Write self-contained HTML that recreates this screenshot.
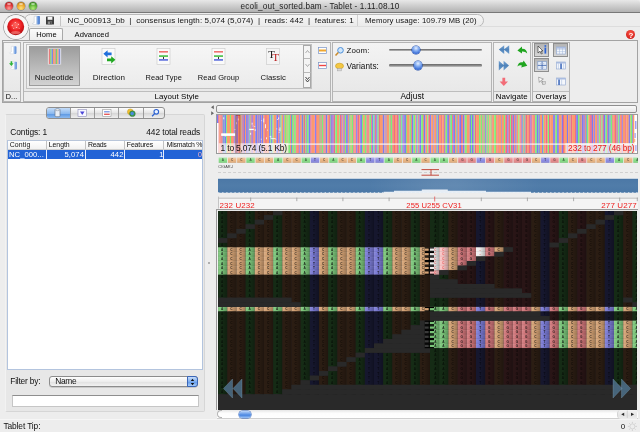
<!DOCTYPE html>
<html lang="en"><head><meta charset="utf-8"><title>ecoli_out_sorted.bam - Tablet - 1.11.08.10</title>
<style>

html,body{margin:0;padding:0;}
body{width:640px;height:432px;overflow:hidden;background:#ededed;position:relative;font-family:"Liberation Sans",sans-serif;color:#000;}
.a{position:absolute;}
.t{position:absolute;white-space:nowrap;line-height:1;}
#titlebar{left:0;top:0;width:640px;height:11.6px;background:linear-gradient(#e8e8e8,#cfcfcf 45%,#b2b2b2);border-bottom:1px solid #787878;border-radius:3px 3px 0 0;}
.tl{position:absolute;top:2px;width:8px;height:8px;border-radius:50%;}
#taskrow{left:0;top:13px;width:640px;height:15px;background:#ededed;}
#ribbon{left:1.5px;top:40.4px;width:636px;height:62.6px;border:1px solid #a3a3a3;background:#ededed;box-sizing:border-box;}
.band{position:absolute;top:42px;height:59.5px;border:1px solid #b4b4b4;background:linear-gradient(#f3f3f3,#e6e6e6);box-sizing:border-box;}
.bandt{position:absolute;left:0;right:0;bottom:0;height:9px;border-top:1px solid #bdbdbd;background:#ececec;}

</style></head><body>
<div class="a" id="titlebar"></div>
<div class="tl" style="left:4.9px;top:2.2px;background:radial-gradient(circle at 50% 78%,#ff9c98 0,#dd2f30 55%,#8a1b1b 100%);box-shadow:0 0 0 .5px rgba(60,60,60,.55)"></div>
<div class="a" style="left:6.9px;top:2.8px;width:4px;height:2px;border-radius:50%;background:rgba(255,255,255,.55)"></div>
<div class="tl" style="left:16.9px;top:2.2px;background:radial-gradient(circle at 50% 78%,#ffe27a 0,#eaa024 55%,#8e5a0e 100%);box-shadow:0 0 0 .5px rgba(60,60,60,.55)"></div>
<div class="a" style="left:18.9px;top:2.8px;width:4px;height:2px;border-radius:50%;background:rgba(255,255,255,.55)"></div>
<div class="tl" style="left:28.9px;top:2.2px;background:radial-gradient(circle at 50% 78%,#b6ec7c 0,#52ae2e 55%,#2a6616 100%);box-shadow:0 0 0 .5px rgba(60,60,60,.55)"></div>
<div class="a" style="left:30.9px;top:2.8px;width:4px;height:2px;border-radius:50%;background:rgba(255,255,255,.55)"></div>
<div class="a" id="taskrow"></div>
<div class="a" style="left:24px;top:14px;width:459.5px;height:13px;border:1px solid #b9b9b9;border-radius:7px;background:linear-gradient(#f6f6f6,#ebebeb);box-sizing:border-box"></div>
<div class="a" style="left:60px;top:16px;width:1px;height:10px;background:#c4c4c4"></div>
<div class="a" style="left:357px;top:15px;width:1px;height:11px;background:#d0d0d0"></div>
<div class="a" style="left:3.6px;top:14.8px;width:24.2px;height:24.2px;border-radius:50%;background:radial-gradient(circle at 50% 50%,#fdfdfd 0,#f6f6f6 70%,#e2e2e2 100%);box-shadow:0 0 0 .7px #8c8c8c"></div>
<svg class="a" style="left:7px;top:18px" width="18" height="18" viewBox="0 0 18 18"><defs><radialGradient id="orb" cx=".5" cy=".4" r=".62"><stop offset="0" stop-color="#ff6a62"/><stop offset=".55" stop-color="#ec1f22"/><stop offset="1" stop-color="#a80b0e"/></radialGradient></defs><circle cx="8.7" cy="8.8" r="8.5" fill="url(#orb)"/><ellipse cx="8.7" cy="14.6" rx="4.6" ry="1.6" fill="#ff9a94" fill-opacity=".55"/><g fill="#fff" fill-opacity=".9"><circle cx="5.2" cy="7.2" r=".55"/><circle cx="8.2" cy="4.6" r=".5"/><circle cx="11.4" cy="6.2" r=".55"/><circle cx="9.6" cy="9.4" r=".5"/><circle cx="6.6" cy="10.6" r=".45"/><circle cx="12.2" cy="10.2" r=".45"/></g><path d="M5.2 7.2 L8.2 4.6 L11.4 6.2 L9.6 9.4 L6.6 10.6 L5.2 7.2 M9.6 9.4 L12.2 10.2" stroke="#fff" stroke-opacity=".45" stroke-width=".35" fill="none"/></svg>
<svg class="a" style="left:31px;top:15px" width="26" height="12" viewBox="0 0 26 12"><defs><linearGradient id="bk" x1="0" x2="1" y1="0" y2="0"><stop offset="0" stop-color="#9cc0f0"/><stop offset="1" stop-color="#2f66c4"/></linearGradient></defs><path d="M1.2 8.6 L2 9.4 L5.6 9.4 L5.6 1.2 L3.2 1.2 L3.2 7.8 Z" fill="#fff" stroke="#b8c0cc" stroke-width=".5"/><path d="M5.6 1 L8.2 1 Q8.8 1 8.8 1.8 L8.8 8.6 Q8.8 9.6 7.6 9.6 L5.6 9.6 Z" fill="url(#bk)"/><rect x="15" y="1.6" width="8" height="8" rx=".6" fill="#3c3c3c"/><rect x="16.6" y="1.8" width="4.8" height="3" fill="#f4f4f4"/><rect x="16.8" y="6.4" width="4.2" height="3.2" fill="#8e8e8e"/><rect x="19.4" y="6.8" width="1" height="2.4" fill="#222"/></svg>
<div class="a" style="left:28px;top:26px;width:612px;height:1px;background:#dddddd"></div>
<div class="a" style="left:29px;top:28px;width:34px;height:14px;border:1px solid #a9a9a9;border-bottom:none;border-radius:2px 2px 0 0;background:linear-gradient(#fbfbfb,#ececec);box-sizing:border-box"></div>
<div class="a" style="left:626px;top:30px;width:9px;height:9px;border-radius:50%;background:radial-gradient(circle at 50% 35%,#ff5a4a,#c40d0d)"></div>
<div class="a" id="ribbon"></div>
<div class="a" style="left:29.5px;top:41px;width:33px;height:1px;background:#ececec"></div>
<div class="band" style="left:3px;width:18px"><div class="bandt"></div></div>
<div class="band" style="left:23px;width:308px"><div class="bandt"></div></div>
<div class="band" style="left:332px;width:160px"><div class="bandt"></div></div>
<div class="band" style="left:493px;width:38px"><div class="bandt"></div></div>
<div class="band" style="left:532px;width:38px"><div class="bandt"></div></div>
<div class="a" style="left:26px;top:44px;width:285.5px;height:44.5px;border:1px solid #c2c2c2;box-sizing:border-box;background:linear-gradient(#f6f6f6,#ebebeb)"></div>
<div class="a" style="left:29px;top:46px;width:51px;height:40px;border:1px solid #9c9c9c;background:linear-gradient(#9d9d9d,#bdbdbd 60%,#d2d2d2);box-sizing:border-box"></div>
<svg class="a" style="left:40px;top:46px" width="260" height="22" viewBox="0 0 260 22"><rect x="8" y="2.5" width="13" height="16" fill="#f6f6f6" stroke="#c8c8c8" stroke-width=".6"/><rect x="8.8" y="3" width="1.4" height="15" fill="#e67c7c"/><rect x="10.2" y="3" width="1.4" height="15" fill="#74d074"/><rect x="11.6" y="3" width="1.4" height="15" fill="#7c88e4"/><rect x="13" y="3" width="1.4" height="15" fill="#f0a466"/><rect x="14.4" y="3" width="1.4" height="15" fill="#e67c7c"/><rect x="15.8" y="3" width="1.4" height="15" fill="#74d074"/><rect x="17.2" y="3" width="1.4" height="15" fill="#f0a466"/><rect x="18.6" y="3" width="1.6" height="15" fill="#7c88e4"/><rect x="62" y="2.5" width="13" height="16" fill="#fafafa" stroke="#c8c8c8" stroke-width=".6"/><path d="M63.4 7.8 L67.6 4.2 L67.6 6.4 L71.6 6.4 L71.6 9.2 L67.6 9.2 L67.6 11.4 Z" fill="#1f6fdc"/><path d="M75.4 13.8 L71.2 10.2 L71.2 12.4 L67 12.4 L67 15.2 L71.2 15.2 L71.2 17.4 Z" fill="#22a822"/><rect x="117" y="2.5" width="13" height="16" fill="#fafafa" stroke="#c8c8c8" stroke-width=".6"/><rect x="119" y="5" width="9" height="1.6" fill="#ee7070"/><rect x="119" y="9.2" width="9" height="1.8" fill="#58c458"/><rect x="119" y="13" width="9" height="1.8" fill="#6a7be0"/><rect x="123" y="11" width="1" height="2" fill="#333"/><rect x="172" y="2.5" width="13" height="16" fill="#fafafa" stroke="#c8c8c8" stroke-width=".6"/><rect x="174" y="5" width="9" height="1.6" fill="#ee7070"/><rect x="174" y="9.2" width="9" height="1.8" fill="#58c458"/><rect x="174" y="13" width="9" height="1.8" fill="#6a7be0"/><rect x="178" y="11" width="1" height="2" fill="#333"/><rect x="226.5" y="2.5" width="13" height="16" fill="#f4f4f4" stroke="#c8c8c8" stroke-width=".6"/></svg>
<div class="a" style="left:303.4px;top:45px;width:7.6px;height:42.6px;border:1px solid #a8a8a8;background:#f4f4f4;box-sizing:border-box"></div>
<div class="a" style="left:304px;top:58px;width:7px;height:1px;background:#b8b8b8"></div><div class="a" style="left:304px;top:72px;width:7px;height:1px;background:#b8b8b8"></div>
<svg class="a" style="left:304px;top:45px" width="7" height="42" viewBox="0 0 7 42"><path d="M1.5 8 L3.5 5.5 L5.5 8" fill="none" stroke="#999" stroke-width=".8"/><path d="M1.5 19 L3.5 21.5 L5.5 19" fill="none" stroke="#999" stroke-width=".8"/><path d="M1.5 32 L3.5 34.5 L5.5 32 M1.5 34.5 L3.5 37 L5.5 34.5" fill="none" stroke="#333" stroke-width=".9"/></svg>
<svg class="a" style="left:317px;top:45px" width="12" height="26" viewBox="0 0 12 26"><rect x="1.5" y="2.5" width="8" height="6" fill="#fff" stroke="#7a93c4" stroke-width=".7"/><rect x="2" y="4.5" width="7" height="2" fill="#f0a830"/><rect x="1.5" y="17.5" width="8" height="6" fill="#fff" stroke="#7a93c4" stroke-width=".7"/><rect x="2" y="19.8" width="7" height="1.4" fill="#e44"/></svg>
<svg class="a" style="left:8px;top:45px" width="12" height="27" viewBox="0 0 12 27"><defs><linearGradient id="bk2" x1="0" x2="1" y1="0" y2="0"><stop offset="0" stop-color="#b4d0f4"/><stop offset="1" stop-color="#4a7fd2"/></linearGradient></defs><path d="M1.6 7.8 L2.4 8.8 L5.6 8.8 L5.6 1.4 L3.4 1.4 L3.4 7 Z" fill="#fff" stroke="#c4ccd8" stroke-width=".4"/><path d="M5.6 1.2 L7.8 1.2 Q8.4 1.2 8.4 2 L8.4 8 Q8.4 9 7.4 9 L5.6 9 Z" fill="url(#bk2)"/><path d="M2.6 23.4 L3.4 24.4 L6.2 24.4 L6.2 17 L4.2 17 L4.2 22.6 Z" fill="#fff" stroke="#c4ccd8" stroke-width=".4"/><path d="M6.2 16.8 L8.2 16.8 Q8.8 16.8 8.8 17.6 L8.8 23.6 Q8.8 24.6 7.8 24.6 L6.2 24.6 Z" fill="url(#bk2)"/><path d="M2.6 16.2 L2.6 18.2 L1 18.2 L3.4 21 L5.6 18.2 L4.2 18.2 L4.2 16.2 Z" fill="#2fb43a"/></svg>
<div class="a" style="left:388.6px;top:48.6px;width:93.4px;height:2.7px;border-radius:1.3px;background:linear-gradient(#666,#8e8e8e 55%,#c8c8c8)"></div>
<div class="a" style="left:411.8px;top:45.6px;width:8.6px;height:8.6px;border-radius:50%;background:radial-gradient(circle at 50% 28%,#e4efff 0,#7fa9f0 40%,#3c6fd6 75%,#2a58bc 100%);box-shadow:0 0 0 .6px #1f4aa6"></div>
<div class="a" style="left:388.6px;top:64.1px;width:93.4px;height:2.7px;border-radius:1.3px;background:linear-gradient(#666,#8e8e8e 55%,#c8c8c8)"></div>
<div class="a" style="left:413.8px;top:61.1px;width:8.6px;height:8.6px;border-radius:50%;background:radial-gradient(circle at 50% 28%,#e4efff 0,#7fa9f0 40%,#3c6fd6 75%,#2a58bc 100%);box-shadow:0 0 0 .6px #1f4aa6"></div>
<svg class="a" style="left:334px;top:45px" width="12" height="30" viewBox="0 0 12 30"><circle cx="6.5" cy="5.3" r="2.8" fill="#cfe6fb" stroke="#4d8fd8" stroke-width="1"/><path d="M4.3 7.5 L1.5 10.5" stroke="#c98a2b" stroke-width="1.5"/><ellipse cx="5.5" cy="21" rx="4" ry="2.8" fill="#f4c844" stroke="#c79a1a" stroke-width=".6"/><rect x="3.5" y="23.5" width="4" height="2.4" fill="#d8d8d8" stroke="#999" stroke-width=".4"/></svg>
<svg class="a" style="left:494px;top:44px" width="36" height="46" viewBox="0 0 36 46"><defs><linearGradient id="nb" x1="0" x2="0" y1="0" y2="1"><stop offset="0" stop-color="#7aa6d4"/><stop offset=".5" stop-color="#4f83ba"/><stop offset="1" stop-color="#6c9ccc"/></linearGradient></defs><path d="M10.2 1.2 L4.8 5.6 L10.2 10.1 Z M15.2 1.2 L9.8 5.6 L15.2 10.1 Z" fill="url(#nb)"/><path d="M4.8 16.7 L10.2 21.5 L4.8 26.4 Z M9.6 16.7 L15 21.5 L9.6 26.4 Z" fill="url(#nb)"/><path d="M8.4 33.8 L11.2 33.8 L11.2 37.6 L14 37.6 L9.8 42 L5.6 37.6 L8.4 37.6 Z" fill="#f26d78"/><path d="M23.4 6.4 L28 2.6 L28 4.7 Q32.6 4.4 33.2 9.4 Q31 7.2 28 7.5 L28 9.6 Z" fill="#1fa51f"/><path d="M23.4 22.6 Q24.4 17.4 29 18.3 L29.6 16.5 L33.3 21.8 L27.2 23.6 L27.9 21.4 Q25.4 20.6 23.4 22.6 Z" fill="#1fa51f"/></svg>
<div class="a" style="left:534px;top:43px;width:15px;height:14px;border:1px solid #8e8e8e;background:linear-gradient(#b4b4b4,#d6d6d6);box-sizing:border-box"></div>
<div class="a" style="left:553px;top:43px;width:15px;height:14px;border:1px solid #8e8e8e;background:linear-gradient(#b4b4b4,#d6d6d6);box-sizing:border-box"></div>
<div class="a" style="left:534px;top:58px;width:15px;height:14px;border:1px solid #8e8e8e;background:linear-gradient(#b4b4b4,#d6d6d6);box-sizing:border-box"></div>
<svg class="a" style="left:534px;top:43px" width="36" height="46" viewBox="0 0 36 46"><path d="M4 3 L4 10 L6 8.3 L7.3 11 L8.3 10.5 L7 8 L9 8 Z" fill="#fff" stroke="#222" stroke-width=".6"/><rect x="10.5" y="4.6" width="1.7" height="6" fill="#2a62d8"/><rect x="10.5" y="2.2" width="1.7" height="1.6" fill="#2a62d8"/><rect x="22.5" y="4" width="9" height="7" fill="#f4f7fc" stroke="#8ea6d0" stroke-width=".6"/><path d="M22.5 6.3 H31.5 M22.5 8.6 H31.5 M25.5 4 V11 M28.5 4 V11" stroke="#9db2d8" stroke-width=".45"/><rect x="22.5" y="4" width="9" height="1.6" fill="#a9bce0"/><rect x="3.8" y="18.6" width="8.6" height="7.6" fill="#e4ecf8" stroke="#7f9ccc" stroke-width=".6"/><path d="M8.1 18.6 V26.2 M3.8 22.4 H12.4" stroke="#3a62ac" stroke-width=".8"/><path d="M6 20.5 H10.2 M6 24.3 H10.2" stroke="#9db2d8" stroke-width=".5"/><rect x="22.5" y="19" width="9" height="7" fill="#f4f7fc" stroke="#8ea6d0" stroke-width=".6"/><rect x="22.5" y="19" width="9" height="1.5" fill="#a9bce0"/><rect x="26.2" y="20.5" width="1.7" height="5.5" fill="#4f76c0"/><path d="M24.4 20.5 V26 M29.6 20.5 V26" stroke="#9db2d8" stroke-width=".45"/><path d="M4.6 34.2 L9.4 36 L7.4 37 L9.8 40.6 L8.9 41.2 L6.6 37.7 L5.3 39.4 Z" fill="#fff" stroke="#666" stroke-width=".5"/><rect x="8.6" y="38.4" width="3" height="2.8" fill="#d8d8d8" stroke="#8a8a8a" stroke-width=".4"/><rect x="22.5" y="35" width="9" height="7" fill="#f4f7fc" stroke="#8ea6d0" stroke-width=".6"/><rect x="22.5" y="35" width="9" height="1.5" fill="#a9bce0"/><rect x="24.2" y="36.5" width="1.7" height="5.5" fill="#4f76c0"/><path d="M27.6 36.5 V42" stroke="#9db2d8" stroke-width=".45"/></svg>
<div class="a" style="left:5px;top:114px;width:200px;height:298px;border:1px solid #d6d6d6;border-left-color:#f2f2f2;background:#e7e7e7;box-sizing:border-box;border-radius:2px"></div>
<div class="a" style="left:46px;top:107px;width:119px;height:11.5px;border:1px solid #8f8f8f;border-radius:3px;background:linear-gradient(#fdfdfd,#e4e4e4 50%,#d6d6d6 52%,#efefef);box-sizing:border-box;overflow:hidden"><div class="a" style="left:0;top:0;width:22.5px;height:12px;background:linear-gradient(#c4dcf8,#86b6ee 50%,#5f9ae4 52%,#a6ccf5)"></div><div class="a" style="left:22.5px;top:0;width:1px;height:12px;background:#9a9a9a"></div><div class="a" style="left:47px;top:0;width:1px;height:12px;background:#9a9a9a"></div><div class="a" style="left:71.3px;top:0;width:1px;height:12px;background:#9a9a9a"></div><div class="a" style="left:96.3px;top:0;width:1px;height:12px;background:#9a9a9a"></div></div>
<svg class="a" style="left:46px;top:107px" width="119" height="12" viewBox="0 0 119 12"><rect x="9" y="2.2" width="5" height="7.5" rx="1" fill="#e8eef6" stroke="#6a7a90" stroke-width=".7"/><ellipse cx="11.5" cy="2.8" rx="2.5" ry=".9" fill="#fff" stroke="#6a7a90" stroke-width=".5"/><rect x="32" y="2.5" width="8.5" height="7" fill="#f8f8ff" stroke="#8d8db8" stroke-width=".6"/><path d="M34 4.5 L38.5 4.5 L36.25 8 Z" fill="#4b46d8"/><rect x="56.7" y="2.5" width="8.3" height="7" fill="#fff" stroke="#999" stroke-width=".6"/><rect x="58.1" y="4.2" width="5.6" height="1.2" fill="#6b8de0"/><rect x="58.1" y="6.6" width="5.6" height="1.4" fill="#e45a5a"/><circle cx="84.3" cy="4.8" r="2.9" fill="#f0c030" stroke="#b48a10" stroke-width=".4"/><circle cx="86.4" cy="6.7" r="2.9" fill="#3c9a50" stroke="#256a30" stroke-width=".4"/><circle cx="86.2" cy="6.5" r="1.7" fill="#4a8ae0"/><circle cx="110.3" cy="4.8" r="2.3" fill="#eaf3ff" stroke="#2d62d0" stroke-width="1.1"/><path d="M108.6 6.6 L106.1 9.3" stroke="#2d62d0" stroke-width="1.3"/></svg>
<div class="a" style="left:7px;top:140px;width:196px;height:229.5px;background:#fff;border:1px solid #b3c4de;border-top-color:#b9c6da;box-sizing:border-box"></div>
<div class="a" style="left:8px;top:141px;width:194px;height:8.5px;background:linear-gradient(#fff,#f2f2f2);border-bottom:1px solid #d0d0d0;box-sizing:border-box"></div>
<div class="a" style="left:8px;top:150px;width:194px;height:9px;background:#2263d6"></div>
<div class="a" style="left:45.8px;top:141px;width:1px;height:8px;background:#c2c2c2"></div>
<div class="a" style="left:45.8px;top:150px;width:1px;height:9px;background:#e8eefc"></div>
<div class="a" style="left:84.9px;top:141px;width:1px;height:8px;background:#c2c2c2"></div>
<div class="a" style="left:84.9px;top:150px;width:1px;height:9px;background:#e8eefc"></div>
<div class="a" style="left:123.9px;top:141px;width:1px;height:8px;background:#c2c2c2"></div>
<div class="a" style="left:123.9px;top:150px;width:1px;height:9px;background:#e8eefc"></div>
<div class="a" style="left:163.0px;top:141px;width:1px;height:8px;background:#c2c2c2"></div>
<div class="a" style="left:163.0px;top:150px;width:1px;height:9px;background:#e8eefc"></div>
<div class="a" style="left:48.5px;top:375.5px;width:149px;height:11.5px;border:1px solid #8c8c8c;border-radius:3px;background:linear-gradient(#fefefe,#ededed 50%,#e0e0e0 52%,#f2f2f2);box-sizing:border-box;box-shadow:0 .6px .6px rgba(0,0,0,.25)"></div>
<div class="a" style="left:186.5px;top:375.5px;width:11px;height:11.5px;border:1px solid #3a66b8;border-radius:0 3px 3px 0;background:linear-gradient(#c6dcfa,#7eaef0 50%,#5a94e8 52%,#a9cdf8);box-sizing:border-box"></div>
<svg class="a" style="left:186.5px;top:375.5px" width="11" height="12" viewBox="0 0 11 12"><path d="M3.8 5 L5.5 2.8 L7.2 5 Z M3.8 7 L5.5 9.2 L7.2 7 Z" fill="#111"/></svg>
<div class="a" style="left:12px;top:394.5px;width:187px;height:12px;border:1px solid #c6c6c6;border-top-color:#8e8e8e;background:#fff;box-sizing:border-box"></div>
<div class="a" style="left:0;top:419px;width:640px;height:1px;background:#f6f6f6"></div>
<svg class="a" style="left:627px;top:420.5px" width="11" height="11" viewBox="0 0 11 11"><circle cx="5.4" cy="5.4" r="2.5" fill="none" stroke="#cfcfcf" stroke-width=".8"/><path d="M5.4 .9 V2.4 M5.4 8.4 V9.9 M.9 5.4 H2.4 M8.4 5.4 H9.9 M2.2 2.2 L3.3 3.3 M7.5 7.5 L8.6 8.6 M8.6 2.2 L7.5 3.3 M2.2 8.6 L3.3 7.5" stroke="#cdcdcd" stroke-width=".9"/></svg>
<svg class="a" style="left:209px;top:102px" width="7" height="16" viewBox="0 0 7 16"><path d="M4.8 3.2 L2 5.2 L4.8 7.2 Z" fill="#666"/><path d="M2.2 9.2 L5 11.2 L2.2 13.2 Z" fill="#666"/></svg>
<div class="a" style="left:208px;top:262px;width:2px;height:2px;background:#9a9a9a;border-radius:50%"></div>
<div class="a" style="left:216px;top:104.8px;width:421px;height:8.4px;border:1px solid #8f8f8f;border-radius:2px;background:linear-gradient(#f9f9f9,#e9e9e9);box-sizing:border-box"></div>
<div class="a" style="left:216px;top:113.7px;width:421.5px;height:40.8px;border:1px solid #9a9a9a;background:#fff;box-sizing:border-box;overflow:hidden">
<svg class="a" style="left:0.4px;top:0" width="420" height="39" viewBox="0 0 420 39">
<rect x="0.0" y="0" width="1.3" height="38" fill="#7a7af4"/>
<rect x="1.2" y="0" width="1.3" height="38" fill="#ee6c86"/>
<rect x="2.4" y="0" width="1.2" height="38" fill="#fb9a6c"/>
<rect x="3.5" y="0" width="1.3" height="38" fill="#ee6c86"/>
<rect x="4.7" y="0" width="1.1" height="38" fill="#fb9a6c"/>
<rect x="5.6" y="0" width="1.3" height="38" fill="#7a7af4"/>
<rect x="6.8" y="0" width="0.8" height="38" fill="#7af07a"/>
<rect x="7.4" y="0" width="1.8" height="38" fill="#7a7af4"/>
<rect x="9.1" y="0" width="1.1" height="38" fill="#7af07a"/>
<rect x="10.0" y="0" width="3.0" height="38" fill="#fb9a6c"/>
<rect x="12.9" y="0" width="1.2" height="38" fill="#7af07a"/>
<rect x="14.0" y="0" width="2.4" height="38" fill="#fb9a6c"/>
<rect x="16.3" y="0" width="1.2" height="38" fill="#ee6c86"/>
<rect x="17.4" y="0" width="1.3" height="38" fill="#7a7af4"/>
<rect x="18.6" y="0" width="0.8" height="38" fill="#7af07a"/>
<rect x="19.2" y="0" width="1.8" height="38" fill="#7a7af4"/>
<rect x="20.9" y="0" width="3.0" height="38" fill="#fb9a6c"/>
<rect x="23.8" y="0" width="0.8" height="38" fill="#7af07a"/>
<rect x="24.4" y="0" width="0.8" height="38" fill="#ee6c86"/>
<rect x="25.0" y="0" width="0.8" height="38" fill="#7a7af4"/>
<rect x="25.6" y="0" width="0.8" height="38" fill="#fb9a6c"/>
<rect x="26.2" y="0" width="0.8" height="38" fill="#ee6c86"/>
<rect x="26.8" y="0" width="1.2" height="38" fill="#7a7af4"/>
<rect x="27.9" y="0" width="1.3" height="38" fill="#fb9a6c"/>
<rect x="29.1" y="0" width="1.8" height="38" fill="#7a7af4"/>
<rect x="30.8" y="0" width="0.8" height="38" fill="#fb9a6c"/>
<rect x="31.4" y="0" width="1.3" height="38" fill="#7a7af4"/>
<rect x="32.6" y="0" width="1.1" height="38" fill="#7af07a"/>
<rect x="33.5" y="0" width="1.2" height="38" fill="#ee6c86"/>
<rect x="34.6" y="0" width="1.2" height="38" fill="#7a7af4"/>
<rect x="35.7" y="0" width="1.1" height="38" fill="#ee6c86"/>
<rect x="36.6" y="0" width="1.8" height="38" fill="#fb9a6c"/>
<rect x="38.3" y="0" width="1.8" height="38" fill="#7a7af4"/>
<rect x="40.0" y="0" width="0.8" height="38" fill="#fb9a6c"/>
<rect x="40.6" y="0" width="1.3" height="38" fill="#7a7af4"/>
<rect x="41.8" y="0" width="0.8" height="38" fill="#fb9a6c"/>
<rect x="42.4" y="0" width="1.8" height="38" fill="#7a7af4"/>
<rect x="44.1" y="0" width="0.8" height="38" fill="#fb9a6c"/>
<rect x="44.7" y="0" width="1.8" height="38" fill="#7a7af4"/>
<rect x="46.4" y="0" width="1.8" height="38" fill="#fb9a6c"/>
<rect x="48.1" y="0" width="1.8" height="38" fill="#ee6c86"/>
<rect x="49.8" y="0" width="2.4" height="38" fill="#fb9a6c"/>
<rect x="52.1" y="0" width="1.3" height="38" fill="#7a7af4"/>
<rect x="53.3" y="0" width="1.1" height="38" fill="#7af07a"/>
<rect x="54.2" y="0" width="1.3" height="38" fill="#7a7af4"/>
<rect x="55.4" y="0" width="1.2" height="38" fill="#7af07a"/>
<rect x="56.5" y="0" width="3.0" height="38" fill="#fb9a6c"/>
<rect x="59.4" y="0" width="1.8" height="38" fill="#7a7af4"/>
<rect x="61.1" y="0" width="0.8" height="38" fill="#ee6c86"/>
<rect x="61.7" y="0" width="0.8" height="38" fill="#fb9a6c"/>
<rect x="62.3" y="0" width="1.3" height="38" fill="#7a7af4"/>
<rect x="63.5" y="0" width="1.2" height="38" fill="#7af07a"/>
<rect x="64.6" y="0" width="1.8" height="38" fill="#fb9a6c"/>
<rect x="66.3" y="0" width="1.1" height="38" fill="#7a7af4"/>
<rect x="67.2" y="0" width="0.8" height="38" fill="#fb9a6c"/>
<rect x="67.8" y="0" width="1.3" height="38" fill="#7af07a"/>
<rect x="69.0" y="0" width="0.8" height="38" fill="#fb9a6c"/>
<rect x="69.6" y="0" width="1.2" height="38" fill="#7af07a"/>
<rect x="70.7" y="0" width="0.8" height="38" fill="#fb9a6c"/>
<rect x="71.3" y="0" width="1.8" height="38" fill="#7af07a"/>
<rect x="73.0" y="0" width="1.1" height="38" fill="#fb9a6c"/>
<rect x="73.9" y="0" width="1.1" height="38" fill="#7a7af4"/>
<rect x="74.8" y="0" width="1.8" height="38" fill="#7af07a"/>
<rect x="76.5" y="0" width="0.8" height="38" fill="#ee6c86"/>
<rect x="77.1" y="0" width="1.8" height="38" fill="#7af07a"/>
<rect x="78.8" y="0" width="0.8" height="38" fill="#fb9a6c"/>
<rect x="79.4" y="0" width="0.8" height="38" fill="#ee6c86"/>
<rect x="80.0" y="0" width="1.3" height="38" fill="#fb9a6c"/>
<rect x="81.2" y="0" width="1.3" height="38" fill="#ee6c86"/>
<rect x="82.4" y="0" width="0.8" height="38" fill="#7a7af4"/>
<rect x="83.0" y="0" width="1.8" height="38" fill="#fb9a6c"/>
<rect x="84.7" y="0" width="1.3" height="38" fill="#7a7af4"/>
<rect x="85.9" y="0" width="0.8" height="38" fill="#7af07a"/>
<rect x="86.5" y="0" width="1.8" height="38" fill="#ee6c86"/>
<rect x="88.2" y="0" width="0.8" height="38" fill="#7af07a"/>
<rect x="88.8" y="0" width="0.8" height="38" fill="#fb9a6c"/>
<rect x="89.4" y="0" width="0.8" height="38" fill="#7a7af4"/>
<rect x="90.0" y="0" width="1.8" height="38" fill="#7af07a"/>
<rect x="91.7" y="0" width="1.8" height="38" fill="#7a7af4"/>
<rect x="93.4" y="0" width="1.3" height="38" fill="#ee6c86"/>
<rect x="94.6" y="0" width="3.0" height="38" fill="#fb9a6c"/>
<rect x="97.5" y="0" width="0.8" height="38" fill="#ee6c86"/>
<rect x="98.1" y="0" width="1.2" height="38" fill="#7a7af4"/>
<rect x="99.2" y="0" width="0.8" height="38" fill="#ee6c86"/>
<rect x="99.8" y="0" width="2.4" height="38" fill="#fb9a6c"/>
<rect x="102.1" y="0" width="0.8" height="38" fill="#ee6c86"/>
<rect x="102.7" y="0" width="1.1" height="38" fill="#7af07a"/>
<rect x="103.6" y="0" width="1.2" height="38" fill="#ee6c86"/>
<rect x="104.7" y="0" width="1.8" height="38" fill="#7af07a"/>
<rect x="106.4" y="0" width="1.3" height="38" fill="#ee6c86"/>
<rect x="107.6" y="0" width="1.2" height="38" fill="#fb9a6c"/>
<rect x="108.7" y="0" width="1.8" height="38" fill="#7a7af4"/>
<rect x="110.4" y="0" width="1.8" height="38" fill="#fb9a6c"/>
<rect x="112.1" y="0" width="1.1" height="38" fill="#ee6c86"/>
<rect x="113.0" y="0" width="0.8" height="38" fill="#7af07a"/>
<rect x="113.6" y="0" width="1.3" height="38" fill="#7a7af4"/>
<rect x="114.8" y="0" width="0.8" height="38" fill="#ee6c86"/>
<rect x="115.4" y="0" width="1.3" height="38" fill="#7a7af4"/>
<rect x="116.6" y="0" width="1.8" height="38" fill="#ee6c86"/>
<rect x="118.3" y="0" width="1.8" height="38" fill="#7af07a"/>
<rect x="120.0" y="0" width="2.4" height="38" fill="#fb9a6c"/>
<rect x="122.3" y="0" width="0.8" height="38" fill="#7af07a"/>
<rect x="122.9" y="0" width="1.8" height="38" fill="#ee6c86"/>
<rect x="124.6" y="0" width="0.8" height="38" fill="#7a7af4"/>
<rect x="125.2" y="0" width="1.3" height="38" fill="#fb9a6c"/>
<rect x="126.4" y="0" width="1.1" height="38" fill="#7a7af4"/>
<rect x="127.3" y="0" width="0.8" height="38" fill="#ee6c86"/>
<rect x="127.9" y="0" width="1.3" height="38" fill="#7af07a"/>
<rect x="129.1" y="0" width="1.8" height="38" fill="#7a7af4"/>
<rect x="130.8" y="0" width="1.2" height="38" fill="#fb9a6c"/>
<rect x="131.9" y="0" width="0.8" height="38" fill="#7a7af4"/>
<rect x="132.5" y="0" width="1.3" height="38" fill="#7af07a"/>
<rect x="133.7" y="0" width="1.1" height="38" fill="#fb9a6c"/>
<rect x="134.6" y="0" width="1.8" height="38" fill="#7af07a"/>
<rect x="136.3" y="0" width="1.3" height="38" fill="#ee6c86"/>
<rect x="137.5" y="0" width="1.2" height="38" fill="#fb9a6c"/>
<rect x="138.6" y="0" width="0.8" height="38" fill="#ee6c86"/>
<rect x="139.2" y="0" width="1.3" height="38" fill="#7a7af4"/>
<rect x="140.4" y="0" width="1.8" height="38" fill="#ee6c86"/>
<rect x="142.1" y="0" width="1.2" height="38" fill="#fb9a6c"/>
<rect x="143.2" y="0" width="1.8" height="38" fill="#7a7af4"/>
<rect x="144.9" y="0" width="1.3" height="38" fill="#7af07a"/>
<rect x="146.1" y="0" width="1.8" height="38" fill="#fb9a6c"/>
<rect x="147.8" y="0" width="1.8" height="38" fill="#7af07a"/>
<rect x="149.5" y="0" width="1.3" height="38" fill="#ee6c86"/>
<rect x="150.7" y="0" width="0.8" height="38" fill="#fb9a6c"/>
<rect x="151.3" y="0" width="0.8" height="38" fill="#ee6c86"/>
<rect x="151.9" y="0" width="0.8" height="38" fill="#fb9a6c"/>
<rect x="152.5" y="0" width="1.8" height="38" fill="#7af07a"/>
<rect x="154.2" y="0" width="1.1" height="38" fill="#ee6c86"/>
<rect x="155.1" y="0" width="1.3" height="38" fill="#7a7af4"/>
<rect x="156.3" y="0" width="1.3" height="38" fill="#7af07a"/>
<rect x="157.5" y="0" width="0.8" height="38" fill="#7a7af4"/>
<rect x="158.1" y="0" width="1.3" height="38" fill="#ee6c86"/>
<rect x="159.3" y="0" width="1.3" height="38" fill="#7a7af4"/>
<rect x="160.5" y="0" width="1.3" height="38" fill="#7af07a"/>
<rect x="161.7" y="0" width="1.3" height="38" fill="#ee6c86"/>
<rect x="162.9" y="0" width="3.0" height="38" fill="#fb9a6c"/>
<rect x="165.8" y="0" width="1.8" height="38" fill="#7a7af4"/>
<rect x="167.5" y="0" width="1.2" height="38" fill="#fb9a6c"/>
<rect x="168.6" y="0" width="1.1" height="38" fill="#7a7af4"/>
<rect x="169.5" y="0" width="3.0" height="38" fill="#fb9a6c"/>
<rect x="172.4" y="0" width="0.8" height="38" fill="#7af07a"/>
<rect x="173.0" y="0" width="0.8" height="38" fill="#ee6c86"/>
<rect x="173.6" y="0" width="1.8" height="38" fill="#7af07a"/>
<rect x="175.3" y="0" width="0.8" height="38" fill="#ee6c86"/>
<rect x="175.9" y="0" width="1.1" height="38" fill="#fb9a6c"/>
<rect x="176.8" y="0" width="1.3" height="38" fill="#ee6c86"/>
<rect x="178.0" y="0" width="1.8" height="38" fill="#fb9a6c"/>
<rect x="179.7" y="0" width="1.3" height="38" fill="#ee6c86"/>
<rect x="180.9" y="0" width="0.8" height="38" fill="#fb9a6c"/>
<rect x="181.5" y="0" width="0.8" height="38" fill="#7a7af4"/>
<rect x="182.1" y="0" width="1.1" height="38" fill="#7af07a"/>
<rect x="183.0" y="0" width="0.8" height="38" fill="#fb9a6c"/>
<rect x="183.6" y="0" width="0.8" height="38" fill="#7a7af4"/>
<rect x="184.2" y="0" width="1.3" height="38" fill="#7af07a"/>
<rect x="185.4" y="0" width="1.3" height="38" fill="#7a7af4"/>
<rect x="186.6" y="0" width="0.8" height="38" fill="#ee6c86"/>
<rect x="187.2" y="0" width="1.8" height="38" fill="#7a7af4"/>
<rect x="188.9" y="0" width="1.1" height="38" fill="#7af07a"/>
<rect x="189.8" y="0" width="3.0" height="38" fill="#fb9a6c"/>
<rect x="192.7" y="0" width="1.3" height="38" fill="#7af07a"/>
<rect x="193.9" y="0" width="1.1" height="38" fill="#fb9a6c"/>
<rect x="194.8" y="0" width="1.8" height="38" fill="#7a7af4"/>
<rect x="196.5" y="0" width="1.8" height="38" fill="#7af07a"/>
<rect x="198.2" y="0" width="1.2" height="38" fill="#fb9a6c"/>
<rect x="199.3" y="0" width="1.2" height="38" fill="#7a7af4"/>
<rect x="200.4" y="0" width="1.1" height="38" fill="#7af07a"/>
<rect x="201.3" y="0" width="1.3" height="38" fill="#ee6c86"/>
<rect x="202.5" y="0" width="1.8" height="38" fill="#7a7af4"/>
<rect x="204.2" y="0" width="1.8" height="38" fill="#7af07a"/>
<rect x="205.9" y="0" width="1.1" height="38" fill="#fb9a6c"/>
<rect x="206.8" y="0" width="1.8" height="38" fill="#7a7af4"/>
<rect x="208.5" y="0" width="1.8" height="38" fill="#fb9a6c"/>
<rect x="210.2" y="0" width="1.3" height="38" fill="#7af07a"/>
<rect x="211.4" y="0" width="1.8" height="38" fill="#ee6c86"/>
<rect x="213.1" y="0" width="1.2" height="38" fill="#7a7af4"/>
<rect x="214.2" y="0" width="2.4" height="38" fill="#fb9a6c"/>
<rect x="216.5" y="0" width="0.8" height="38" fill="#7a7af4"/>
<rect x="217.1" y="0" width="2.4" height="38" fill="#fb9a6c"/>
<rect x="219.4" y="0" width="1.1" height="38" fill="#7a7af4"/>
<rect x="220.3" y="0" width="0.8" height="38" fill="#7af07a"/>
<rect x="220.9" y="0" width="1.1" height="38" fill="#7a7af4"/>
<rect x="221.8" y="0" width="2.4" height="38" fill="#fb9a6c"/>
<rect x="224.1" y="0" width="1.3" height="38" fill="#ee6c86"/>
<rect x="225.3" y="0" width="1.8" height="38" fill="#fb9a6c"/>
<rect x="227.0" y="0" width="0.8" height="38" fill="#7a7af4"/>
<rect x="227.6" y="0" width="1.1" height="38" fill="#ee6c86"/>
<rect x="228.5" y="0" width="1.8" height="38" fill="#7af07a"/>
<rect x="230.2" y="0" width="1.8" height="38" fill="#7a7af4"/>
<rect x="231.9" y="0" width="1.1" height="38" fill="#fb9a6c"/>
<rect x="232.8" y="0" width="0.8" height="38" fill="#7a7af4"/>
<rect x="233.4" y="0" width="1.8" height="38" fill="#7af07a"/>
<rect x="235.1" y="0" width="1.2" height="38" fill="#ee6c86"/>
<rect x="236.2" y="0" width="1.8" height="38" fill="#7a7af4"/>
<rect x="237.9" y="0" width="1.3" height="38" fill="#fb9a6c"/>
<rect x="239.1" y="0" width="0.8" height="38" fill="#7af07a"/>
<rect x="239.7" y="0" width="1.1" height="38" fill="#7a7af4"/>
<rect x="240.6" y="0" width="1.8" height="38" fill="#fb9a6c"/>
<rect x="242.3" y="0" width="1.8" height="38" fill="#7a7af4"/>
<rect x="244.0" y="0" width="1.1" height="38" fill="#ee6c86"/>
<rect x="244.9" y="0" width="1.1" height="38" fill="#fb9a6c"/>
<rect x="245.8" y="0" width="1.8" height="38" fill="#7a7af4"/>
<rect x="247.5" y="0" width="0.8" height="38" fill="#fb9a6c"/>
<rect x="248.1" y="0" width="1.8" height="38" fill="#7af07a"/>
<rect x="249.8" y="0" width="3.0" height="38" fill="#fb9a6c"/>
<rect x="252.7" y="0" width="1.3" height="38" fill="#7a7af4"/>
<rect x="253.9" y="0" width="1.2" height="38" fill="#7af07a"/>
<rect x="255.0" y="0" width="1.8" height="38" fill="#7a7af4"/>
<rect x="256.7" y="0" width="0.8" height="38" fill="#fb9a6c"/>
<rect x="257.3" y="0" width="0.8" height="38" fill="#7af07a"/>
<rect x="257.9" y="0" width="1.3" height="38" fill="#ee6c86"/>
<rect x="259.1" y="0" width="3.0" height="38" fill="#fb9a6c"/>
<rect x="262.0" y="0" width="1.2" height="38" fill="#7af07a"/>
<rect x="263.1" y="0" width="0.8" height="38" fill="#fb9a6c"/>
<rect x="263.7" y="0" width="1.8" height="38" fill="#7af07a"/>
<rect x="265.4" y="0" width="1.3" height="38" fill="#ee6c86"/>
<rect x="266.6" y="0" width="1.3" height="38" fill="#7af07a"/>
<rect x="267.8" y="0" width="0.8" height="38" fill="#ee6c86"/>
<rect x="268.4" y="0" width="1.1" height="38" fill="#7a7af4"/>
<rect x="269.3" y="0" width="1.3" height="38" fill="#7af07a"/>
<rect x="270.5" y="0" width="0.8" height="38" fill="#ee6c86"/>
<rect x="271.1" y="0" width="1.3" height="38" fill="#7af07a"/>
<rect x="272.3" y="0" width="1.3" height="38" fill="#fb9a6c"/>
<rect x="273.5" y="0" width="1.2" height="38" fill="#7af07a"/>
<rect x="274.6" y="0" width="1.1" height="38" fill="#ee6c86"/>
<rect x="275.5" y="0" width="1.8" height="38" fill="#fb9a6c"/>
<rect x="277.2" y="0" width="1.8" height="38" fill="#7af07a"/>
<rect x="278.9" y="0" width="1.8" height="38" fill="#fb9a6c"/>
<rect x="280.6" y="0" width="1.2" height="38" fill="#ee6c86"/>
<rect x="281.7" y="0" width="2.4" height="38" fill="#fb9a6c"/>
<rect x="284.0" y="0" width="0.8" height="38" fill="#7a7af4"/>
<rect x="284.6" y="0" width="2.4" height="38" fill="#fb9a6c"/>
<rect x="286.9" y="0" width="1.2" height="38" fill="#7af07a"/>
<rect x="288.0" y="0" width="0.8" height="38" fill="#fb9a6c"/>
<rect x="288.6" y="0" width="1.8" height="38" fill="#ee6c86"/>
<rect x="290.3" y="0" width="1.2" height="38" fill="#7a7af4"/>
<rect x="291.4" y="0" width="1.8" height="38" fill="#ee6c86"/>
<rect x="293.1" y="0" width="1.1" height="38" fill="#7af07a"/>
<rect x="294.0" y="0" width="1.8" height="38" fill="#ee6c86"/>
<rect x="295.7" y="0" width="1.3" height="38" fill="#7a7af4"/>
<rect x="296.9" y="0" width="1.1" height="38" fill="#fb9a6c"/>
<rect x="297.8" y="0" width="0.8" height="38" fill="#ee6c86"/>
<rect x="298.4" y="0" width="1.3" height="38" fill="#7a7af4"/>
<rect x="299.6" y="0" width="1.8" height="38" fill="#fb9a6c"/>
<rect x="301.3" y="0" width="1.2" height="38" fill="#7af07a"/>
<rect x="302.4" y="0" width="1.2" height="38" fill="#fb9a6c"/>
<rect x="303.5" y="0" width="1.2" height="38" fill="#ee6c86"/>
<rect x="304.6" y="0" width="1.2" height="38" fill="#7a7af4"/>
<rect x="305.7" y="0" width="0.8" height="38" fill="#7af07a"/>
<rect x="306.3" y="0" width="0.8" height="38" fill="#fb9a6c"/>
<rect x="306.9" y="0" width="0.8" height="38" fill="#7a7af4"/>
<rect x="307.5" y="0" width="1.1" height="38" fill="#7af07a"/>
<rect x="308.4" y="0" width="1.8" height="38" fill="#ee6c86"/>
<rect x="310.1" y="0" width="1.8" height="38" fill="#fb9a6c"/>
<rect x="311.8" y="0" width="1.8" height="38" fill="#ee6c86"/>
<rect x="313.5" y="0" width="1.1" height="38" fill="#7a7af4"/>
<rect x="314.4" y="0" width="1.2" height="38" fill="#ee6c86"/>
<rect x="315.5" y="0" width="1.8" height="38" fill="#fb9a6c"/>
<rect x="317.2" y="0" width="1.1" height="38" fill="#ee6c86"/>
<rect x="318.1" y="0" width="1.8" height="38" fill="#7af07a"/>
<rect x="319.8" y="0" width="1.3" height="38" fill="#7a7af4"/>
<rect x="321.0" y="0" width="0.8" height="38" fill="#7af07a"/>
<rect x="321.6" y="0" width="1.3" height="38" fill="#7a7af4"/>
<rect x="322.8" y="0" width="2.4" height="38" fill="#fb9a6c"/>
<rect x="325.1" y="0" width="1.2" height="38" fill="#7a7af4"/>
<rect x="326.2" y="0" width="0.8" height="38" fill="#7af07a"/>
<rect x="326.8" y="0" width="1.8" height="38" fill="#fb9a6c"/>
<rect x="328.5" y="0" width="1.8" height="38" fill="#ee6c86"/>
<rect x="330.2" y="0" width="0.8" height="38" fill="#fb9a6c"/>
<rect x="330.8" y="0" width="1.3" height="38" fill="#7af07a"/>
<rect x="332.0" y="0" width="1.3" height="38" fill="#ee6c86"/>
<rect x="333.2" y="0" width="3.0" height="38" fill="#fb9a6c"/>
<rect x="336.1" y="0" width="1.8" height="38" fill="#7a7af4"/>
<rect x="337.8" y="0" width="0.8" height="38" fill="#ee6c86"/>
<rect x="338.4" y="0" width="1.8" height="38" fill="#7af07a"/>
<rect x="340.1" y="0" width="1.8" height="38" fill="#7a7af4"/>
<rect x="341.8" y="0" width="3.0" height="38" fill="#fb9a6c"/>
<rect x="344.7" y="0" width="1.3" height="38" fill="#7a7af4"/>
<rect x="345.9" y="0" width="1.2" height="38" fill="#ee6c86"/>
<rect x="347.0" y="0" width="3.0" height="38" fill="#fb9a6c"/>
<rect x="349.9" y="0" width="1.3" height="38" fill="#7a7af4"/>
<rect x="351.1" y="0" width="1.8" height="38" fill="#fb9a6c"/>
<rect x="352.8" y="0" width="0.8" height="38" fill="#7a7af4"/>
<rect x="353.4" y="0" width="0.8" height="38" fill="#fb9a6c"/>
<rect x="354.0" y="0" width="1.2" height="38" fill="#ee6c86"/>
<rect x="355.1" y="0" width="3.0" height="38" fill="#fb9a6c"/>
<rect x="358.0" y="0" width="1.3" height="38" fill="#ee6c86"/>
<rect x="359.2" y="0" width="1.8" height="38" fill="#7a7af4"/>
<rect x="360.9" y="0" width="1.8" height="38" fill="#7af07a"/>
<rect x="362.6" y="0" width="1.3" height="38" fill="#ee6c86"/>
<rect x="363.8" y="0" width="0.8" height="38" fill="#7af07a"/>
<rect x="364.4" y="0" width="0.8" height="38" fill="#ee6c86"/>
<rect x="365.0" y="0" width="1.8" height="38" fill="#7a7af4"/>
<rect x="366.7" y="0" width="0.8" height="38" fill="#ee6c86"/>
<rect x="367.3" y="0" width="0.8" height="38" fill="#7a7af4"/>
<rect x="367.9" y="0" width="1.1" height="38" fill="#fb9a6c"/>
<rect x="368.8" y="0" width="1.1" height="38" fill="#7a7af4"/>
<rect x="369.7" y="0" width="1.8" height="38" fill="#7af07a"/>
<rect x="371.4" y="0" width="1.8" height="38" fill="#fb9a6c"/>
<rect x="373.1" y="0" width="1.8" height="38" fill="#ee6c86"/>
<rect x="374.8" y="0" width="1.3" height="38" fill="#7a7af4"/>
<rect x="376.0" y="0" width="0.8" height="38" fill="#ee6c86"/>
<rect x="376.6" y="0" width="0.8" height="38" fill="#fb9a6c"/>
<rect x="377.2" y="0" width="1.1" height="38" fill="#7a7af4"/>
<rect x="378.1" y="0" width="2.4" height="38" fill="#fb9a6c"/>
<rect x="380.4" y="0" width="1.3" height="38" fill="#7a7af4"/>
<rect x="381.6" y="0" width="0.8" height="38" fill="#fb9a6c"/>
<rect x="382.2" y="0" width="1.2" height="38" fill="#7af07a"/>
<rect x="383.3" y="0" width="1.2" height="38" fill="#ee6c86"/>
<rect x="384.4" y="0" width="1.3" height="38" fill="#7af07a"/>
<rect x="385.6" y="0" width="1.3" height="38" fill="#ee6c86"/>
<rect x="386.8" y="0" width="1.8" height="38" fill="#7a7af4"/>
<rect x="388.5" y="0" width="1.8" height="38" fill="#7af07a"/>
<rect x="390.2" y="0" width="0.8" height="38" fill="#ee6c86"/>
<rect x="390.8" y="0" width="1.2" height="38" fill="#7a7af4"/>
<rect x="391.9" y="0" width="0.8" height="38" fill="#7af07a"/>
<rect x="392.5" y="0" width="1.2" height="38" fill="#7a7af4"/>
<rect x="393.6" y="0" width="1.8" height="38" fill="#7af07a"/>
<rect x="395.3" y="0" width="1.1" height="38" fill="#ee6c86"/>
<rect x="396.2" y="0" width="1.8" height="38" fill="#fb9a6c"/>
<rect x="397.9" y="0" width="1.3" height="38" fill="#ee6c86"/>
<rect x="399.1" y="0" width="0.8" height="38" fill="#fb9a6c"/>
<rect x="399.7" y="0" width="1.1" height="38" fill="#7a7af4"/>
<rect x="400.6" y="0" width="0.8" height="38" fill="#fb9a6c"/>
<rect x="401.2" y="0" width="1.3" height="38" fill="#7af07a"/>
<rect x="402.4" y="0" width="0.8" height="38" fill="#7a7af4"/>
<rect x="403.0" y="0" width="1.3" height="38" fill="#fb9a6c"/>
<rect x="404.2" y="0" width="1.2" height="38" fill="#ee6c86"/>
<rect x="405.3" y="0" width="0.8" height="38" fill="#7a7af4"/>
<rect x="405.9" y="0" width="2.4" height="38" fill="#fb9a6c"/>
<rect x="408.2" y="0" width="1.3" height="38" fill="#ee6c86"/>
<rect x="409.4" y="0" width="2.4" height="38" fill="#fb9a6c"/>
<rect x="411.7" y="0" width="1.3" height="38" fill="#7a7af4"/>
<rect x="412.9" y="0" width="0.8" height="38" fill="#fb9a6c"/>
<rect x="413.5" y="0" width="1.8" height="38" fill="#7af07a"/>
<rect x="415.2" y="0" width="0.8" height="38" fill="#7a7af4"/>
<rect x="415.8" y="0" width="2.4" height="38" fill="#fb9a6c"/>
<rect x="41" y="28.5" width="379" height="1.2" fill="#fff" fill-opacity=".9"/>
<rect x="1.6" y="28.2" width="69.6" height="10" fill="#fff" fill-opacity=".62"/>
<rect x="348.4" y="28.2" width="69" height="10" fill="#fff" fill-opacity=".62"/>
<rect x="0" y="8" width="1.6" height="30" fill="#fff"/>
<rect x="417.3" y="0" width="3" height="39" fill="#fff"/><rect x="418.2" y="6" width="1.2" height="8" fill="#8a8af0"/><rect x="417.6" y="18" width="1" height="5" fill="#8a8af0"/><rect x="418.4" y="30" width="1" height="6" fill="#8a8af0"/><rect x="417.4" y="24" width=".8" height="3" fill="#f0a060"/>
<rect x="4.2" y="18.3" width="14" height="2.6" fill="#fff"/>
<rect x="32.2" y="13.8" width="4.6" height="1.3" fill="#fff"/><rect x="53.6" y="23.1" width="5" height="1" fill="#fff" fill-opacity=".8"/>
<rect x="17.7" y="14.0" width=".9" height="1.0" fill="#fff" fill-opacity=".9"/>
<rect x="62.5" y="12.4" width=".9" height="4.0" fill="#fff" fill-opacity=".9"/>
<rect x="6.3" y="2.3" width=".9" height="2.0" fill="#fff" fill-opacity=".9"/>
<rect x="19.1" y="7.2" width=".9" height="2.0" fill="#fff" fill-opacity=".9"/>
<rect x="37.7" y="14.1" width=".9" height="2.0" fill="#fff" fill-opacity=".9"/>
<rect x="44.2" y="5.3" width=".9" height="0.8" fill="#fff" fill-opacity=".9"/>
<rect x="59.3" y="13.5" width=".9" height="0.8" fill="#fff" fill-opacity=".9"/>
<rect x="46.3" y="3.4" width=".9" height="4.0" fill="#fff" fill-opacity=".9"/>
<rect x="4.8" y="19.2" width=".9" height="1.0" fill="#fff" fill-opacity=".9"/>
<rect x="33.2" y="17.8" width=".9" height="2.0" fill="#fff" fill-opacity=".9"/>
<rect x="49.1" y="22.3" width=".9" height="2.0" fill="#fff" fill-opacity=".9"/>
<rect x="50.1" y="14.7" width=".9" height="0.8" fill="#fff" fill-opacity=".9"/>
<rect x="60.0" y="4.1" width=".9" height="0.8" fill="#fff" fill-opacity=".9"/>
<rect x="34.7" y="7.7" width=".9" height="2.0" fill="#fff" fill-opacity=".9"/>
<rect x="53.4" y="20.8" width=".9" height="2.0" fill="#fff" fill-opacity=".9"/>
<rect x="35.5" y="10.5" width=".9" height="1.0" fill="#fff" fill-opacity=".9"/>
<rect x="37.3" y="11.0" width=".9" height="0.8" fill="#fff" fill-opacity=".9"/>
<rect x="61.7" y="17.0" width=".9" height="0.8" fill="#fff" fill-opacity=".9"/>
<rect x="58.5" y="23.8" width=".9" height="0.8" fill="#fff" fill-opacity=".9"/>
<rect x="48.1" y="9.2" width=".9" height="4.0" fill="#fff" fill-opacity=".9"/>
<rect x="61.7" y="14.5" width=".9" height="0.8" fill="#fff" fill-opacity=".9"/>
<rect x="43.8" y="23.7" width=".9" height="1.0" fill="#fff" fill-opacity=".9"/>
<rect x="20.8" y="3.4" width=".9" height="2.0" fill="#fff" fill-opacity=".9"/>
<rect x="7.8" y="19.6" width=".9" height="2.0" fill="#fff" fill-opacity=".9"/>
<rect x="61.2" y="2.4" width=".9" height="2.0" fill="#fff" fill-opacity=".9"/>
<rect x="52.7" y="21.2" width=".9" height="0.8" fill="#fff" fill-opacity=".9"/>
<rect x="18.9" y="0.3" width="4.1" height="38" fill="#d84848" fill-opacity=".32" stroke="#a83434" stroke-width=".6"/>
</svg></div>
<svg class="a" style="left:218px;top:156.6px;will-change:transform" width="420" height="6.4" viewBox="0 0 420 6.4">
<defs><linearGradient id="cg" x1="0" x2="0" y1="0" y2="1"><stop offset="0" stop-color="#fff" stop-opacity=".35"/><stop offset=".5" stop-color="#fff" stop-opacity="0"/><stop offset="1" stop-color="#000" stop-opacity=".12"/></linearGradient></defs>
<rect x="0.40" y=".6" width="8.4" height="5.2" fill="#86dc86"/><rect x="0.40" y=".6" width="8.4" height="5.2" fill="url(#cg)"/>
<rect x="9.62" y=".6" width="8.4" height="5.2" fill="#e9b482"/><rect x="9.62" y=".6" width="8.4" height="5.2" fill="url(#cg)"/>
<rect x="18.85" y=".6" width="8.4" height="5.2" fill="#e9b482"/><rect x="18.85" y=".6" width="8.4" height="5.2" fill="url(#cg)"/>
<rect x="28.07" y=".6" width="8.4" height="5.2" fill="#86dc86"/><rect x="28.07" y=".6" width="8.4" height="5.2" fill="url(#cg)"/>
<rect x="37.30" y=".6" width="8.4" height="5.2" fill="#e9b482"/><rect x="37.30" y=".6" width="8.4" height="5.2" fill="url(#cg)"/>
<rect x="46.52" y=".6" width="8.4" height="5.2" fill="#e9b482"/><rect x="46.52" y=".6" width="8.4" height="5.2" fill="url(#cg)"/>
<rect x="55.75" y=".6" width="8.4" height="5.2" fill="#86dc86"/><rect x="55.75" y=".6" width="8.4" height="5.2" fill="url(#cg)"/>
<rect x="64.98" y=".6" width="8.4" height="5.2" fill="#e9b482"/><rect x="64.98" y=".6" width="8.4" height="5.2" fill="url(#cg)"/>
<rect x="74.20" y=".6" width="8.4" height="5.2" fill="#e9b482"/><rect x="74.20" y=".6" width="8.4" height="5.2" fill="url(#cg)"/>
<rect x="83.43" y=".6" width="8.4" height="5.2" fill="#86dc86"/><rect x="83.43" y=".6" width="8.4" height="5.2" fill="url(#cg)"/>
<rect x="92.65" y=".6" width="8.4" height="5.2" fill="#8a8ae2"/><rect x="92.65" y=".6" width="8.4" height="5.2" fill="url(#cg)"/>
<rect x="101.88" y=".6" width="8.4" height="5.2" fill="#e9b482"/><rect x="101.88" y=".6" width="8.4" height="5.2" fill="url(#cg)"/>
<rect x="111.10" y=".6" width="8.4" height="5.2" fill="#86dc86"/><rect x="111.10" y=".6" width="8.4" height="5.2" fill="url(#cg)"/>
<rect x="120.32" y=".6" width="8.4" height="5.2" fill="#e9b482"/><rect x="120.32" y=".6" width="8.4" height="5.2" fill="url(#cg)"/>
<rect x="129.55" y=".6" width="8.4" height="5.2" fill="#e9b482"/><rect x="129.55" y=".6" width="8.4" height="5.2" fill="url(#cg)"/>
<rect x="138.77" y=".6" width="8.4" height="5.2" fill="#86dc86"/><rect x="138.77" y=".6" width="8.4" height="5.2" fill="url(#cg)"/>
<rect x="148.00" y=".6" width="8.4" height="5.2" fill="#8a8ae2"/><rect x="148.00" y=".6" width="8.4" height="5.2" fill="url(#cg)"/>
<rect x="157.23" y=".6" width="8.4" height="5.2" fill="#8a8ae2"/><rect x="157.23" y=".6" width="8.4" height="5.2" fill="url(#cg)"/>
<rect x="166.45" y=".6" width="8.4" height="5.2" fill="#86dc86"/><rect x="166.45" y=".6" width="8.4" height="5.2" fill="url(#cg)"/>
<rect x="175.68" y=".6" width="8.4" height="5.2" fill="#e9b482"/><rect x="175.68" y=".6" width="8.4" height="5.2" fill="url(#cg)"/>
<rect x="184.90" y=".6" width="8.4" height="5.2" fill="#e9b482"/><rect x="184.90" y=".6" width="8.4" height="5.2" fill="url(#cg)"/>
<rect x="194.12" y=".6" width="8.4" height="5.2" fill="#86dc86"/><rect x="194.12" y=".6" width="8.4" height="5.2" fill="url(#cg)"/>
<rect x="203.35" y=".6" width="8.4" height="5.2" fill="#e9b482"/><rect x="203.35" y=".6" width="8.4" height="5.2" fill="url(#cg)"/>
<rect x="212.57" y=".6" width="8.4" height="5.2" fill="#86dc86"/><rect x="212.57" y=".6" width="8.4" height="5.2" fill="url(#cg)"/>
<rect x="221.80" y=".6" width="8.4" height="5.2" fill="#86dc86"/><rect x="221.80" y=".6" width="8.4" height="5.2" fill="url(#cg)"/>
<rect x="231.02" y=".6" width="8.4" height="5.2" fill="#e9b482"/><rect x="231.02" y=".6" width="8.4" height="5.2" fill="url(#cg)"/>
<rect x="240.25" y=".6" width="8.4" height="5.2" fill="#e68a8c"/><rect x="240.25" y=".6" width="8.4" height="5.2" fill="url(#cg)"/>
<rect x="249.48" y=".6" width="8.4" height="5.2" fill="#e68a8c"/><rect x="249.48" y=".6" width="8.4" height="5.2" fill="url(#cg)"/>
<rect x="258.70" y=".6" width="8.4" height="5.2" fill="#8a8ae2"/><rect x="258.70" y=".6" width="8.4" height="5.2" fill="url(#cg)"/>
<rect x="267.92" y=".6" width="8.4" height="5.2" fill="#e68a8c"/><rect x="267.92" y=".6" width="8.4" height="5.2" fill="url(#cg)"/>
<rect x="277.15" y=".6" width="8.4" height="5.2" fill="#e9b482"/><rect x="277.15" y=".6" width="8.4" height="5.2" fill="url(#cg)"/>
<rect x="286.38" y=".6" width="8.4" height="5.2" fill="#e68a8c"/><rect x="286.38" y=".6" width="8.4" height="5.2" fill="url(#cg)"/>
<rect x="295.60" y=".6" width="8.4" height="5.2" fill="#e68a8c"/><rect x="295.60" y=".6" width="8.4" height="5.2" fill="url(#cg)"/>
<rect x="304.83" y=".6" width="8.4" height="5.2" fill="#e68a8c"/><rect x="304.83" y=".6" width="8.4" height="5.2" fill="url(#cg)"/>
<rect x="314.05" y=".6" width="8.4" height="5.2" fill="#e9b482"/><rect x="314.05" y=".6" width="8.4" height="5.2" fill="url(#cg)"/>
<rect x="323.27" y=".6" width="8.4" height="5.2" fill="#8a8ae2"/><rect x="323.27" y=".6" width="8.4" height="5.2" fill="url(#cg)"/>
<rect x="332.50" y=".6" width="8.4" height="5.2" fill="#e68a8c"/><rect x="332.50" y=".6" width="8.4" height="5.2" fill="url(#cg)"/>
<rect x="341.73" y=".6" width="8.4" height="5.2" fill="#86dc86"/><rect x="341.73" y=".6" width="8.4" height="5.2" fill="url(#cg)"/>
<rect x="350.95" y=".6" width="8.4" height="5.2" fill="#e9b482"/><rect x="350.95" y=".6" width="8.4" height="5.2" fill="url(#cg)"/>
<rect x="360.17" y=".6" width="8.4" height="5.2" fill="#e68a8c"/><rect x="360.17" y=".6" width="8.4" height="5.2" fill="url(#cg)"/>
<rect x="369.40" y=".6" width="8.4" height="5.2" fill="#e9b482"/><rect x="369.40" y=".6" width="8.4" height="5.2" fill="url(#cg)"/>
<rect x="378.62" y=".6" width="8.4" height="5.2" fill="#e9b482"/><rect x="378.62" y=".6" width="8.4" height="5.2" fill="url(#cg)"/>
<rect x="387.85" y=".6" width="8.4" height="5.2" fill="#8a8ae2"/><rect x="387.85" y=".6" width="8.4" height="5.2" fill="url(#cg)"/>
<rect x="397.08" y=".6" width="8.4" height="5.2" fill="#86dc86"/><rect x="397.08" y=".6" width="8.4" height="5.2" fill="url(#cg)"/>
<rect x="406.30" y=".6" width="8.4" height="5.2" fill="#e9b482"/><rect x="406.30" y=".6" width="8.4" height="5.2" fill="url(#cg)"/>
<rect x="415.52" y=".6" width="8.4" height="5.2" fill="#86dc86"/><rect x="415.52" y=".6" width="8.4" height="5.2" fill="url(#cg)"/>
<g font-family="Liberation Sans, sans-serif" font-size="3.1" text-anchor="middle" fill="#222" fill-opacity=".7" font-weight="bold">
<text x="4.6" y="4.5">A</text>
<text x="13.8" y="4.5">C</text>
<text x="23.1" y="4.5">C</text>
<text x="32.3" y="4.5">A</text>
<text x="41.5" y="4.5">C</text>
<text x="50.7" y="4.5">C</text>
<text x="60.0" y="4.5">A</text>
<text x="69.2" y="4.5">C</text>
<text x="78.4" y="4.5">C</text>
<text x="87.6" y="4.5">A</text>
<text x="96.9" y="4.5">T</text>
<text x="106.1" y="4.5">C</text>
<text x="115.3" y="4.5">A</text>
<text x="124.5" y="4.5">C</text>
<text x="133.8" y="4.5">C</text>
<text x="143.0" y="4.5">A</text>
<text x="152.2" y="4.5">T</text>
<text x="161.4" y="4.5">T</text>
<text x="170.7" y="4.5">A</text>
<text x="179.9" y="4.5">C</text>
<text x="189.1" y="4.5">C</text>
<text x="198.3" y="4.5">A</text>
<text x="207.6" y="4.5">C</text>
<text x="216.8" y="4.5">A</text>
<text x="226.0" y="4.5">A</text>
<text x="235.2" y="4.5">C</text>
<text x="244.5" y="4.5">G</text>
<text x="253.7" y="4.5">G</text>
<text x="262.9" y="4.5">T</text>
<text x="272.1" y="4.5">G</text>
<text x="281.4" y="4.5">C</text>
<text x="290.6" y="4.5">G</text>
<text x="299.8" y="4.5">G</text>
<text x="309.0" y="4.5">G</text>
<text x="318.3" y="4.5">C</text>
<text x="327.5" y="4.5">T</text>
<text x="336.7" y="4.5">G</text>
<text x="345.9" y="4.5">A</text>
<text x="355.2" y="4.5">C</text>
<text x="364.4" y="4.5">G</text>
<text x="373.6" y="4.5">C</text>
<text x="382.8" y="4.5">C</text>
<text x="392.1" y="4.5">T</text>
<text x="401.3" y="4.5">A</text>
<text x="410.5" y="4.5">C</text>
<text x="419.7" y="4.5">A</text>
</g></svg>
<div class="a" style="left:218px;top:172px;width:420px;height:0;border-top:1px dashed #d0d0d0"></div>
<svg class="a" style="left:418px;top:167px" width="24" height="11" viewBox="0 0 24 11"><path d="M3.5 2.6 H21 M3.5 8.2 H21 M13 2.6 V8.2" stroke="#c0392b" stroke-width=".9" fill="none"/></svg>
<svg class="a" style="left:218px;top:177.9px" width="420" height="16" viewBox="0 0 420 16"><defs><linearGradient id="cvl" x1="0" x2="1" y1="0" y2="0"><stop offset="0" stop-color="#fff" stop-opacity="0"/><stop offset=".38" stop-color="#fff" stop-opacity=".1"/><stop offset=".5" stop-color="#fff" stop-opacity=".11"/><stop offset="1" stop-color="#fff" stop-opacity="0"/></linearGradient><linearGradient id="cv" x1="0" x2="0" y1="0" y2="1"><stop offset="0" stop-color="#4372a4"/><stop offset=".12" stop-color="#4d79a7"/><stop offset=".5" stop-color="#507ca9"/><stop offset="1" stop-color="#4a77a6"/></linearGradient></defs><rect x="0" y="0" width="420" height=".9" fill="#f8f8f8"/><rect x="0" y=".8" width="420" height="14" fill="#e3ebf4"/><path d="M0 .8 H420 V14.8 H313 V13.8 H268 V12.8 H229.8 V11.4 H203.8 V12.8 H176 V13.8 H165.6 V14.8 H0 Z" fill="url(#cv)"/><rect x="150" y=".8" width="175" height="13.7" fill="url(#cvl)"/><path d="M0 14.6 H420" stroke="#eef2f8" stroke-width=".7" stroke-dasharray="1.4 2.7"/></svg>
<div class="a" style="left:218px;top:197.6px;width:420px;height:11.3px;background:#f4f4f4"></div>
<svg class="a" style="left:216px;top:195px" width="424" height="14" viewBox="0 0 424 14"><path d="M2.4 3.2 H422" stroke="#b4b4b4" stroke-width=".8"/><path d="M2.5 1.6 V13.6" stroke="#b8b8b8" stroke-width=".8"/>
<path d="M34.7 2.6 V6.2" stroke="#9a9a9a" stroke-width=".8"/>
<path d="M80.8 2.6 V6.2" stroke="#9a9a9a" stroke-width=".8"/>
<path d="M126.9 2.6 V6.2" stroke="#9a9a9a" stroke-width=".8"/>
<path d="M173.1 2.6 V6.2" stroke="#9a9a9a" stroke-width=".8"/>
<path d="M265.3 2.6 V6.2" stroke="#9a9a9a" stroke-width=".8"/>
<path d="M311.4 2.6 V6.2" stroke="#9a9a9a" stroke-width=".8"/>
<path d="M357.6 2.6 V6.2" stroke="#9a9a9a" stroke-width=".8"/>
<path d="M403.7 2.6 V6.2" stroke="#9a9a9a" stroke-width=".8"/>
<path d="M218.7 1.5 V6.5" stroke="#e65050" stroke-width=".8"/>
<path d="M421.3 2.6 V6.2" stroke="#9a9a9a" stroke-width=".8"/>
</svg>
<div class="a" style="left:216.2px;top:208.9px;width:421.4px;height:200.8px;border-left:1px solid #9a9a9a;border-top:1px solid #9a9a9a;box-sizing:border-box"></div>
<div class="a" style="left:217px;top:210px;width:420.4px;height:199.6px;background:#292929;border-left:1px solid #f2f2f2;border-top:1px solid #e8e8e8;box-sizing:border-box;overflow:hidden;will-change:transform">
<svg class="a" style="left:0;top:0" width="420" height="199" viewBox="0 0 420 199">
<defs>
<linearGradient id="sh" x1="0" x2="1" y1="0" y2="0"><stop offset="0" stop-color="#000" stop-opacity="0"/><stop offset=".35" stop-color="#000" stop-opacity="0"/><stop offset="1" stop-color="#000" stop-opacity=".26"/></linearGradient>
<linearGradient id="hl" x1="0" x2="1" y1="0" y2="0"><stop offset="0" stop-color="#fff" stop-opacity=".12"/><stop offset=".35" stop-color="#fff" stop-opacity="0"/><stop offset="1" stop-color="#fff" stop-opacity="0"/></linearGradient>
</defs>
<rect x="0.10" y="-0.40" width="9.22" height="27.54" fill="#152b15"/>
<rect x="0.10" y="31.69" width="9.22" height="4.62" fill="#152b15"/>
<rect x="0.10" y="36.28" width="9.22" height="27.54" fill="#7ac579"/>
<rect x="0.10" y="63.79" width="9.22" height="22.96" fill="#152b15"/>
<rect x="0.10" y="95.88" width="9.22" height="4.62" fill="#7ac579"/>
<rect x="0.10" y="100.47" width="9.22" height="82.56" fill="#152b15"/>
<rect x="9.27" y="-0.40" width="9.22" height="22.96" fill="#2b1d13"/>
<rect x="9.27" y="27.11" width="9.22" height="9.20" fill="#2b1d13"/>
<rect x="9.27" y="36.28" width="9.22" height="27.54" fill="#d4a274"/>
<rect x="9.27" y="63.79" width="9.22" height="22.96" fill="#2b1d13"/>
<rect x="9.27" y="95.88" width="9.22" height="4.62" fill="#d4a274"/>
<rect x="9.27" y="100.47" width="9.22" height="82.56" fill="#2b1d13"/>
<rect x="18.44" y="-0.40" width="9.22" height="18.37" fill="#2b1d13"/>
<rect x="18.44" y="22.53" width="9.22" height="13.78" fill="#2b1d13"/>
<rect x="18.44" y="36.28" width="9.22" height="27.54" fill="#d4a274"/>
<rect x="18.44" y="63.79" width="9.22" height="22.96" fill="#2b1d13"/>
<rect x="18.44" y="95.88" width="9.22" height="4.62" fill="#d4a274"/>
<rect x="18.44" y="100.47" width="9.22" height="82.56" fill="#2b1d13"/>
<rect x="27.61" y="-0.40" width="9.22" height="13.78" fill="#152b15"/>
<rect x="27.61" y="17.94" width="9.22" height="18.37" fill="#152b15"/>
<rect x="27.61" y="36.28" width="9.22" height="27.54" fill="#7ac579"/>
<rect x="27.61" y="63.79" width="9.22" height="22.96" fill="#152b15"/>
<rect x="27.61" y="95.88" width="9.22" height="4.62" fill="#7ac579"/>
<rect x="27.61" y="100.47" width="9.22" height="82.56" fill="#152b15"/>
<rect x="36.78" y="-0.40" width="9.22" height="9.20" fill="#2b1d13"/>
<rect x="36.78" y="13.35" width="9.22" height="22.96" fill="#2b1d13"/>
<rect x="36.78" y="36.28" width="9.22" height="27.54" fill="#d4a274"/>
<rect x="36.78" y="63.79" width="9.22" height="22.96" fill="#2b1d13"/>
<rect x="36.78" y="95.88" width="9.22" height="4.62" fill="#d4a274"/>
<rect x="36.78" y="100.47" width="9.22" height="82.56" fill="#2b1d13"/>
<rect x="45.95" y="-0.40" width="9.22" height="4.62" fill="#2b1d13"/>
<rect x="45.95" y="8.77" width="9.22" height="27.54" fill="#2b1d13"/>
<rect x="45.95" y="36.28" width="9.22" height="27.54" fill="#d4a274"/>
<rect x="45.95" y="63.79" width="9.22" height="22.96" fill="#2b1d13"/>
<rect x="45.95" y="95.88" width="9.22" height="4.62" fill="#d4a274"/>
<rect x="45.95" y="100.47" width="9.22" height="82.56" fill="#2b1d13"/>
<rect x="55.12" y="4.19" width="9.22" height="32.12" fill="#152b15"/>
<rect x="55.12" y="36.28" width="9.22" height="27.54" fill="#7ac579"/>
<rect x="55.12" y="63.79" width="9.22" height="22.96" fill="#152b15"/>
<rect x="55.12" y="95.88" width="9.22" height="4.62" fill="#7ac579"/>
<rect x="55.12" y="100.47" width="9.22" height="82.56" fill="#152b15"/>
<rect x="64.29" y="-0.40" width="9.22" height="36.71" fill="#2b1d13"/>
<rect x="64.29" y="36.28" width="9.22" height="27.54" fill="#d4a274"/>
<rect x="64.29" y="63.79" width="9.22" height="22.96" fill="#2b1d13"/>
<rect x="64.29" y="95.88" width="9.22" height="4.62" fill="#d4a274"/>
<rect x="64.29" y="100.47" width="9.22" height="77.97" fill="#2b1d13"/>
<rect x="73.46" y="-0.40" width="9.22" height="36.71" fill="#2b1d13"/>
<rect x="73.46" y="36.28" width="9.22" height="27.54" fill="#d4a274"/>
<rect x="73.46" y="63.79" width="9.22" height="27.54" fill="#2b1d13"/>
<rect x="73.46" y="95.88" width="9.22" height="4.62" fill="#d4a274"/>
<rect x="73.46" y="100.47" width="9.22" height="73.39" fill="#2b1d13"/>
<rect x="82.63" y="-0.40" width="9.22" height="36.71" fill="#152b15"/>
<rect x="82.63" y="36.28" width="9.22" height="27.54" fill="#7ac579"/>
<rect x="82.63" y="63.79" width="9.22" height="32.12" fill="#152b15"/>
<rect x="82.63" y="95.88" width="9.22" height="4.62" fill="#7ac579"/>
<rect x="82.63" y="100.47" width="9.22" height="68.81" fill="#152b15"/>
<rect x="91.80" y="-0.40" width="9.22" height="36.71" fill="#16172e"/>
<rect x="91.80" y="36.28" width="9.22" height="27.54" fill="#7979d3"/>
<rect x="91.80" y="63.79" width="9.22" height="32.12" fill="#16172e"/>
<rect x="91.80" y="95.88" width="9.22" height="4.62" fill="#7979d3"/>
<rect x="91.80" y="100.47" width="9.22" height="64.22" fill="#16172e"/>
<rect x="91.80" y="169.25" width="9.22" height="4.62" fill="#16172e"/>
<rect x="100.97" y="-0.40" width="9.22" height="36.71" fill="#2b1d13"/>
<rect x="100.97" y="36.28" width="9.22" height="27.54" fill="#d4a274"/>
<rect x="100.97" y="63.79" width="9.22" height="32.12" fill="#2b1d13"/>
<rect x="100.97" y="95.88" width="9.22" height="4.62" fill="#d4a274"/>
<rect x="100.97" y="100.47" width="9.22" height="59.63" fill="#2b1d13"/>
<rect x="100.97" y="164.66" width="9.22" height="9.20" fill="#2b1d13"/>
<rect x="110.14" y="-0.40" width="9.22" height="36.71" fill="#152b15"/>
<rect x="110.14" y="36.28" width="9.22" height="27.54" fill="#7ac579"/>
<rect x="110.14" y="63.79" width="9.22" height="32.12" fill="#152b15"/>
<rect x="110.14" y="95.88" width="9.22" height="4.62" fill="#7ac579"/>
<rect x="110.14" y="100.47" width="9.22" height="55.05" fill="#152b15"/>
<rect x="110.14" y="160.07" width="9.22" height="13.78" fill="#152b15"/>
<rect x="119.31" y="-0.40" width="9.22" height="36.71" fill="#2b1d13"/>
<rect x="119.31" y="36.28" width="9.22" height="27.54" fill="#d4a274"/>
<rect x="119.31" y="63.79" width="9.22" height="32.12" fill="#2b1d13"/>
<rect x="119.31" y="95.88" width="9.22" height="4.62" fill="#d4a274"/>
<rect x="119.31" y="100.47" width="9.22" height="50.47" fill="#2b1d13"/>
<rect x="119.31" y="155.49" width="9.22" height="18.37" fill="#2b1d13"/>
<rect x="128.48" y="-0.40" width="9.22" height="36.71" fill="#2b1d13"/>
<rect x="128.48" y="36.28" width="9.22" height="27.54" fill="#d4a274"/>
<rect x="128.48" y="63.79" width="9.22" height="32.12" fill="#2b1d13"/>
<rect x="128.48" y="95.88" width="9.22" height="4.62" fill="#d4a274"/>
<rect x="128.48" y="100.47" width="9.22" height="45.88" fill="#2b1d13"/>
<rect x="128.48" y="150.90" width="9.22" height="22.96" fill="#2b1d13"/>
<rect x="137.65" y="-0.40" width="9.22" height="36.71" fill="#152b15"/>
<rect x="137.65" y="36.28" width="9.22" height="27.54" fill="#7ac579"/>
<rect x="137.65" y="63.79" width="9.22" height="32.12" fill="#152b15"/>
<rect x="137.65" y="95.88" width="9.22" height="4.62" fill="#7ac579"/>
<rect x="137.65" y="100.47" width="9.22" height="41.30" fill="#152b15"/>
<rect x="137.65" y="146.32" width="9.22" height="27.54" fill="#152b15"/>
<rect x="146.82" y="-0.40" width="9.22" height="36.71" fill="#16172e"/>
<rect x="146.82" y="36.28" width="9.22" height="27.54" fill="#7979d3"/>
<rect x="146.82" y="63.79" width="9.22" height="32.12" fill="#16172e"/>
<rect x="146.82" y="95.88" width="9.22" height="4.62" fill="#7979d3"/>
<rect x="146.82" y="100.47" width="9.22" height="36.71" fill="#16172e"/>
<rect x="146.82" y="141.74" width="9.22" height="32.12" fill="#16172e"/>
<rect x="155.99" y="-0.40" width="9.22" height="36.71" fill="#16172e"/>
<rect x="155.99" y="36.28" width="9.22" height="27.54" fill="#7979d3"/>
<rect x="155.99" y="63.79" width="9.22" height="32.12" fill="#16172e"/>
<rect x="155.99" y="95.88" width="9.22" height="4.62" fill="#7979d3"/>
<rect x="155.99" y="100.47" width="9.22" height="32.12" fill="#16172e"/>
<rect x="155.99" y="141.74" width="9.22" height="32.12" fill="#16172e"/>
<rect x="165.16" y="-0.40" width="9.22" height="36.71" fill="#152b15"/>
<rect x="165.16" y="36.28" width="9.22" height="27.54" fill="#7ac579"/>
<rect x="165.16" y="63.79" width="9.22" height="32.12" fill="#152b15"/>
<rect x="165.16" y="95.88" width="9.22" height="4.62" fill="#7ac579"/>
<rect x="165.16" y="100.47" width="9.22" height="27.54" fill="#152b15"/>
<rect x="165.16" y="141.74" width="9.22" height="32.12" fill="#152b15"/>
<rect x="174.33" y="-0.40" width="9.22" height="36.71" fill="#2b1d13"/>
<rect x="174.33" y="36.28" width="9.22" height="27.54" fill="#d4a274"/>
<rect x="174.33" y="63.79" width="9.22" height="32.12" fill="#2b1d13"/>
<rect x="174.33" y="95.88" width="9.22" height="4.62" fill="#d4a274"/>
<rect x="174.33" y="100.47" width="9.22" height="22.96" fill="#2b1d13"/>
<rect x="174.33" y="141.74" width="9.22" height="32.12" fill="#2b1d13"/>
<rect x="183.50" y="-0.40" width="9.22" height="36.71" fill="#2b1d13"/>
<rect x="183.50" y="36.28" width="9.22" height="27.54" fill="#d4a274"/>
<rect x="183.50" y="63.79" width="9.22" height="32.12" fill="#2b1d13"/>
<rect x="183.50" y="95.88" width="9.22" height="4.62" fill="#d4a274"/>
<rect x="183.50" y="100.47" width="9.22" height="18.37" fill="#2b1d13"/>
<rect x="183.50" y="141.74" width="9.22" height="32.12" fill="#2b1d13"/>
<rect x="192.67" y="-0.40" width="9.22" height="36.71" fill="#152b15"/>
<rect x="192.67" y="36.28" width="9.22" height="27.54" fill="#7ac579"/>
<rect x="192.67" y="63.79" width="9.22" height="32.12" fill="#152b15"/>
<rect x="192.67" y="95.88" width="9.22" height="4.62" fill="#7ac579"/>
<rect x="192.67" y="100.47" width="9.22" height="13.78" fill="#152b15"/>
<rect x="192.67" y="141.74" width="9.22" height="32.12" fill="#152b15"/>
<rect x="201.84" y="-0.40" width="10.21" height="36.71" fill="#2b1d13"/>
<rect x="201.84" y="36.28" width="10.21" height="27.54" fill="#d4a274"/>
<rect x="201.84" y="63.79" width="10.21" height="32.12" fill="#2b1d13"/>
<rect x="201.84" y="95.88" width="10.21" height="4.62" fill="#d4a274"/>
<rect x="201.84" y="100.47" width="10.21" height="9.20" fill="#2b1d13"/>
<rect x="201.84" y="141.74" width="10.21" height="32.12" fill="#2b1d13"/>
<rect x="212.00" y="-0.40" width="9.25" height="36.71" fill="#152b15"/>
<rect x="212.00" y="36.28" width="9.25" height="22.96" fill="#ececec"/>
<rect x="212.00" y="59.20" width="9.25" height="4.62" fill="#f6babc"/>
<rect x="212.00" y="86.71" width="9.25" height="9.20" fill="#152b15"/>
<rect x="212.00" y="95.88" width="9.25" height="4.62" fill="#7ac579"/>
<rect x="212.00" y="109.64" width="9.25" height="27.54" fill="#7ac579"/>
<rect x="212.00" y="137.15" width="9.25" height="36.71" fill="#152b15"/>
<rect x="221.20" y="-0.40" width="9.25" height="36.71" fill="#152b15"/>
<rect x="221.20" y="36.28" width="9.25" height="22.96" fill="#f8c4c4"/>
<rect x="221.20" y="63.79" width="9.25" height="4.62" fill="#152b15"/>
<rect x="221.20" y="86.71" width="9.25" height="9.20" fill="#152b15"/>
<rect x="221.20" y="95.88" width="9.25" height="4.62" fill="#7ac579"/>
<rect x="221.20" y="109.64" width="9.25" height="27.54" fill="#7ac579"/>
<rect x="221.20" y="137.15" width="9.25" height="36.71" fill="#152b15"/>
<rect x="230.40" y="-0.40" width="9.25" height="36.71" fill="#2b1d13"/>
<rect x="230.40" y="36.28" width="9.25" height="22.96" fill="#d4a274"/>
<rect x="230.40" y="59.20" width="9.25" height="9.20" fill="#2b1d13"/>
<rect x="230.40" y="86.71" width="9.25" height="9.20" fill="#2b1d13"/>
<rect x="230.40" y="95.88" width="9.25" height="4.62" fill="#d4a274"/>
<rect x="230.40" y="109.64" width="9.25" height="27.54" fill="#d4a274"/>
<rect x="230.40" y="137.15" width="9.25" height="36.71" fill="#2b1d13"/>
<rect x="239.60" y="-0.40" width="9.25" height="36.71" fill="#291516"/>
<rect x="239.60" y="36.28" width="9.25" height="18.37" fill="#d07579"/>
<rect x="239.60" y="59.20" width="9.25" height="13.78" fill="#291516"/>
<rect x="239.60" y="86.71" width="9.25" height="9.20" fill="#291516"/>
<rect x="239.60" y="95.88" width="9.25" height="4.62" fill="#d07579"/>
<rect x="239.60" y="109.64" width="9.25" height="27.54" fill="#d07579"/>
<rect x="239.60" y="137.15" width="9.25" height="36.71" fill="#291516"/>
<rect x="248.80" y="-0.40" width="9.25" height="36.71" fill="#291516"/>
<rect x="248.80" y="36.28" width="9.25" height="13.78" fill="#d07579"/>
<rect x="248.80" y="54.62" width="9.25" height="18.37" fill="#291516"/>
<rect x="248.80" y="86.71" width="9.25" height="9.20" fill="#291516"/>
<rect x="248.80" y="95.88" width="9.25" height="4.62" fill="#d07579"/>
<rect x="248.80" y="109.64" width="9.25" height="27.54" fill="#d07579"/>
<rect x="248.80" y="137.15" width="9.25" height="36.71" fill="#291516"/>
<rect x="258.00" y="-0.40" width="9.25" height="36.71" fill="#16172e"/>
<rect x="258.00" y="36.28" width="9.25" height="9.20" fill="#f0f0f0"/>
<rect x="258.00" y="50.03" width="9.25" height="22.96" fill="#16172e"/>
<rect x="258.00" y="86.71" width="9.25" height="9.20" fill="#16172e"/>
<rect x="258.00" y="95.88" width="9.25" height="4.62" fill="#7979d3"/>
<rect x="258.00" y="109.64" width="9.25" height="27.54" fill="#7979d3"/>
<rect x="258.00" y="137.15" width="9.25" height="36.71" fill="#16172e"/>
<rect x="267.20" y="-0.40" width="9.25" height="36.71" fill="#291516"/>
<rect x="267.20" y="36.28" width="9.25" height="9.20" fill="#d07579"/>
<rect x="267.20" y="45.45" width="9.25" height="27.54" fill="#291516"/>
<rect x="267.20" y="86.71" width="9.25" height="9.20" fill="#291516"/>
<rect x="267.20" y="95.88" width="9.25" height="4.62" fill="#d07579"/>
<rect x="267.20" y="109.64" width="9.25" height="27.54" fill="#d07579"/>
<rect x="267.20" y="137.15" width="9.25" height="36.71" fill="#291516"/>
<rect x="276.40" y="-0.40" width="9.25" height="36.71" fill="#2b1d13"/>
<rect x="276.40" y="36.28" width="9.25" height="4.62" fill="#d4a274"/>
<rect x="276.40" y="45.45" width="9.25" height="32.12" fill="#2b1d13"/>
<rect x="276.40" y="86.71" width="9.25" height="9.20" fill="#2b1d13"/>
<rect x="276.40" y="95.88" width="9.25" height="4.62" fill="#d4a274"/>
<rect x="276.40" y="109.64" width="9.25" height="27.54" fill="#d4a274"/>
<rect x="276.40" y="137.15" width="9.25" height="36.71" fill="#2b1d13"/>
<rect x="285.60" y="-0.40" width="9.25" height="36.71" fill="#291516"/>
<rect x="285.60" y="40.87" width="9.25" height="36.71" fill="#291516"/>
<rect x="285.60" y="86.71" width="9.25" height="9.20" fill="#291516"/>
<rect x="285.60" y="95.88" width="9.25" height="4.62" fill="#d07579"/>
<rect x="285.60" y="109.64" width="9.25" height="27.54" fill="#d07579"/>
<rect x="285.60" y="137.15" width="9.25" height="36.71" fill="#291516"/>
<rect x="294.80" y="-0.40" width="9.25" height="77.97" fill="#291516"/>
<rect x="294.80" y="86.71" width="9.25" height="9.20" fill="#291516"/>
<rect x="294.80" y="95.88" width="9.25" height="4.62" fill="#d07579"/>
<rect x="294.80" y="109.64" width="9.25" height="27.54" fill="#d07579"/>
<rect x="294.80" y="137.15" width="9.25" height="36.71" fill="#291516"/>
<rect x="304.00" y="-0.40" width="9.25" height="82.56" fill="#291516"/>
<rect x="304.00" y="86.71" width="9.25" height="9.20" fill="#291516"/>
<rect x="304.00" y="95.88" width="9.25" height="4.62" fill="#d07579"/>
<rect x="304.00" y="109.64" width="9.25" height="27.54" fill="#d07579"/>
<rect x="304.00" y="137.15" width="9.25" height="36.71" fill="#291516"/>
<rect x="313.20" y="-0.40" width="9.25" height="96.31" fill="#2b1d13"/>
<rect x="313.20" y="95.88" width="9.25" height="4.62" fill="#d4a274"/>
<rect x="313.20" y="109.64" width="9.25" height="27.54" fill="#d4a274"/>
<rect x="313.20" y="137.15" width="9.25" height="36.71" fill="#2b1d13"/>
<rect x="322.40" y="-0.40" width="9.25" height="96.31" fill="#16172e"/>
<rect x="322.40" y="95.88" width="9.25" height="4.62" fill="#7979d3"/>
<rect x="322.40" y="100.47" width="9.25" height="4.62" fill="#16172e"/>
<rect x="322.40" y="109.64" width="9.25" height="27.54" fill="#7979d3"/>
<rect x="322.40" y="137.15" width="9.25" height="36.71" fill="#16172e"/>
<rect x="331.60" y="-0.40" width="9.25" height="32.12" fill="#291516"/>
<rect x="331.60" y="36.28" width="9.25" height="59.63" fill="#291516"/>
<rect x="331.60" y="95.88" width="9.25" height="4.62" fill="#d07579"/>
<rect x="331.60" y="100.47" width="9.25" height="9.20" fill="#291516"/>
<rect x="331.60" y="109.64" width="9.25" height="27.54" fill="#d07579"/>
<rect x="331.60" y="137.15" width="9.25" height="36.71" fill="#291516"/>
<rect x="340.80" y="-0.40" width="9.25" height="27.54" fill="#152b15"/>
<rect x="340.80" y="31.69" width="9.25" height="64.22" fill="#152b15"/>
<rect x="340.80" y="95.88" width="9.25" height="4.62" fill="#7ac579"/>
<rect x="340.80" y="100.47" width="9.25" height="9.20" fill="#152b15"/>
<rect x="340.80" y="109.64" width="9.25" height="27.54" fill="#7ac579"/>
<rect x="340.80" y="137.15" width="9.25" height="36.71" fill="#152b15"/>
<rect x="350.00" y="-0.40" width="9.25" height="22.96" fill="#2b1d13"/>
<rect x="350.00" y="27.11" width="9.25" height="68.81" fill="#2b1d13"/>
<rect x="350.00" y="95.88" width="9.25" height="4.62" fill="#d4a274"/>
<rect x="350.00" y="100.47" width="9.25" height="9.20" fill="#2b1d13"/>
<rect x="350.00" y="109.64" width="9.25" height="27.54" fill="#d4a274"/>
<rect x="350.00" y="137.15" width="9.25" height="36.71" fill="#2b1d13"/>
<rect x="359.20" y="-0.40" width="9.25" height="18.37" fill="#291516"/>
<rect x="359.20" y="22.53" width="9.25" height="73.39" fill="#291516"/>
<rect x="359.20" y="95.88" width="9.25" height="4.62" fill="#d07579"/>
<rect x="359.20" y="100.47" width="9.25" height="9.20" fill="#291516"/>
<rect x="359.20" y="109.64" width="9.25" height="27.54" fill="#d07579"/>
<rect x="359.20" y="137.15" width="9.25" height="36.71" fill="#291516"/>
<rect x="368.40" y="-0.40" width="9.25" height="13.78" fill="#2b1d13"/>
<rect x="368.40" y="17.94" width="9.25" height="77.97" fill="#2b1d13"/>
<rect x="368.40" y="95.88" width="9.25" height="4.62" fill="#d4a274"/>
<rect x="368.40" y="100.47" width="9.25" height="9.20" fill="#2b1d13"/>
<rect x="368.40" y="109.64" width="9.25" height="27.54" fill="#d4a274"/>
<rect x="368.40" y="137.15" width="9.25" height="36.71" fill="#2b1d13"/>
<rect x="377.60" y="-0.40" width="9.25" height="9.20" fill="#2b1d13"/>
<rect x="377.60" y="13.35" width="9.25" height="82.56" fill="#2b1d13"/>
<rect x="377.60" y="95.88" width="9.25" height="4.62" fill="#d4a274"/>
<rect x="377.60" y="100.47" width="9.25" height="9.20" fill="#2b1d13"/>
<rect x="377.60" y="109.64" width="9.25" height="27.54" fill="#d4a274"/>
<rect x="377.60" y="137.15" width="9.25" height="36.71" fill="#2b1d13"/>
<rect x="386.80" y="-0.40" width="9.25" height="4.62" fill="#16172e"/>
<rect x="386.80" y="8.77" width="9.25" height="87.14" fill="#16172e"/>
<rect x="386.80" y="95.88" width="9.25" height="4.62" fill="#7979d3"/>
<rect x="386.80" y="100.47" width="9.25" height="9.20" fill="#16172e"/>
<rect x="386.80" y="109.64" width="9.25" height="27.54" fill="#7979d3"/>
<rect x="386.80" y="137.15" width="9.25" height="36.71" fill="#16172e"/>
<rect x="396.00" y="4.19" width="9.25" height="91.73" fill="#152b15"/>
<rect x="396.00" y="95.88" width="9.25" height="4.62" fill="#7ac579"/>
<rect x="396.00" y="100.47" width="9.25" height="9.20" fill="#152b15"/>
<rect x="396.00" y="109.64" width="9.25" height="27.54" fill="#7ac579"/>
<rect x="396.00" y="137.15" width="9.25" height="36.71" fill="#152b15"/>
<rect x="405.20" y="-0.40" width="9.25" height="87.14" fill="#2b1d13"/>
<rect x="405.20" y="91.30" width="9.25" height="4.62" fill="#2b1d13"/>
<rect x="405.20" y="95.88" width="9.25" height="4.62" fill="#d4a274"/>
<rect x="405.20" y="100.47" width="9.25" height="9.20" fill="#2b1d13"/>
<rect x="405.20" y="109.64" width="9.25" height="27.54" fill="#d4a274"/>
<rect x="405.20" y="137.15" width="9.25" height="36.71" fill="#2b1d13"/>
<rect x="414.40" y="-0.40" width="9.25" height="91.73" fill="#152b15"/>
<rect x="414.40" y="95.88" width="9.25" height="4.62" fill="#7ac579"/>
<rect x="414.40" y="100.47" width="9.25" height="9.20" fill="#152b15"/>
<rect x="414.40" y="109.64" width="9.25" height="27.54" fill="#7ac579"/>
<rect x="414.40" y="137.15" width="9.25" height="36.71" fill="#152b15"/>
<rect x="0.10" y="0" width="9.17" height="183.40" fill="url(#sh)"/>
<rect x="9.27" y="0" width="9.17" height="183.40" fill="url(#sh)"/>
<rect x="18.44" y="0" width="9.17" height="183.40" fill="url(#sh)"/>
<rect x="27.61" y="0" width="9.17" height="183.40" fill="url(#sh)"/>
<rect x="36.78" y="0" width="9.17" height="183.40" fill="url(#sh)"/>
<rect x="45.95" y="0" width="9.17" height="183.40" fill="url(#sh)"/>
<rect x="55.12" y="0" width="9.17" height="183.40" fill="url(#sh)"/>
<rect x="64.29" y="0" width="9.17" height="183.40" fill="url(#sh)"/>
<rect x="73.46" y="0" width="9.17" height="183.40" fill="url(#sh)"/>
<rect x="82.63" y="0" width="9.17" height="183.40" fill="url(#sh)"/>
<rect x="91.80" y="0" width="9.17" height="183.40" fill="url(#sh)"/>
<rect x="100.97" y="0" width="9.17" height="183.40" fill="url(#sh)"/>
<rect x="110.14" y="0" width="9.17" height="183.40" fill="url(#sh)"/>
<rect x="119.31" y="0" width="9.17" height="183.40" fill="url(#sh)"/>
<rect x="128.48" y="0" width="9.17" height="183.40" fill="url(#sh)"/>
<rect x="137.65" y="0" width="9.17" height="183.40" fill="url(#sh)"/>
<rect x="146.82" y="0" width="9.17" height="183.40" fill="url(#sh)"/>
<rect x="155.99" y="0" width="9.17" height="183.40" fill="url(#sh)"/>
<rect x="165.16" y="0" width="9.17" height="183.40" fill="url(#sh)"/>
<rect x="174.33" y="0" width="9.17" height="183.40" fill="url(#sh)"/>
<rect x="183.50" y="0" width="9.17" height="183.40" fill="url(#sh)"/>
<rect x="192.67" y="0" width="9.17" height="183.40" fill="url(#sh)"/>
<rect x="201.84" y="0" width="10.16" height="183.40" fill="url(#sh)"/>
<rect x="212.00" y="0" width="9.20" height="183.40" fill="url(#sh)"/>
<rect x="221.20" y="0" width="9.20" height="183.40" fill="url(#sh)"/>
<rect x="230.40" y="0" width="9.20" height="183.40" fill="url(#sh)"/>
<rect x="239.60" y="0" width="9.20" height="183.40" fill="url(#sh)"/>
<rect x="248.80" y="0" width="9.20" height="183.40" fill="url(#sh)"/>
<rect x="258.00" y="0" width="9.20" height="183.40" fill="url(#sh)"/>
<rect x="267.20" y="0" width="9.20" height="183.40" fill="url(#sh)"/>
<rect x="276.40" y="0" width="9.20" height="183.40" fill="url(#sh)"/>
<rect x="285.60" y="0" width="9.20" height="183.40" fill="url(#sh)"/>
<rect x="294.80" y="0" width="9.20" height="183.40" fill="url(#sh)"/>
<rect x="304.00" y="0" width="9.20" height="183.40" fill="url(#sh)"/>
<rect x="313.20" y="0" width="9.20" height="183.40" fill="url(#sh)"/>
<rect x="322.40" y="0" width="9.20" height="183.40" fill="url(#sh)"/>
<rect x="331.60" y="0" width="9.20" height="183.40" fill="url(#sh)"/>
<rect x="340.80" y="0" width="9.20" height="183.40" fill="url(#sh)"/>
<rect x="350.00" y="0" width="9.20" height="183.40" fill="url(#sh)"/>
<rect x="359.20" y="0" width="9.20" height="183.40" fill="url(#sh)"/>
<rect x="368.40" y="0" width="9.20" height="183.40" fill="url(#sh)"/>
<rect x="377.60" y="0" width="9.20" height="183.40" fill="url(#sh)"/>
<rect x="386.80" y="0" width="9.20" height="183.40" fill="url(#sh)"/>
<rect x="396.00" y="0" width="9.20" height="183.40" fill="url(#sh)"/>
<rect x="405.20" y="0" width="9.20" height="183.40" fill="url(#sh)"/>
<rect x="414.40" y="0" width="9.20" height="183.40" fill="url(#sh)"/>
<rect x="55.12" y="-0.40" width="9.22" height="4.62" fill="#292929"/>
<rect x="396.00" y="-0.40" width="9.25" height="4.62" fill="#292929"/>
<rect x="45.95" y="4.19" width="9.22" height="4.62" fill="#292929"/>
<rect x="386.80" y="4.19" width="9.25" height="4.62" fill="#292929"/>
<rect x="36.78" y="8.77" width="9.22" height="4.62" fill="#292929"/>
<rect x="377.60" y="8.77" width="9.25" height="4.62" fill="#292929"/>
<rect x="27.61" y="13.35" width="9.22" height="4.62" fill="#292929"/>
<rect x="368.40" y="13.35" width="9.25" height="4.62" fill="#292929"/>
<rect x="18.44" y="17.94" width="9.22" height="4.62" fill="#292929"/>
<rect x="359.20" y="17.94" width="9.25" height="4.62" fill="#292929"/>
<rect x="9.27" y="22.53" width="9.22" height="4.62" fill="#292929"/>
<rect x="350.00" y="22.53" width="9.25" height="4.62" fill="#292929"/>
<rect x="0.10" y="27.11" width="9.22" height="4.62" fill="#292929"/>
<rect x="340.80" y="27.11" width="9.25" height="4.62" fill="#292929"/>
<rect x="331.60" y="31.69" width="9.25" height="4.62" fill="#292929"/>
<rect x="285.60" y="36.28" width="9.25" height="4.62" fill="#292929"/>
<rect x="276.40" y="40.87" width="9.25" height="4.62" fill="#292929"/>
<rect x="258.00" y="45.45" width="9.25" height="4.62" fill="#292929"/>
<rect x="248.80" y="50.03" width="9.25" height="4.62" fill="#292929"/>
<rect x="239.60" y="54.62" width="9.25" height="4.62" fill="#292929"/>
<rect x="221.20" y="59.20" width="9.25" height="4.62" fill="#292929"/>
<rect x="212.00" y="63.79" width="9.25" height="4.62" fill="#292929"/>
<rect x="212.00" y="68.38" width="27.65" height="4.62" fill="#292929"/>
<rect x="212.00" y="72.96" width="64.45" height="4.62" fill="#292929"/>
<rect x="212.00" y="77.54" width="92.05" height="4.62" fill="#292929"/>
<rect x="212.00" y="82.13" width="101.25" height="4.62" fill="#292929"/>
<rect x="0.10" y="86.71" width="73.41" height="4.62" fill="#292929"/>
<rect x="405.20" y="86.71" width="9.25" height="4.62" fill="#292929"/>
<rect x="0.10" y="91.30" width="82.58" height="4.62" fill="#292929"/>
<rect x="414.40" y="91.30" width="9.25" height="4.62" fill="#292929"/>
<rect x="212.00" y="100.47" width="110.45" height="4.62" fill="#292929"/>
<rect x="212.00" y="105.06" width="119.65" height="4.62" fill="#292929"/>
<rect x="201.84" y="109.64" width="10.21" height="4.62" fill="#292929"/>
<rect x="192.67" y="114.23" width="19.38" height="4.62" fill="#292929"/>
<rect x="183.50" y="118.81" width="28.55" height="4.62" fill="#292929"/>
<rect x="174.33" y="123.39" width="37.72" height="4.62" fill="#292929"/>
<rect x="165.16" y="127.98" width="46.89" height="4.62" fill="#292929"/>
<rect x="155.99" y="132.56" width="56.06" height="4.62" fill="#292929"/>
<rect x="146.82" y="137.15" width="65.23" height="4.62" fill="#292929"/>
<rect x="137.65" y="141.74" width="9.22" height="4.62" fill="#292929"/>
<rect x="128.48" y="146.32" width="9.22" height="4.62" fill="#292929"/>
<rect x="119.31" y="150.90" width="9.22" height="4.62" fill="#292929"/>
<rect x="110.14" y="155.49" width="9.22" height="4.62" fill="#292929"/>
<rect x="100.97" y="160.07" width="9.22" height="4.62" fill="#292929"/>
<rect x="91.80" y="164.66" width="9.22" height="4.62" fill="#292929"/>
<rect x="82.63" y="169.25" width="9.22" height="4.62" fill="#292929"/>
<rect x="73.46" y="173.83" width="350.19" height="4.62" fill="#292929"/>
<rect x="64.29" y="178.41" width="359.36" height="4.62" fill="#292929"/>
<rect x="0.10" y="36.28" width="9.17" height="27.51" fill="url(#hl)"/>
<rect x="0.10" y="95.88" width="9.17" height="4.58" fill="url(#hl)"/>
<rect x="9.27" y="36.28" width="9.17" height="27.51" fill="url(#hl)"/>
<rect x="9.27" y="95.88" width="9.17" height="4.58" fill="url(#hl)"/>
<rect x="18.44" y="36.28" width="9.17" height="27.51" fill="url(#hl)"/>
<rect x="18.44" y="95.88" width="9.17" height="4.58" fill="url(#hl)"/>
<rect x="27.61" y="36.28" width="9.17" height="27.51" fill="url(#hl)"/>
<rect x="27.61" y="95.88" width="9.17" height="4.58" fill="url(#hl)"/>
<rect x="36.78" y="36.28" width="9.17" height="27.51" fill="url(#hl)"/>
<rect x="36.78" y="95.88" width="9.17" height="4.58" fill="url(#hl)"/>
<rect x="45.95" y="36.28" width="9.17" height="27.51" fill="url(#hl)"/>
<rect x="45.95" y="95.88" width="9.17" height="4.58" fill="url(#hl)"/>
<rect x="55.12" y="36.28" width="9.17" height="27.51" fill="url(#hl)"/>
<rect x="55.12" y="95.88" width="9.17" height="4.58" fill="url(#hl)"/>
<rect x="64.29" y="36.28" width="9.17" height="27.51" fill="url(#hl)"/>
<rect x="64.29" y="95.88" width="9.17" height="4.58" fill="url(#hl)"/>
<rect x="73.46" y="36.28" width="9.17" height="27.51" fill="url(#hl)"/>
<rect x="73.46" y="95.88" width="9.17" height="4.58" fill="url(#hl)"/>
<rect x="82.63" y="36.28" width="9.17" height="27.51" fill="url(#hl)"/>
<rect x="82.63" y="95.88" width="9.17" height="4.58" fill="url(#hl)"/>
<rect x="91.80" y="36.28" width="9.17" height="27.51" fill="url(#hl)"/>
<rect x="91.80" y="95.88" width="9.17" height="4.58" fill="url(#hl)"/>
<rect x="100.97" y="36.28" width="9.17" height="27.51" fill="url(#hl)"/>
<rect x="100.97" y="95.88" width="9.17" height="4.58" fill="url(#hl)"/>
<rect x="110.14" y="36.28" width="9.17" height="27.51" fill="url(#hl)"/>
<rect x="110.14" y="95.88" width="9.17" height="4.58" fill="url(#hl)"/>
<rect x="119.31" y="36.28" width="9.17" height="27.51" fill="url(#hl)"/>
<rect x="119.31" y="95.88" width="9.17" height="4.58" fill="url(#hl)"/>
<rect x="128.48" y="36.28" width="9.17" height="27.51" fill="url(#hl)"/>
<rect x="128.48" y="95.88" width="9.17" height="4.58" fill="url(#hl)"/>
<rect x="137.65" y="36.28" width="9.17" height="27.51" fill="url(#hl)"/>
<rect x="137.65" y="95.88" width="9.17" height="4.58" fill="url(#hl)"/>
<rect x="146.82" y="36.28" width="9.17" height="27.51" fill="url(#hl)"/>
<rect x="146.82" y="95.88" width="9.17" height="4.58" fill="url(#hl)"/>
<rect x="155.99" y="36.28" width="9.17" height="27.51" fill="url(#hl)"/>
<rect x="155.99" y="95.88" width="9.17" height="4.58" fill="url(#hl)"/>
<rect x="165.16" y="36.28" width="9.17" height="27.51" fill="url(#hl)"/>
<rect x="165.16" y="95.88" width="9.17" height="4.58" fill="url(#hl)"/>
<rect x="174.33" y="36.28" width="9.17" height="27.51" fill="url(#hl)"/>
<rect x="174.33" y="95.88" width="9.17" height="4.58" fill="url(#hl)"/>
<rect x="183.50" y="36.28" width="9.17" height="27.51" fill="url(#hl)"/>
<rect x="183.50" y="95.88" width="9.17" height="4.58" fill="url(#hl)"/>
<rect x="192.67" y="36.28" width="9.17" height="27.51" fill="url(#hl)"/>
<rect x="192.67" y="95.88" width="9.17" height="4.58" fill="url(#hl)"/>
<rect x="201.84" y="36.28" width="10.16" height="27.51" fill="url(#hl)"/>
<rect x="201.84" y="95.88" width="10.16" height="4.58" fill="url(#hl)"/>
<rect x="212.00" y="36.28" width="9.20" height="27.51" fill="url(#hl)"/>
<rect x="212.00" y="95.88" width="9.20" height="4.58" fill="url(#hl)"/>
<rect x="212.00" y="109.64" width="9.20" height="27.51" fill="url(#hl)"/>
<rect x="221.20" y="36.28" width="9.20" height="22.93" fill="url(#hl)"/>
<rect x="221.20" y="95.88" width="9.20" height="4.58" fill="url(#hl)"/>
<rect x="221.20" y="109.64" width="9.20" height="27.51" fill="url(#hl)"/>
<rect x="230.40" y="36.28" width="9.20" height="22.93" fill="url(#hl)"/>
<rect x="230.40" y="95.88" width="9.20" height="4.58" fill="url(#hl)"/>
<rect x="230.40" y="109.64" width="9.20" height="27.51" fill="url(#hl)"/>
<rect x="239.60" y="36.28" width="9.20" height="18.34" fill="url(#hl)"/>
<rect x="239.60" y="95.88" width="9.20" height="4.58" fill="url(#hl)"/>
<rect x="239.60" y="109.64" width="9.20" height="27.51" fill="url(#hl)"/>
<rect x="248.80" y="36.28" width="9.20" height="13.75" fill="url(#hl)"/>
<rect x="248.80" y="95.88" width="9.20" height="4.58" fill="url(#hl)"/>
<rect x="248.80" y="109.64" width="9.20" height="27.51" fill="url(#hl)"/>
<rect x="258.00" y="36.28" width="9.20" height="9.17" fill="url(#hl)"/>
<rect x="258.00" y="95.88" width="9.20" height="4.58" fill="url(#hl)"/>
<rect x="258.00" y="109.64" width="9.20" height="27.51" fill="url(#hl)"/>
<rect x="267.20" y="36.28" width="9.20" height="9.17" fill="url(#hl)"/>
<rect x="267.20" y="95.88" width="9.20" height="4.58" fill="url(#hl)"/>
<rect x="267.20" y="109.64" width="9.20" height="27.51" fill="url(#hl)"/>
<rect x="276.40" y="36.28" width="9.20" height="4.58" fill="url(#hl)"/>
<rect x="276.40" y="95.88" width="9.20" height="4.58" fill="url(#hl)"/>
<rect x="276.40" y="109.64" width="9.20" height="27.51" fill="url(#hl)"/>
<rect x="285.60" y="95.88" width="9.20" height="4.58" fill="url(#hl)"/>
<rect x="285.60" y="109.64" width="9.20" height="27.51" fill="url(#hl)"/>
<rect x="294.80" y="95.88" width="9.20" height="4.58" fill="url(#hl)"/>
<rect x="294.80" y="109.64" width="9.20" height="27.51" fill="url(#hl)"/>
<rect x="304.00" y="95.88" width="9.20" height="4.58" fill="url(#hl)"/>
<rect x="304.00" y="109.64" width="9.20" height="27.51" fill="url(#hl)"/>
<rect x="313.20" y="95.88" width="9.20" height="4.58" fill="url(#hl)"/>
<rect x="313.20" y="109.64" width="9.20" height="27.51" fill="url(#hl)"/>
<rect x="322.40" y="95.88" width="9.20" height="4.58" fill="url(#hl)"/>
<rect x="322.40" y="109.64" width="9.20" height="27.51" fill="url(#hl)"/>
<rect x="331.60" y="95.88" width="9.20" height="4.58" fill="url(#hl)"/>
<rect x="331.60" y="109.64" width="9.20" height="27.51" fill="url(#hl)"/>
<rect x="340.80" y="95.88" width="9.20" height="4.58" fill="url(#hl)"/>
<rect x="340.80" y="109.64" width="9.20" height="27.51" fill="url(#hl)"/>
<rect x="350.00" y="95.88" width="9.20" height="4.58" fill="url(#hl)"/>
<rect x="350.00" y="109.64" width="9.20" height="27.51" fill="url(#hl)"/>
<rect x="359.20" y="95.88" width="9.20" height="4.58" fill="url(#hl)"/>
<rect x="359.20" y="109.64" width="9.20" height="27.51" fill="url(#hl)"/>
<rect x="368.40" y="95.88" width="9.20" height="4.58" fill="url(#hl)"/>
<rect x="368.40" y="109.64" width="9.20" height="27.51" fill="url(#hl)"/>
<rect x="377.60" y="95.88" width="9.20" height="4.58" fill="url(#hl)"/>
<rect x="377.60" y="109.64" width="9.20" height="27.51" fill="url(#hl)"/>
<rect x="386.80" y="95.88" width="9.20" height="4.58" fill="url(#hl)"/>
<rect x="386.80" y="109.64" width="9.20" height="27.51" fill="url(#hl)"/>
<rect x="396.00" y="95.88" width="9.20" height="4.58" fill="url(#hl)"/>
<rect x="396.00" y="109.64" width="9.20" height="27.51" fill="url(#hl)"/>
<rect x="405.20" y="95.88" width="9.20" height="4.58" fill="url(#hl)"/>
<rect x="405.20" y="109.64" width="9.20" height="27.51" fill="url(#hl)"/>
<rect x="414.40" y="95.88" width="9.20" height="4.58" fill="url(#hl)"/>
<rect x="414.40" y="109.64" width="9.20" height="27.51" fill="url(#hl)"/>
<rect x="0.10" y="36.58" width="285.50" height=".9" fill="#fff" fill-opacity=".06"/>
<rect x="0.10" y="40.07" width="285.50" height=".8" fill="#000" fill-opacity=".07"/>
<rect x="0.10" y="41.17" width="276.30" height=".9" fill="#fff" fill-opacity=".06"/>
<rect x="0.10" y="44.65" width="276.30" height=".8" fill="#000" fill-opacity=".07"/>
<rect x="0.10" y="45.75" width="257.90" height=".9" fill="#fff" fill-opacity=".06"/>
<rect x="0.10" y="49.23" width="257.90" height=".8" fill="#000" fill-opacity=".07"/>
<rect x="0.10" y="50.33" width="248.70" height=".9" fill="#fff" fill-opacity=".06"/>
<rect x="0.10" y="53.82" width="248.70" height=".8" fill="#000" fill-opacity=".07"/>
<rect x="0.10" y="54.92" width="239.50" height=".9" fill="#fff" fill-opacity=".06"/>
<rect x="0.10" y="58.41" width="239.50" height=".8" fill="#000" fill-opacity=".07"/>
<rect x="0.10" y="59.50" width="221.10" height=".9" fill="#fff" fill-opacity=".06"/>
<rect x="0.10" y="62.99" width="221.10" height=".8" fill="#000" fill-opacity=".07"/>
<rect x="0.10" y="96.18" width="423.50" height=".9" fill="#fff" fill-opacity=".06"/>
<rect x="0.10" y="99.67" width="423.50" height=".8" fill="#000" fill-opacity=".07"/>
<rect x="212.00" y="109.94" width="211.60" height=".9" fill="#fff" fill-opacity=".06"/>
<rect x="212.00" y="113.42" width="211.60" height=".8" fill="#000" fill-opacity=".07"/>
<rect x="212.00" y="114.53" width="211.60" height=".9" fill="#fff" fill-opacity=".06"/>
<rect x="212.00" y="118.01" width="211.60" height=".8" fill="#000" fill-opacity=".07"/>
<rect x="212.00" y="119.11" width="211.60" height=".9" fill="#fff" fill-opacity=".06"/>
<rect x="212.00" y="122.59" width="211.60" height=".8" fill="#000" fill-opacity=".07"/>
<rect x="212.00" y="123.69" width="211.60" height=".9" fill="#fff" fill-opacity=".06"/>
<rect x="212.00" y="127.18" width="211.60" height=".8" fill="#000" fill-opacity=".07"/>
<rect x="212.00" y="128.28" width="211.60" height=".9" fill="#fff" fill-opacity=".06"/>
<rect x="212.00" y="131.77" width="211.60" height=".8" fill="#000" fill-opacity=".07"/>
<rect x="212.00" y="132.87" width="211.60" height=".9" fill="#fff" fill-opacity=".06"/>
<rect x="212.00" y="136.35" width="211.60" height=".8" fill="#000" fill-opacity=".07"/>
<rect x="206.70" y="36.28" width="9.30" height="4.62" fill="#000"/>
<rect x="206.70" y="37.48" width="4.00" height="2.30" fill="#d4a274"/>
<rect x="211.90" y="37.48" width="4.10" height="2.30" fill="#ececec"/>
<rect x="206.70" y="40.87" width="9.30" height="4.62" fill="#000"/>
<rect x="206.70" y="42.07" width="4.00" height="2.30" fill="#d4a274"/>
<rect x="211.90" y="42.07" width="4.10" height="2.30" fill="#ececec"/>
<rect x="206.70" y="45.45" width="9.30" height="4.62" fill="#000"/>
<rect x="206.70" y="46.65" width="4.00" height="2.30" fill="#d4a274"/>
<rect x="211.90" y="46.65" width="4.10" height="2.30" fill="#ececec"/>
<rect x="206.70" y="50.03" width="9.30" height="4.62" fill="#000"/>
<rect x="206.70" y="51.23" width="4.00" height="2.30" fill="#d4a274"/>
<rect x="211.90" y="51.23" width="4.10" height="2.30" fill="#ececec"/>
<rect x="206.70" y="54.62" width="9.30" height="4.62" fill="#000"/>
<rect x="206.70" y="55.82" width="4.00" height="2.30" fill="#d4a274"/>
<rect x="211.90" y="55.82" width="4.10" height="2.30" fill="#ececec"/>
<rect x="206.70" y="59.20" width="9.30" height="4.62" fill="#000"/>
<rect x="206.70" y="60.40" width="4.00" height="2.30" fill="#d4a274"/>
<rect x="211.90" y="60.40" width="4.10" height="2.30" fill="#f6babc"/>
<rect x="206.70" y="95.88" width="9.30" height="4.62" fill="#000"/>
<rect x="206.70" y="97.08" width="4.00" height="2.30" fill="#d4a274"/>
<rect x="211.90" y="97.08" width="4.10" height="2.30" fill="#7ac579"/>
<rect x="206.70" y="109.64" width="9.30" height="4.62" fill="#000"/>
<rect x="206.70" y="110.84" width="4.00" height="2.30" fill="#3a3a3a"/>
<rect x="211.90" y="110.84" width="4.10" height="2.30" fill="#7ac579"/>
<rect x="206.70" y="114.23" width="9.30" height="4.62" fill="#000"/>
<rect x="206.70" y="115.43" width="4.00" height="2.30" fill="#3a3a3a"/>
<rect x="211.90" y="115.43" width="4.10" height="2.30" fill="#7ac579"/>
<rect x="206.70" y="118.81" width="9.30" height="4.62" fill="#000"/>
<rect x="206.70" y="120.01" width="4.00" height="2.30" fill="#3a3a3a"/>
<rect x="211.90" y="120.01" width="4.10" height="2.30" fill="#7ac579"/>
<rect x="206.70" y="123.39" width="9.30" height="4.62" fill="#000"/>
<rect x="206.70" y="124.59" width="4.00" height="2.30" fill="#3a3a3a"/>
<rect x="211.90" y="124.59" width="4.10" height="2.30" fill="#7ac579"/>
<rect x="206.70" y="127.98" width="9.30" height="4.62" fill="#000"/>
<rect x="206.70" y="129.18" width="4.00" height="2.30" fill="#3a3a3a"/>
<rect x="211.90" y="129.18" width="4.10" height="2.30" fill="#7ac579"/>
<rect x="206.70" y="132.56" width="9.30" height="4.62" fill="#000"/>
<rect x="206.70" y="133.76" width="4.00" height="2.30" fill="#3a3a3a"/>
<rect x="211.90" y="133.76" width="4.10" height="2.30" fill="#7ac579"/>
<g font-family="Liberation Sans, sans-serif" font-size="3.1" text-anchor="middle" font-weight="bold">
<text x="4.2" y="3.1" fill="#000" fill-opacity=".6">A</text>
<text x="4.2" y="7.7" fill="#000" fill-opacity=".6">A</text>
<text x="4.2" y="12.3" fill="#000" fill-opacity=".6">A</text>
<text x="4.2" y="16.8" fill="#000" fill-opacity=".6">A</text>
<text x="4.2" y="21.4" fill="#000" fill-opacity=".6">A</text>
<text x="4.2" y="26.0" fill="#000" fill-opacity=".6">A</text>
<text x="4.2" y="35.2" fill="#000" fill-opacity=".6">A</text>
<text x="4.2" y="39.8" fill="#111" fill-opacity=".9">A</text>
<text x="4.2" y="44.3" fill="#111" fill-opacity=".9">A</text>
<text x="4.2" y="48.9" fill="#111" fill-opacity=".9">A</text>
<text x="4.2" y="53.5" fill="#111" fill-opacity=".9">A</text>
<text x="4.2" y="58.1" fill="#111" fill-opacity=".9">A</text>
<text x="4.2" y="62.7" fill="#111" fill-opacity=".9">A</text>
<text x="4.2" y="67.3" fill="#000" fill-opacity=".6">A</text>
<text x="4.2" y="71.9" fill="#000" fill-opacity=".6">A</text>
<text x="4.2" y="76.4" fill="#000" fill-opacity=".6">A</text>
<text x="4.2" y="81.0" fill="#000" fill-opacity=".6">A</text>
<text x="4.2" y="85.6" fill="#000" fill-opacity=".6">A</text>
<text x="4.2" y="99.4" fill="#111" fill-opacity=".9">A</text>
<text x="4.2" y="104.0" fill="#000" fill-opacity=".6">A</text>
<text x="4.2" y="108.5" fill="#000" fill-opacity=".6">A</text>
<text x="4.2" y="113.1" fill="#000" fill-opacity=".6">A</text>
<text x="4.2" y="117.7" fill="#000" fill-opacity=".6">A</text>
<text x="4.2" y="122.3" fill="#000" fill-opacity=".6">A</text>
<text x="4.2" y="126.9" fill="#000" fill-opacity=".6">A</text>
<text x="4.2" y="131.5" fill="#000" fill-opacity=".6">A</text>
<text x="4.2" y="136.0" fill="#000" fill-opacity=".6">A</text>
<text x="4.2" y="140.6" fill="#000" fill-opacity=".6">A</text>
<text x="4.2" y="145.2" fill="#000" fill-opacity=".6">A</text>
<text x="4.2" y="149.8" fill="#000" fill-opacity=".6">A</text>
<text x="4.2" y="154.4" fill="#000" fill-opacity=".6">A</text>
<text x="4.2" y="159.0" fill="#000" fill-opacity=".6">A</text>
<text x="4.2" y="163.6" fill="#000" fill-opacity=".6">A</text>
<text x="4.2" y="168.1" fill="#000" fill-opacity=".6">A</text>
<text x="4.2" y="172.7" fill="#000" fill-opacity=".6">A</text>
<text x="4.2" y="177.3" fill="#000" fill-opacity=".6">A</text>
<text x="4.2" y="181.9" fill="#000" fill-opacity=".6">A</text>
<text x="13.4" y="3.1" fill="#000" fill-opacity=".6">C</text>
<text x="13.4" y="7.7" fill="#000" fill-opacity=".6">C</text>
<text x="13.4" y="12.3" fill="#000" fill-opacity=".6">C</text>
<text x="13.4" y="16.8" fill="#000" fill-opacity=".6">C</text>
<text x="13.4" y="21.4" fill="#000" fill-opacity=".6">C</text>
<text x="13.4" y="30.6" fill="#000" fill-opacity=".6">C</text>
<text x="13.4" y="35.2" fill="#000" fill-opacity=".6">C</text>
<text x="13.4" y="39.8" fill="#111" fill-opacity=".9">C</text>
<text x="13.4" y="44.3" fill="#111" fill-opacity=".9">C</text>
<text x="13.4" y="48.9" fill="#111" fill-opacity=".9">C</text>
<text x="13.4" y="53.5" fill="#111" fill-opacity=".9">C</text>
<text x="13.4" y="58.1" fill="#111" fill-opacity=".9">C</text>
<text x="13.4" y="62.7" fill="#111" fill-opacity=".9">C</text>
<text x="13.4" y="67.3" fill="#000" fill-opacity=".6">C</text>
<text x="13.4" y="71.9" fill="#000" fill-opacity=".6">C</text>
<text x="13.4" y="76.4" fill="#000" fill-opacity=".6">C</text>
<text x="13.4" y="81.0" fill="#000" fill-opacity=".6">C</text>
<text x="13.4" y="85.6" fill="#000" fill-opacity=".6">C</text>
<text x="13.4" y="99.4" fill="#111" fill-opacity=".9">C</text>
<text x="13.4" y="104.0" fill="#000" fill-opacity=".6">C</text>
<text x="13.4" y="108.5" fill="#000" fill-opacity=".6">C</text>
<text x="13.4" y="113.1" fill="#000" fill-opacity=".6">C</text>
<text x="13.4" y="117.7" fill="#000" fill-opacity=".6">C</text>
<text x="13.4" y="122.3" fill="#000" fill-opacity=".6">C</text>
<text x="13.4" y="126.9" fill="#000" fill-opacity=".6">C</text>
<text x="13.4" y="131.5" fill="#000" fill-opacity=".6">C</text>
<text x="13.4" y="136.0" fill="#000" fill-opacity=".6">C</text>
<text x="13.4" y="140.6" fill="#000" fill-opacity=".6">C</text>
<text x="13.4" y="145.2" fill="#000" fill-opacity=".6">C</text>
<text x="13.4" y="149.8" fill="#000" fill-opacity=".6">C</text>
<text x="13.4" y="154.4" fill="#000" fill-opacity=".6">C</text>
<text x="13.4" y="159.0" fill="#000" fill-opacity=".6">C</text>
<text x="13.4" y="163.6" fill="#000" fill-opacity=".6">C</text>
<text x="13.4" y="168.1" fill="#000" fill-opacity=".6">C</text>
<text x="13.4" y="172.7" fill="#000" fill-opacity=".6">C</text>
<text x="13.4" y="177.3" fill="#000" fill-opacity=".6">C</text>
<text x="13.4" y="181.9" fill="#000" fill-opacity=".6">C</text>
<text x="22.5" y="3.1" fill="#000" fill-opacity=".6">C</text>
<text x="22.5" y="7.7" fill="#000" fill-opacity=".6">C</text>
<text x="22.5" y="12.3" fill="#000" fill-opacity=".6">C</text>
<text x="22.5" y="16.8" fill="#000" fill-opacity=".6">C</text>
<text x="22.5" y="26.0" fill="#000" fill-opacity=".6">C</text>
<text x="22.5" y="30.6" fill="#000" fill-opacity=".6">C</text>
<text x="22.5" y="35.2" fill="#000" fill-opacity=".6">C</text>
<text x="22.5" y="39.8" fill="#111" fill-opacity=".9">C</text>
<text x="22.5" y="44.3" fill="#111" fill-opacity=".9">C</text>
<text x="22.5" y="48.9" fill="#111" fill-opacity=".9">C</text>
<text x="22.5" y="53.5" fill="#111" fill-opacity=".9">C</text>
<text x="22.5" y="58.1" fill="#111" fill-opacity=".9">C</text>
<text x="22.5" y="62.7" fill="#111" fill-opacity=".9">C</text>
<text x="22.5" y="67.3" fill="#000" fill-opacity=".6">C</text>
<text x="22.5" y="71.9" fill="#000" fill-opacity=".6">C</text>
<text x="22.5" y="76.4" fill="#000" fill-opacity=".6">C</text>
<text x="22.5" y="81.0" fill="#000" fill-opacity=".6">C</text>
<text x="22.5" y="85.6" fill="#000" fill-opacity=".6">C</text>
<text x="22.5" y="99.4" fill="#111" fill-opacity=".9">C</text>
<text x="22.5" y="104.0" fill="#000" fill-opacity=".6">C</text>
<text x="22.5" y="108.5" fill="#000" fill-opacity=".6">C</text>
<text x="22.5" y="113.1" fill="#000" fill-opacity=".6">C</text>
<text x="22.5" y="117.7" fill="#000" fill-opacity=".6">C</text>
<text x="22.5" y="122.3" fill="#000" fill-opacity=".6">C</text>
<text x="22.5" y="126.9" fill="#000" fill-opacity=".6">C</text>
<text x="22.5" y="131.5" fill="#000" fill-opacity=".6">C</text>
<text x="22.5" y="136.0" fill="#000" fill-opacity=".6">C</text>
<text x="22.5" y="140.6" fill="#000" fill-opacity=".6">C</text>
<text x="22.5" y="145.2" fill="#000" fill-opacity=".6">C</text>
<text x="22.5" y="149.8" fill="#000" fill-opacity=".6">C</text>
<text x="22.5" y="154.4" fill="#000" fill-opacity=".6">C</text>
<text x="22.5" y="159.0" fill="#000" fill-opacity=".6">C</text>
<text x="22.5" y="163.6" fill="#000" fill-opacity=".6">C</text>
<text x="22.5" y="168.1" fill="#000" fill-opacity=".6">C</text>
<text x="22.5" y="172.7" fill="#000" fill-opacity=".6">C</text>
<text x="22.5" y="177.3" fill="#000" fill-opacity=".6">C</text>
<text x="22.5" y="181.9" fill="#000" fill-opacity=".6">C</text>
<text x="31.7" y="3.1" fill="#000" fill-opacity=".6">A</text>
<text x="31.7" y="7.7" fill="#000" fill-opacity=".6">A</text>
<text x="31.7" y="12.3" fill="#000" fill-opacity=".6">A</text>
<text x="31.7" y="21.4" fill="#000" fill-opacity=".6">A</text>
<text x="31.7" y="26.0" fill="#000" fill-opacity=".6">A</text>
<text x="31.7" y="30.6" fill="#000" fill-opacity=".6">A</text>
<text x="31.7" y="35.2" fill="#000" fill-opacity=".6">A</text>
<text x="31.7" y="39.8" fill="#111" fill-opacity=".9">A</text>
<text x="31.7" y="44.3" fill="#111" fill-opacity=".9">A</text>
<text x="31.7" y="48.9" fill="#111" fill-opacity=".9">A</text>
<text x="31.7" y="53.5" fill="#111" fill-opacity=".9">A</text>
<text x="31.7" y="58.1" fill="#111" fill-opacity=".9">A</text>
<text x="31.7" y="62.7" fill="#111" fill-opacity=".9">A</text>
<text x="31.7" y="67.3" fill="#000" fill-opacity=".6">A</text>
<text x="31.7" y="71.9" fill="#000" fill-opacity=".6">A</text>
<text x="31.7" y="76.4" fill="#000" fill-opacity=".6">A</text>
<text x="31.7" y="81.0" fill="#000" fill-opacity=".6">A</text>
<text x="31.7" y="85.6" fill="#000" fill-opacity=".6">A</text>
<text x="31.7" y="99.4" fill="#111" fill-opacity=".9">A</text>
<text x="31.7" y="104.0" fill="#000" fill-opacity=".6">A</text>
<text x="31.7" y="108.5" fill="#000" fill-opacity=".6">A</text>
<text x="31.7" y="113.1" fill="#000" fill-opacity=".6">A</text>
<text x="31.7" y="117.7" fill="#000" fill-opacity=".6">A</text>
<text x="31.7" y="122.3" fill="#000" fill-opacity=".6">A</text>
<text x="31.7" y="126.9" fill="#000" fill-opacity=".6">A</text>
<text x="31.7" y="131.5" fill="#000" fill-opacity=".6">A</text>
<text x="31.7" y="136.0" fill="#000" fill-opacity=".6">A</text>
<text x="31.7" y="140.6" fill="#000" fill-opacity=".6">A</text>
<text x="31.7" y="145.2" fill="#000" fill-opacity=".6">A</text>
<text x="31.7" y="149.8" fill="#000" fill-opacity=".6">A</text>
<text x="31.7" y="154.4" fill="#000" fill-opacity=".6">A</text>
<text x="31.7" y="159.0" fill="#000" fill-opacity=".6">A</text>
<text x="31.7" y="163.6" fill="#000" fill-opacity=".6">A</text>
<text x="31.7" y="168.1" fill="#000" fill-opacity=".6">A</text>
<text x="31.7" y="172.7" fill="#000" fill-opacity=".6">A</text>
<text x="31.7" y="177.3" fill="#000" fill-opacity=".6">A</text>
<text x="31.7" y="181.9" fill="#000" fill-opacity=".6">A</text>
<text x="40.9" y="3.1" fill="#000" fill-opacity=".6">C</text>
<text x="40.9" y="7.7" fill="#000" fill-opacity=".6">C</text>
<text x="40.9" y="16.8" fill="#000" fill-opacity=".6">C</text>
<text x="40.9" y="21.4" fill="#000" fill-opacity=".6">C</text>
<text x="40.9" y="26.0" fill="#000" fill-opacity=".6">C</text>
<text x="40.9" y="30.6" fill="#000" fill-opacity=".6">C</text>
<text x="40.9" y="35.2" fill="#000" fill-opacity=".6">C</text>
<text x="40.9" y="39.8" fill="#111" fill-opacity=".9">C</text>
<text x="40.9" y="44.3" fill="#111" fill-opacity=".9">C</text>
<text x="40.9" y="48.9" fill="#111" fill-opacity=".9">C</text>
<text x="40.9" y="53.5" fill="#111" fill-opacity=".9">C</text>
<text x="40.9" y="58.1" fill="#111" fill-opacity=".9">C</text>
<text x="40.9" y="62.7" fill="#111" fill-opacity=".9">C</text>
<text x="40.9" y="67.3" fill="#000" fill-opacity=".6">C</text>
<text x="40.9" y="71.9" fill="#000" fill-opacity=".6">C</text>
<text x="40.9" y="76.4" fill="#000" fill-opacity=".6">C</text>
<text x="40.9" y="81.0" fill="#000" fill-opacity=".6">C</text>
<text x="40.9" y="85.6" fill="#000" fill-opacity=".6">C</text>
<text x="40.9" y="99.4" fill="#111" fill-opacity=".9">C</text>
<text x="40.9" y="104.0" fill="#000" fill-opacity=".6">C</text>
<text x="40.9" y="108.5" fill="#000" fill-opacity=".6">C</text>
<text x="40.9" y="113.1" fill="#000" fill-opacity=".6">C</text>
<text x="40.9" y="117.7" fill="#000" fill-opacity=".6">C</text>
<text x="40.9" y="122.3" fill="#000" fill-opacity=".6">C</text>
<text x="40.9" y="126.9" fill="#000" fill-opacity=".6">C</text>
<text x="40.9" y="131.5" fill="#000" fill-opacity=".6">C</text>
<text x="40.9" y="136.0" fill="#000" fill-opacity=".6">C</text>
<text x="40.9" y="140.6" fill="#000" fill-opacity=".6">C</text>
<text x="40.9" y="145.2" fill="#000" fill-opacity=".6">C</text>
<text x="40.9" y="149.8" fill="#000" fill-opacity=".6">C</text>
<text x="40.9" y="154.4" fill="#000" fill-opacity=".6">C</text>
<text x="40.9" y="159.0" fill="#000" fill-opacity=".6">C</text>
<text x="40.9" y="163.6" fill="#000" fill-opacity=".6">C</text>
<text x="40.9" y="168.1" fill="#000" fill-opacity=".6">C</text>
<text x="40.9" y="172.7" fill="#000" fill-opacity=".6">C</text>
<text x="40.9" y="177.3" fill="#000" fill-opacity=".6">C</text>
<text x="40.9" y="181.9" fill="#000" fill-opacity=".6">C</text>
<text x="50.0" y="3.1" fill="#000" fill-opacity=".6">C</text>
<text x="50.0" y="12.3" fill="#000" fill-opacity=".6">C</text>
<text x="50.0" y="16.8" fill="#000" fill-opacity=".6">C</text>
<text x="50.0" y="21.4" fill="#000" fill-opacity=".6">C</text>
<text x="50.0" y="26.0" fill="#000" fill-opacity=".6">C</text>
<text x="50.0" y="30.6" fill="#000" fill-opacity=".6">C</text>
<text x="50.0" y="35.2" fill="#000" fill-opacity=".6">C</text>
<text x="50.0" y="39.8" fill="#111" fill-opacity=".9">C</text>
<text x="50.0" y="44.3" fill="#111" fill-opacity=".9">C</text>
<text x="50.0" y="48.9" fill="#111" fill-opacity=".9">C</text>
<text x="50.0" y="53.5" fill="#111" fill-opacity=".9">C</text>
<text x="50.0" y="58.1" fill="#111" fill-opacity=".9">C</text>
<text x="50.0" y="62.7" fill="#111" fill-opacity=".9">C</text>
<text x="50.0" y="67.3" fill="#000" fill-opacity=".6">C</text>
<text x="50.0" y="71.9" fill="#000" fill-opacity=".6">C</text>
<text x="50.0" y="76.4" fill="#000" fill-opacity=".6">C</text>
<text x="50.0" y="81.0" fill="#000" fill-opacity=".6">C</text>
<text x="50.0" y="85.6" fill="#000" fill-opacity=".6">C</text>
<text x="50.0" y="99.4" fill="#111" fill-opacity=".9">C</text>
<text x="50.0" y="104.0" fill="#000" fill-opacity=".6">C</text>
<text x="50.0" y="108.5" fill="#000" fill-opacity=".6">C</text>
<text x="50.0" y="113.1" fill="#000" fill-opacity=".6">C</text>
<text x="50.0" y="117.7" fill="#000" fill-opacity=".6">C</text>
<text x="50.0" y="122.3" fill="#000" fill-opacity=".6">C</text>
<text x="50.0" y="126.9" fill="#000" fill-opacity=".6">C</text>
<text x="50.0" y="131.5" fill="#000" fill-opacity=".6">C</text>
<text x="50.0" y="136.0" fill="#000" fill-opacity=".6">C</text>
<text x="50.0" y="140.6" fill="#000" fill-opacity=".6">C</text>
<text x="50.0" y="145.2" fill="#000" fill-opacity=".6">C</text>
<text x="50.0" y="149.8" fill="#000" fill-opacity=".6">C</text>
<text x="50.0" y="154.4" fill="#000" fill-opacity=".6">C</text>
<text x="50.0" y="159.0" fill="#000" fill-opacity=".6">C</text>
<text x="50.0" y="163.6" fill="#000" fill-opacity=".6">C</text>
<text x="50.0" y="168.1" fill="#000" fill-opacity=".6">C</text>
<text x="50.0" y="172.7" fill="#000" fill-opacity=".6">C</text>
<text x="50.0" y="177.3" fill="#000" fill-opacity=".6">C</text>
<text x="50.0" y="181.9" fill="#000" fill-opacity=".6">C</text>
<text x="59.2" y="7.7" fill="#000" fill-opacity=".6">A</text>
<text x="59.2" y="12.3" fill="#000" fill-opacity=".6">A</text>
<text x="59.2" y="16.8" fill="#000" fill-opacity=".6">A</text>
<text x="59.2" y="21.4" fill="#000" fill-opacity=".6">A</text>
<text x="59.2" y="26.0" fill="#000" fill-opacity=".6">A</text>
<text x="59.2" y="30.6" fill="#000" fill-opacity=".6">A</text>
<text x="59.2" y="35.2" fill="#000" fill-opacity=".6">A</text>
<text x="59.2" y="39.8" fill="#111" fill-opacity=".9">A</text>
<text x="59.2" y="44.3" fill="#111" fill-opacity=".9">A</text>
<text x="59.2" y="48.9" fill="#111" fill-opacity=".9">A</text>
<text x="59.2" y="53.5" fill="#111" fill-opacity=".9">A</text>
<text x="59.2" y="58.1" fill="#111" fill-opacity=".9">A</text>
<text x="59.2" y="62.7" fill="#111" fill-opacity=".9">A</text>
<text x="59.2" y="67.3" fill="#000" fill-opacity=".6">A</text>
<text x="59.2" y="71.9" fill="#000" fill-opacity=".6">A</text>
<text x="59.2" y="76.4" fill="#000" fill-opacity=".6">A</text>
<text x="59.2" y="81.0" fill="#000" fill-opacity=".6">A</text>
<text x="59.2" y="85.6" fill="#000" fill-opacity=".6">A</text>
<text x="59.2" y="99.4" fill="#111" fill-opacity=".9">A</text>
<text x="59.2" y="104.0" fill="#000" fill-opacity=".6">A</text>
<text x="59.2" y="108.5" fill="#000" fill-opacity=".6">A</text>
<text x="59.2" y="113.1" fill="#000" fill-opacity=".6">A</text>
<text x="59.2" y="117.7" fill="#000" fill-opacity=".6">A</text>
<text x="59.2" y="122.3" fill="#000" fill-opacity=".6">A</text>
<text x="59.2" y="126.9" fill="#000" fill-opacity=".6">A</text>
<text x="59.2" y="131.5" fill="#000" fill-opacity=".6">A</text>
<text x="59.2" y="136.0" fill="#000" fill-opacity=".6">A</text>
<text x="59.2" y="140.6" fill="#000" fill-opacity=".6">A</text>
<text x="59.2" y="145.2" fill="#000" fill-opacity=".6">A</text>
<text x="59.2" y="149.8" fill="#000" fill-opacity=".6">A</text>
<text x="59.2" y="154.4" fill="#000" fill-opacity=".6">A</text>
<text x="59.2" y="159.0" fill="#000" fill-opacity=".6">A</text>
<text x="59.2" y="163.6" fill="#000" fill-opacity=".6">A</text>
<text x="59.2" y="168.1" fill="#000" fill-opacity=".6">A</text>
<text x="59.2" y="172.7" fill="#000" fill-opacity=".6">A</text>
<text x="59.2" y="177.3" fill="#000" fill-opacity=".6">A</text>
<text x="59.2" y="181.9" fill="#000" fill-opacity=".6">A</text>
<text x="68.4" y="3.1" fill="#000" fill-opacity=".6">C</text>
<text x="68.4" y="7.7" fill="#000" fill-opacity=".6">C</text>
<text x="68.4" y="12.3" fill="#000" fill-opacity=".6">C</text>
<text x="68.4" y="16.8" fill="#000" fill-opacity=".6">C</text>
<text x="68.4" y="21.4" fill="#000" fill-opacity=".6">C</text>
<text x="68.4" y="26.0" fill="#000" fill-opacity=".6">C</text>
<text x="68.4" y="30.6" fill="#000" fill-opacity=".6">C</text>
<text x="68.4" y="35.2" fill="#000" fill-opacity=".6">C</text>
<text x="68.4" y="39.8" fill="#111" fill-opacity=".9">C</text>
<text x="68.4" y="44.3" fill="#111" fill-opacity=".9">C</text>
<text x="68.4" y="48.9" fill="#111" fill-opacity=".9">C</text>
<text x="68.4" y="53.5" fill="#111" fill-opacity=".9">C</text>
<text x="68.4" y="58.1" fill="#111" fill-opacity=".9">C</text>
<text x="68.4" y="62.7" fill="#111" fill-opacity=".9">C</text>
<text x="68.4" y="67.3" fill="#000" fill-opacity=".6">C</text>
<text x="68.4" y="71.9" fill="#000" fill-opacity=".6">C</text>
<text x="68.4" y="76.4" fill="#000" fill-opacity=".6">C</text>
<text x="68.4" y="81.0" fill="#000" fill-opacity=".6">C</text>
<text x="68.4" y="85.6" fill="#000" fill-opacity=".6">C</text>
<text x="68.4" y="99.4" fill="#111" fill-opacity=".9">C</text>
<text x="68.4" y="104.0" fill="#000" fill-opacity=".6">C</text>
<text x="68.4" y="108.5" fill="#000" fill-opacity=".6">C</text>
<text x="68.4" y="113.1" fill="#000" fill-opacity=".6">C</text>
<text x="68.4" y="117.7" fill="#000" fill-opacity=".6">C</text>
<text x="68.4" y="122.3" fill="#000" fill-opacity=".6">C</text>
<text x="68.4" y="126.9" fill="#000" fill-opacity=".6">C</text>
<text x="68.4" y="131.5" fill="#000" fill-opacity=".6">C</text>
<text x="68.4" y="136.0" fill="#000" fill-opacity=".6">C</text>
<text x="68.4" y="140.6" fill="#000" fill-opacity=".6">C</text>
<text x="68.4" y="145.2" fill="#000" fill-opacity=".6">C</text>
<text x="68.4" y="149.8" fill="#000" fill-opacity=".6">C</text>
<text x="68.4" y="154.4" fill="#000" fill-opacity=".6">C</text>
<text x="68.4" y="159.0" fill="#000" fill-opacity=".6">C</text>
<text x="68.4" y="163.6" fill="#000" fill-opacity=".6">C</text>
<text x="68.4" y="168.1" fill="#000" fill-opacity=".6">C</text>
<text x="68.4" y="172.7" fill="#000" fill-opacity=".6">C</text>
<text x="68.4" y="177.3" fill="#000" fill-opacity=".6">C</text>
<text x="77.5" y="3.1" fill="#000" fill-opacity=".6">C</text>
<text x="77.5" y="7.7" fill="#000" fill-opacity=".6">C</text>
<text x="77.5" y="12.3" fill="#000" fill-opacity=".6">C</text>
<text x="77.5" y="16.8" fill="#000" fill-opacity=".6">C</text>
<text x="77.5" y="21.4" fill="#000" fill-opacity=".6">C</text>
<text x="77.5" y="26.0" fill="#000" fill-opacity=".6">C</text>
<text x="77.5" y="30.6" fill="#000" fill-opacity=".6">C</text>
<text x="77.5" y="35.2" fill="#000" fill-opacity=".6">C</text>
<text x="77.5" y="39.8" fill="#111" fill-opacity=".9">C</text>
<text x="77.5" y="44.3" fill="#111" fill-opacity=".9">C</text>
<text x="77.5" y="48.9" fill="#111" fill-opacity=".9">C</text>
<text x="77.5" y="53.5" fill="#111" fill-opacity=".9">C</text>
<text x="77.5" y="58.1" fill="#111" fill-opacity=".9">C</text>
<text x="77.5" y="62.7" fill="#111" fill-opacity=".9">C</text>
<text x="77.5" y="67.3" fill="#000" fill-opacity=".6">C</text>
<text x="77.5" y="71.9" fill="#000" fill-opacity=".6">C</text>
<text x="77.5" y="76.4" fill="#000" fill-opacity=".6">C</text>
<text x="77.5" y="81.0" fill="#000" fill-opacity=".6">C</text>
<text x="77.5" y="85.6" fill="#000" fill-opacity=".6">C</text>
<text x="77.5" y="90.2" fill="#000" fill-opacity=".6">C</text>
<text x="77.5" y="99.4" fill="#111" fill-opacity=".9">C</text>
<text x="77.5" y="104.0" fill="#000" fill-opacity=".6">C</text>
<text x="77.5" y="108.5" fill="#000" fill-opacity=".6">C</text>
<text x="77.5" y="113.1" fill="#000" fill-opacity=".6">C</text>
<text x="77.5" y="117.7" fill="#000" fill-opacity=".6">C</text>
<text x="77.5" y="122.3" fill="#000" fill-opacity=".6">C</text>
<text x="77.5" y="126.9" fill="#000" fill-opacity=".6">C</text>
<text x="77.5" y="131.5" fill="#000" fill-opacity=".6">C</text>
<text x="77.5" y="136.0" fill="#000" fill-opacity=".6">C</text>
<text x="77.5" y="140.6" fill="#000" fill-opacity=".6">C</text>
<text x="77.5" y="145.2" fill="#000" fill-opacity=".6">C</text>
<text x="77.5" y="149.8" fill="#000" fill-opacity=".6">C</text>
<text x="77.5" y="154.4" fill="#000" fill-opacity=".6">C</text>
<text x="77.5" y="159.0" fill="#000" fill-opacity=".6">C</text>
<text x="77.5" y="163.6" fill="#000" fill-opacity=".6">C</text>
<text x="77.5" y="168.1" fill="#000" fill-opacity=".6">C</text>
<text x="77.5" y="172.7" fill="#000" fill-opacity=".6">C</text>
<text x="86.7" y="3.1" fill="#000" fill-opacity=".6">A</text>
<text x="86.7" y="7.7" fill="#000" fill-opacity=".6">A</text>
<text x="86.7" y="12.3" fill="#000" fill-opacity=".6">A</text>
<text x="86.7" y="16.8" fill="#000" fill-opacity=".6">A</text>
<text x="86.7" y="21.4" fill="#000" fill-opacity=".6">A</text>
<text x="86.7" y="26.0" fill="#000" fill-opacity=".6">A</text>
<text x="86.7" y="30.6" fill="#000" fill-opacity=".6">A</text>
<text x="86.7" y="35.2" fill="#000" fill-opacity=".6">A</text>
<text x="86.7" y="39.8" fill="#111" fill-opacity=".9">A</text>
<text x="86.7" y="44.3" fill="#111" fill-opacity=".9">A</text>
<text x="86.7" y="48.9" fill="#111" fill-opacity=".9">A</text>
<text x="86.7" y="53.5" fill="#111" fill-opacity=".9">A</text>
<text x="86.7" y="58.1" fill="#111" fill-opacity=".9">A</text>
<text x="86.7" y="62.7" fill="#111" fill-opacity=".9">A</text>
<text x="86.7" y="67.3" fill="#000" fill-opacity=".6">A</text>
<text x="86.7" y="71.9" fill="#000" fill-opacity=".6">A</text>
<text x="86.7" y="76.4" fill="#000" fill-opacity=".6">A</text>
<text x="86.7" y="81.0" fill="#000" fill-opacity=".6">A</text>
<text x="86.7" y="85.6" fill="#000" fill-opacity=".6">A</text>
<text x="86.7" y="90.2" fill="#000" fill-opacity=".6">A</text>
<text x="86.7" y="94.8" fill="#000" fill-opacity=".6">A</text>
<text x="86.7" y="99.4" fill="#111" fill-opacity=".9">A</text>
<text x="86.7" y="104.0" fill="#000" fill-opacity=".6">A</text>
<text x="86.7" y="108.5" fill="#000" fill-opacity=".6">A</text>
<text x="86.7" y="113.1" fill="#000" fill-opacity=".6">A</text>
<text x="86.7" y="117.7" fill="#000" fill-opacity=".6">A</text>
<text x="86.7" y="122.3" fill="#000" fill-opacity=".6">A</text>
<text x="86.7" y="126.9" fill="#000" fill-opacity=".6">A</text>
<text x="86.7" y="131.5" fill="#000" fill-opacity=".6">A</text>
<text x="86.7" y="136.0" fill="#000" fill-opacity=".6">A</text>
<text x="86.7" y="140.6" fill="#000" fill-opacity=".6">A</text>
<text x="86.7" y="145.2" fill="#000" fill-opacity=".6">A</text>
<text x="86.7" y="149.8" fill="#000" fill-opacity=".6">A</text>
<text x="86.7" y="154.4" fill="#000" fill-opacity=".6">A</text>
<text x="86.7" y="159.0" fill="#000" fill-opacity=".6">A</text>
<text x="86.7" y="163.6" fill="#000" fill-opacity=".6">A</text>
<text x="86.7" y="168.1" fill="#000" fill-opacity=".6">A</text>
<text x="95.9" y="3.1" fill="#000" fill-opacity=".6">T</text>
<text x="95.9" y="7.7" fill="#000" fill-opacity=".6">T</text>
<text x="95.9" y="12.3" fill="#000" fill-opacity=".6">T</text>
<text x="95.9" y="16.8" fill="#000" fill-opacity=".6">T</text>
<text x="95.9" y="21.4" fill="#000" fill-opacity=".6">T</text>
<text x="95.9" y="26.0" fill="#000" fill-opacity=".6">T</text>
<text x="95.9" y="30.6" fill="#000" fill-opacity=".6">T</text>
<text x="95.9" y="35.2" fill="#000" fill-opacity=".6">T</text>
<text x="95.9" y="39.8" fill="#111" fill-opacity=".9">T</text>
<text x="95.9" y="44.3" fill="#111" fill-opacity=".9">T</text>
<text x="95.9" y="48.9" fill="#111" fill-opacity=".9">T</text>
<text x="95.9" y="53.5" fill="#111" fill-opacity=".9">T</text>
<text x="95.9" y="58.1" fill="#111" fill-opacity=".9">T</text>
<text x="95.9" y="62.7" fill="#111" fill-opacity=".9">T</text>
<text x="95.9" y="67.3" fill="#000" fill-opacity=".6">T</text>
<text x="95.9" y="71.9" fill="#000" fill-opacity=".6">T</text>
<text x="95.9" y="76.4" fill="#000" fill-opacity=".6">T</text>
<text x="95.9" y="81.0" fill="#000" fill-opacity=".6">T</text>
<text x="95.9" y="85.6" fill="#000" fill-opacity=".6">T</text>
<text x="95.9" y="90.2" fill="#000" fill-opacity=".6">T</text>
<text x="95.9" y="94.8" fill="#000" fill-opacity=".6">T</text>
<text x="95.9" y="99.4" fill="#111" fill-opacity=".9">T</text>
<text x="95.9" y="104.0" fill="#000" fill-opacity=".6">T</text>
<text x="95.9" y="108.5" fill="#000" fill-opacity=".6">T</text>
<text x="95.9" y="113.1" fill="#000" fill-opacity=".6">T</text>
<text x="95.9" y="117.7" fill="#000" fill-opacity=".6">T</text>
<text x="95.9" y="122.3" fill="#000" fill-opacity=".6">T</text>
<text x="95.9" y="126.9" fill="#000" fill-opacity=".6">T</text>
<text x="95.9" y="131.5" fill="#000" fill-opacity=".6">T</text>
<text x="95.9" y="136.0" fill="#000" fill-opacity=".6">T</text>
<text x="95.9" y="140.6" fill="#000" fill-opacity=".6">T</text>
<text x="95.9" y="145.2" fill="#000" fill-opacity=".6">T</text>
<text x="95.9" y="149.8" fill="#000" fill-opacity=".6">T</text>
<text x="95.9" y="154.4" fill="#000" fill-opacity=".6">T</text>
<text x="95.9" y="159.0" fill="#000" fill-opacity=".6">T</text>
<text x="95.9" y="163.6" fill="#000" fill-opacity=".6">T</text>
<text x="95.9" y="172.7" fill="#000" fill-opacity=".6">T</text>
<text x="105.1" y="3.1" fill="#000" fill-opacity=".6">C</text>
<text x="105.1" y="7.7" fill="#000" fill-opacity=".6">C</text>
<text x="105.1" y="12.3" fill="#000" fill-opacity=".6">C</text>
<text x="105.1" y="16.8" fill="#000" fill-opacity=".6">C</text>
<text x="105.1" y="21.4" fill="#000" fill-opacity=".6">C</text>
<text x="105.1" y="26.0" fill="#000" fill-opacity=".6">C</text>
<text x="105.1" y="30.6" fill="#000" fill-opacity=".6">C</text>
<text x="105.1" y="35.2" fill="#000" fill-opacity=".6">C</text>
<text x="105.1" y="39.8" fill="#111" fill-opacity=".9">C</text>
<text x="105.1" y="44.3" fill="#111" fill-opacity=".9">C</text>
<text x="105.1" y="48.9" fill="#111" fill-opacity=".9">C</text>
<text x="105.1" y="53.5" fill="#111" fill-opacity=".9">C</text>
<text x="105.1" y="58.1" fill="#111" fill-opacity=".9">C</text>
<text x="105.1" y="62.7" fill="#111" fill-opacity=".9">C</text>
<text x="105.1" y="67.3" fill="#000" fill-opacity=".6">C</text>
<text x="105.1" y="71.9" fill="#000" fill-opacity=".6">C</text>
<text x="105.1" y="76.4" fill="#000" fill-opacity=".6">C</text>
<text x="105.1" y="81.0" fill="#000" fill-opacity=".6">C</text>
<text x="105.1" y="85.6" fill="#000" fill-opacity=".6">C</text>
<text x="105.1" y="90.2" fill="#000" fill-opacity=".6">C</text>
<text x="105.1" y="94.8" fill="#000" fill-opacity=".6">C</text>
<text x="105.1" y="99.4" fill="#111" fill-opacity=".9">C</text>
<text x="105.1" y="104.0" fill="#000" fill-opacity=".6">C</text>
<text x="105.1" y="108.5" fill="#000" fill-opacity=".6">C</text>
<text x="105.1" y="113.1" fill="#000" fill-opacity=".6">C</text>
<text x="105.1" y="117.7" fill="#000" fill-opacity=".6">C</text>
<text x="105.1" y="122.3" fill="#000" fill-opacity=".6">C</text>
<text x="105.1" y="126.9" fill="#000" fill-opacity=".6">C</text>
<text x="105.1" y="131.5" fill="#000" fill-opacity=".6">C</text>
<text x="105.1" y="136.0" fill="#000" fill-opacity=".6">C</text>
<text x="105.1" y="140.6" fill="#000" fill-opacity=".6">C</text>
<text x="105.1" y="145.2" fill="#000" fill-opacity=".6">C</text>
<text x="105.1" y="149.8" fill="#000" fill-opacity=".6">C</text>
<text x="105.1" y="154.4" fill="#000" fill-opacity=".6">C</text>
<text x="105.1" y="159.0" fill="#000" fill-opacity=".6">C</text>
<text x="105.1" y="168.1" fill="#000" fill-opacity=".6">C</text>
<text x="105.1" y="172.7" fill="#000" fill-opacity=".6">C</text>
<text x="114.2" y="3.1" fill="#000" fill-opacity=".6">A</text>
<text x="114.2" y="7.7" fill="#000" fill-opacity=".6">A</text>
<text x="114.2" y="12.3" fill="#000" fill-opacity=".6">A</text>
<text x="114.2" y="16.8" fill="#000" fill-opacity=".6">A</text>
<text x="114.2" y="21.4" fill="#000" fill-opacity=".6">A</text>
<text x="114.2" y="26.0" fill="#000" fill-opacity=".6">A</text>
<text x="114.2" y="30.6" fill="#000" fill-opacity=".6">A</text>
<text x="114.2" y="35.2" fill="#000" fill-opacity=".6">A</text>
<text x="114.2" y="39.8" fill="#111" fill-opacity=".9">A</text>
<text x="114.2" y="44.3" fill="#111" fill-opacity=".9">A</text>
<text x="114.2" y="48.9" fill="#111" fill-opacity=".9">A</text>
<text x="114.2" y="53.5" fill="#111" fill-opacity=".9">A</text>
<text x="114.2" y="58.1" fill="#111" fill-opacity=".9">A</text>
<text x="114.2" y="62.7" fill="#111" fill-opacity=".9">A</text>
<text x="114.2" y="67.3" fill="#000" fill-opacity=".6">A</text>
<text x="114.2" y="71.9" fill="#000" fill-opacity=".6">A</text>
<text x="114.2" y="76.4" fill="#000" fill-opacity=".6">A</text>
<text x="114.2" y="81.0" fill="#000" fill-opacity=".6">A</text>
<text x="114.2" y="85.6" fill="#000" fill-opacity=".6">A</text>
<text x="114.2" y="90.2" fill="#000" fill-opacity=".6">A</text>
<text x="114.2" y="94.8" fill="#000" fill-opacity=".6">A</text>
<text x="114.2" y="99.4" fill="#111" fill-opacity=".9">A</text>
<text x="114.2" y="104.0" fill="#000" fill-opacity=".6">A</text>
<text x="114.2" y="108.5" fill="#000" fill-opacity=".6">A</text>
<text x="114.2" y="113.1" fill="#000" fill-opacity=".6">A</text>
<text x="114.2" y="117.7" fill="#000" fill-opacity=".6">A</text>
<text x="114.2" y="122.3" fill="#000" fill-opacity=".6">A</text>
<text x="114.2" y="126.9" fill="#000" fill-opacity=".6">A</text>
<text x="114.2" y="131.5" fill="#000" fill-opacity=".6">A</text>
<text x="114.2" y="136.0" fill="#000" fill-opacity=".6">A</text>
<text x="114.2" y="140.6" fill="#000" fill-opacity=".6">A</text>
<text x="114.2" y="145.2" fill="#000" fill-opacity=".6">A</text>
<text x="114.2" y="149.8" fill="#000" fill-opacity=".6">A</text>
<text x="114.2" y="154.4" fill="#000" fill-opacity=".6">A</text>
<text x="114.2" y="163.6" fill="#000" fill-opacity=".6">A</text>
<text x="114.2" y="168.1" fill="#000" fill-opacity=".6">A</text>
<text x="114.2" y="172.7" fill="#000" fill-opacity=".6">A</text>
<text x="123.4" y="3.1" fill="#000" fill-opacity=".6">C</text>
<text x="123.4" y="7.7" fill="#000" fill-opacity=".6">C</text>
<text x="123.4" y="12.3" fill="#000" fill-opacity=".6">C</text>
<text x="123.4" y="16.8" fill="#000" fill-opacity=".6">C</text>
<text x="123.4" y="21.4" fill="#000" fill-opacity=".6">C</text>
<text x="123.4" y="26.0" fill="#000" fill-opacity=".6">C</text>
<text x="123.4" y="30.6" fill="#000" fill-opacity=".6">C</text>
<text x="123.4" y="35.2" fill="#000" fill-opacity=".6">C</text>
<text x="123.4" y="39.8" fill="#111" fill-opacity=".9">C</text>
<text x="123.4" y="44.3" fill="#111" fill-opacity=".9">C</text>
<text x="123.4" y="48.9" fill="#111" fill-opacity=".9">C</text>
<text x="123.4" y="53.5" fill="#111" fill-opacity=".9">C</text>
<text x="123.4" y="58.1" fill="#111" fill-opacity=".9">C</text>
<text x="123.4" y="62.7" fill="#111" fill-opacity=".9">C</text>
<text x="123.4" y="67.3" fill="#000" fill-opacity=".6">C</text>
<text x="123.4" y="71.9" fill="#000" fill-opacity=".6">C</text>
<text x="123.4" y="76.4" fill="#000" fill-opacity=".6">C</text>
<text x="123.4" y="81.0" fill="#000" fill-opacity=".6">C</text>
<text x="123.4" y="85.6" fill="#000" fill-opacity=".6">C</text>
<text x="123.4" y="90.2" fill="#000" fill-opacity=".6">C</text>
<text x="123.4" y="94.8" fill="#000" fill-opacity=".6">C</text>
<text x="123.4" y="99.4" fill="#111" fill-opacity=".9">C</text>
<text x="123.4" y="104.0" fill="#000" fill-opacity=".6">C</text>
<text x="123.4" y="108.5" fill="#000" fill-opacity=".6">C</text>
<text x="123.4" y="113.1" fill="#000" fill-opacity=".6">C</text>
<text x="123.4" y="117.7" fill="#000" fill-opacity=".6">C</text>
<text x="123.4" y="122.3" fill="#000" fill-opacity=".6">C</text>
<text x="123.4" y="126.9" fill="#000" fill-opacity=".6">C</text>
<text x="123.4" y="131.5" fill="#000" fill-opacity=".6">C</text>
<text x="123.4" y="136.0" fill="#000" fill-opacity=".6">C</text>
<text x="123.4" y="140.6" fill="#000" fill-opacity=".6">C</text>
<text x="123.4" y="145.2" fill="#000" fill-opacity=".6">C</text>
<text x="123.4" y="149.8" fill="#000" fill-opacity=".6">C</text>
<text x="123.4" y="159.0" fill="#000" fill-opacity=".6">C</text>
<text x="123.4" y="163.6" fill="#000" fill-opacity=".6">C</text>
<text x="123.4" y="168.1" fill="#000" fill-opacity=".6">C</text>
<text x="123.4" y="172.7" fill="#000" fill-opacity=".6">C</text>
<text x="132.6" y="3.1" fill="#000" fill-opacity=".6">C</text>
<text x="132.6" y="7.7" fill="#000" fill-opacity=".6">C</text>
<text x="132.6" y="12.3" fill="#000" fill-opacity=".6">C</text>
<text x="132.6" y="16.8" fill="#000" fill-opacity=".6">C</text>
<text x="132.6" y="21.4" fill="#000" fill-opacity=".6">C</text>
<text x="132.6" y="26.0" fill="#000" fill-opacity=".6">C</text>
<text x="132.6" y="30.6" fill="#000" fill-opacity=".6">C</text>
<text x="132.6" y="35.2" fill="#000" fill-opacity=".6">C</text>
<text x="132.6" y="39.8" fill="#111" fill-opacity=".9">C</text>
<text x="132.6" y="44.3" fill="#111" fill-opacity=".9">C</text>
<text x="132.6" y="48.9" fill="#111" fill-opacity=".9">C</text>
<text x="132.6" y="53.5" fill="#111" fill-opacity=".9">C</text>
<text x="132.6" y="58.1" fill="#111" fill-opacity=".9">C</text>
<text x="132.6" y="62.7" fill="#111" fill-opacity=".9">C</text>
<text x="132.6" y="67.3" fill="#000" fill-opacity=".6">C</text>
<text x="132.6" y="71.9" fill="#000" fill-opacity=".6">C</text>
<text x="132.6" y="76.4" fill="#000" fill-opacity=".6">C</text>
<text x="132.6" y="81.0" fill="#000" fill-opacity=".6">C</text>
<text x="132.6" y="85.6" fill="#000" fill-opacity=".6">C</text>
<text x="132.6" y="90.2" fill="#000" fill-opacity=".6">C</text>
<text x="132.6" y="94.8" fill="#000" fill-opacity=".6">C</text>
<text x="132.6" y="99.4" fill="#111" fill-opacity=".9">C</text>
<text x="132.6" y="104.0" fill="#000" fill-opacity=".6">C</text>
<text x="132.6" y="108.5" fill="#000" fill-opacity=".6">C</text>
<text x="132.6" y="113.1" fill="#000" fill-opacity=".6">C</text>
<text x="132.6" y="117.7" fill="#000" fill-opacity=".6">C</text>
<text x="132.6" y="122.3" fill="#000" fill-opacity=".6">C</text>
<text x="132.6" y="126.9" fill="#000" fill-opacity=".6">C</text>
<text x="132.6" y="131.5" fill="#000" fill-opacity=".6">C</text>
<text x="132.6" y="136.0" fill="#000" fill-opacity=".6">C</text>
<text x="132.6" y="140.6" fill="#000" fill-opacity=".6">C</text>
<text x="132.6" y="145.2" fill="#000" fill-opacity=".6">C</text>
<text x="132.6" y="154.4" fill="#000" fill-opacity=".6">C</text>
<text x="132.6" y="159.0" fill="#000" fill-opacity=".6">C</text>
<text x="132.6" y="163.6" fill="#000" fill-opacity=".6">C</text>
<text x="132.6" y="168.1" fill="#000" fill-opacity=".6">C</text>
<text x="132.6" y="172.7" fill="#000" fill-opacity=".6">C</text>
<text x="141.7" y="3.1" fill="#000" fill-opacity=".6">A</text>
<text x="141.7" y="7.7" fill="#000" fill-opacity=".6">A</text>
<text x="141.7" y="12.3" fill="#000" fill-opacity=".6">A</text>
<text x="141.7" y="16.8" fill="#000" fill-opacity=".6">A</text>
<text x="141.7" y="21.4" fill="#000" fill-opacity=".6">A</text>
<text x="141.7" y="26.0" fill="#000" fill-opacity=".6">A</text>
<text x="141.7" y="30.6" fill="#000" fill-opacity=".6">A</text>
<text x="141.7" y="35.2" fill="#000" fill-opacity=".6">A</text>
<text x="141.7" y="39.8" fill="#111" fill-opacity=".9">A</text>
<text x="141.7" y="44.3" fill="#111" fill-opacity=".9">A</text>
<text x="141.7" y="48.9" fill="#111" fill-opacity=".9">A</text>
<text x="141.7" y="53.5" fill="#111" fill-opacity=".9">A</text>
<text x="141.7" y="58.1" fill="#111" fill-opacity=".9">A</text>
<text x="141.7" y="62.7" fill="#111" fill-opacity=".9">A</text>
<text x="141.7" y="67.3" fill="#000" fill-opacity=".6">A</text>
<text x="141.7" y="71.9" fill="#000" fill-opacity=".6">A</text>
<text x="141.7" y="76.4" fill="#000" fill-opacity=".6">A</text>
<text x="141.7" y="81.0" fill="#000" fill-opacity=".6">A</text>
<text x="141.7" y="85.6" fill="#000" fill-opacity=".6">A</text>
<text x="141.7" y="90.2" fill="#000" fill-opacity=".6">A</text>
<text x="141.7" y="94.8" fill="#000" fill-opacity=".6">A</text>
<text x="141.7" y="99.4" fill="#111" fill-opacity=".9">A</text>
<text x="141.7" y="104.0" fill="#000" fill-opacity=".6">A</text>
<text x="141.7" y="108.5" fill="#000" fill-opacity=".6">A</text>
<text x="141.7" y="113.1" fill="#000" fill-opacity=".6">A</text>
<text x="141.7" y="117.7" fill="#000" fill-opacity=".6">A</text>
<text x="141.7" y="122.3" fill="#000" fill-opacity=".6">A</text>
<text x="141.7" y="126.9" fill="#000" fill-opacity=".6">A</text>
<text x="141.7" y="131.5" fill="#000" fill-opacity=".6">A</text>
<text x="141.7" y="136.0" fill="#000" fill-opacity=".6">A</text>
<text x="141.7" y="140.6" fill="#000" fill-opacity=".6">A</text>
<text x="141.7" y="149.8" fill="#000" fill-opacity=".6">A</text>
<text x="141.7" y="154.4" fill="#000" fill-opacity=".6">A</text>
<text x="141.7" y="159.0" fill="#000" fill-opacity=".6">A</text>
<text x="141.7" y="163.6" fill="#000" fill-opacity=".6">A</text>
<text x="141.7" y="168.1" fill="#000" fill-opacity=".6">A</text>
<text x="141.7" y="172.7" fill="#000" fill-opacity=".6">A</text>
<text x="150.9" y="3.1" fill="#000" fill-opacity=".6">T</text>
<text x="150.9" y="7.7" fill="#000" fill-opacity=".6">T</text>
<text x="150.9" y="12.3" fill="#000" fill-opacity=".6">T</text>
<text x="150.9" y="16.8" fill="#000" fill-opacity=".6">T</text>
<text x="150.9" y="21.4" fill="#000" fill-opacity=".6">T</text>
<text x="150.9" y="26.0" fill="#000" fill-opacity=".6">T</text>
<text x="150.9" y="30.6" fill="#000" fill-opacity=".6">T</text>
<text x="150.9" y="35.2" fill="#000" fill-opacity=".6">T</text>
<text x="150.9" y="39.8" fill="#111" fill-opacity=".9">T</text>
<text x="150.9" y="44.3" fill="#111" fill-opacity=".9">T</text>
<text x="150.9" y="48.9" fill="#111" fill-opacity=".9">T</text>
<text x="150.9" y="53.5" fill="#111" fill-opacity=".9">T</text>
<text x="150.9" y="58.1" fill="#111" fill-opacity=".9">T</text>
<text x="150.9" y="62.7" fill="#111" fill-opacity=".9">T</text>
<text x="150.9" y="67.3" fill="#000" fill-opacity=".6">T</text>
<text x="150.9" y="71.9" fill="#000" fill-opacity=".6">T</text>
<text x="150.9" y="76.4" fill="#000" fill-opacity=".6">T</text>
<text x="150.9" y="81.0" fill="#000" fill-opacity=".6">T</text>
<text x="150.9" y="85.6" fill="#000" fill-opacity=".6">T</text>
<text x="150.9" y="90.2" fill="#000" fill-opacity=".6">T</text>
<text x="150.9" y="94.8" fill="#000" fill-opacity=".6">T</text>
<text x="150.9" y="99.4" fill="#111" fill-opacity=".9">T</text>
<text x="150.9" y="104.0" fill="#000" fill-opacity=".6">T</text>
<text x="150.9" y="108.5" fill="#000" fill-opacity=".6">T</text>
<text x="150.9" y="113.1" fill="#000" fill-opacity=".6">T</text>
<text x="150.9" y="117.7" fill="#000" fill-opacity=".6">T</text>
<text x="150.9" y="122.3" fill="#000" fill-opacity=".6">T</text>
<text x="150.9" y="126.9" fill="#000" fill-opacity=".6">T</text>
<text x="150.9" y="131.5" fill="#000" fill-opacity=".6">T</text>
<text x="150.9" y="136.0" fill="#000" fill-opacity=".6">T</text>
<text x="150.9" y="145.2" fill="#000" fill-opacity=".6">T</text>
<text x="150.9" y="149.8" fill="#000" fill-opacity=".6">T</text>
<text x="150.9" y="154.4" fill="#000" fill-opacity=".6">T</text>
<text x="150.9" y="159.0" fill="#000" fill-opacity=".6">T</text>
<text x="150.9" y="163.6" fill="#000" fill-opacity=".6">T</text>
<text x="150.9" y="168.1" fill="#000" fill-opacity=".6">T</text>
<text x="150.9" y="172.7" fill="#000" fill-opacity=".6">T</text>
<text x="160.1" y="3.1" fill="#000" fill-opacity=".6">T</text>
<text x="160.1" y="7.7" fill="#000" fill-opacity=".6">T</text>
<text x="160.1" y="12.3" fill="#000" fill-opacity=".6">T</text>
<text x="160.1" y="16.8" fill="#000" fill-opacity=".6">T</text>
<text x="160.1" y="21.4" fill="#000" fill-opacity=".6">T</text>
<text x="160.1" y="26.0" fill="#000" fill-opacity=".6">T</text>
<text x="160.1" y="30.6" fill="#000" fill-opacity=".6">T</text>
<text x="160.1" y="35.2" fill="#000" fill-opacity=".6">T</text>
<text x="160.1" y="39.8" fill="#111" fill-opacity=".9">T</text>
<text x="160.1" y="44.3" fill="#111" fill-opacity=".9">T</text>
<text x="160.1" y="48.9" fill="#111" fill-opacity=".9">T</text>
<text x="160.1" y="53.5" fill="#111" fill-opacity=".9">T</text>
<text x="160.1" y="58.1" fill="#111" fill-opacity=".9">T</text>
<text x="160.1" y="62.7" fill="#111" fill-opacity=".9">T</text>
<text x="160.1" y="67.3" fill="#000" fill-opacity=".6">T</text>
<text x="160.1" y="71.9" fill="#000" fill-opacity=".6">T</text>
<text x="160.1" y="76.4" fill="#000" fill-opacity=".6">T</text>
<text x="160.1" y="81.0" fill="#000" fill-opacity=".6">T</text>
<text x="160.1" y="85.6" fill="#000" fill-opacity=".6">T</text>
<text x="160.1" y="90.2" fill="#000" fill-opacity=".6">T</text>
<text x="160.1" y="94.8" fill="#000" fill-opacity=".6">T</text>
<text x="160.1" y="99.4" fill="#111" fill-opacity=".9">T</text>
<text x="160.1" y="104.0" fill="#000" fill-opacity=".6">T</text>
<text x="160.1" y="108.5" fill="#000" fill-opacity=".6">T</text>
<text x="160.1" y="113.1" fill="#000" fill-opacity=".6">T</text>
<text x="160.1" y="117.7" fill="#000" fill-opacity=".6">T</text>
<text x="160.1" y="122.3" fill="#000" fill-opacity=".6">T</text>
<text x="160.1" y="126.9" fill="#000" fill-opacity=".6">T</text>
<text x="160.1" y="131.5" fill="#000" fill-opacity=".6">T</text>
<text x="160.1" y="145.2" fill="#000" fill-opacity=".6">T</text>
<text x="160.1" y="149.8" fill="#000" fill-opacity=".6">T</text>
<text x="160.1" y="154.4" fill="#000" fill-opacity=".6">T</text>
<text x="160.1" y="159.0" fill="#000" fill-opacity=".6">T</text>
<text x="160.1" y="163.6" fill="#000" fill-opacity=".6">T</text>
<text x="160.1" y="168.1" fill="#000" fill-opacity=".6">T</text>
<text x="160.1" y="172.7" fill="#000" fill-opacity=".6">T</text>
<text x="169.2" y="3.1" fill="#000" fill-opacity=".6">A</text>
<text x="169.2" y="7.7" fill="#000" fill-opacity=".6">A</text>
<text x="169.2" y="12.3" fill="#000" fill-opacity=".6">A</text>
<text x="169.2" y="16.8" fill="#000" fill-opacity=".6">A</text>
<text x="169.2" y="21.4" fill="#000" fill-opacity=".6">A</text>
<text x="169.2" y="26.0" fill="#000" fill-opacity=".6">A</text>
<text x="169.2" y="30.6" fill="#000" fill-opacity=".6">A</text>
<text x="169.2" y="35.2" fill="#000" fill-opacity=".6">A</text>
<text x="169.2" y="39.8" fill="#111" fill-opacity=".9">A</text>
<text x="169.2" y="44.3" fill="#111" fill-opacity=".9">A</text>
<text x="169.2" y="48.9" fill="#111" fill-opacity=".9">A</text>
<text x="169.2" y="53.5" fill="#111" fill-opacity=".9">A</text>
<text x="169.2" y="58.1" fill="#111" fill-opacity=".9">A</text>
<text x="169.2" y="62.7" fill="#111" fill-opacity=".9">A</text>
<text x="169.2" y="67.3" fill="#000" fill-opacity=".6">A</text>
<text x="169.2" y="71.9" fill="#000" fill-opacity=".6">A</text>
<text x="169.2" y="76.4" fill="#000" fill-opacity=".6">A</text>
<text x="169.2" y="81.0" fill="#000" fill-opacity=".6">A</text>
<text x="169.2" y="85.6" fill="#000" fill-opacity=".6">A</text>
<text x="169.2" y="90.2" fill="#000" fill-opacity=".6">A</text>
<text x="169.2" y="94.8" fill="#000" fill-opacity=".6">A</text>
<text x="169.2" y="99.4" fill="#111" fill-opacity=".9">A</text>
<text x="169.2" y="104.0" fill="#000" fill-opacity=".6">A</text>
<text x="169.2" y="108.5" fill="#000" fill-opacity=".6">A</text>
<text x="169.2" y="113.1" fill="#000" fill-opacity=".6">A</text>
<text x="169.2" y="117.7" fill="#000" fill-opacity=".6">A</text>
<text x="169.2" y="122.3" fill="#000" fill-opacity=".6">A</text>
<text x="169.2" y="126.9" fill="#000" fill-opacity=".6">A</text>
<text x="169.2" y="145.2" fill="#000" fill-opacity=".6">A</text>
<text x="169.2" y="149.8" fill="#000" fill-opacity=".6">A</text>
<text x="169.2" y="154.4" fill="#000" fill-opacity=".6">A</text>
<text x="169.2" y="159.0" fill="#000" fill-opacity=".6">A</text>
<text x="169.2" y="163.6" fill="#000" fill-opacity=".6">A</text>
<text x="169.2" y="168.1" fill="#000" fill-opacity=".6">A</text>
<text x="169.2" y="172.7" fill="#000" fill-opacity=".6">A</text>
<text x="178.4" y="3.1" fill="#000" fill-opacity=".6">C</text>
<text x="178.4" y="7.7" fill="#000" fill-opacity=".6">C</text>
<text x="178.4" y="12.3" fill="#000" fill-opacity=".6">C</text>
<text x="178.4" y="16.8" fill="#000" fill-opacity=".6">C</text>
<text x="178.4" y="21.4" fill="#000" fill-opacity=".6">C</text>
<text x="178.4" y="26.0" fill="#000" fill-opacity=".6">C</text>
<text x="178.4" y="30.6" fill="#000" fill-opacity=".6">C</text>
<text x="178.4" y="35.2" fill="#000" fill-opacity=".6">C</text>
<text x="178.4" y="39.8" fill="#111" fill-opacity=".9">C</text>
<text x="178.4" y="44.3" fill="#111" fill-opacity=".9">C</text>
<text x="178.4" y="48.9" fill="#111" fill-opacity=".9">C</text>
<text x="178.4" y="53.5" fill="#111" fill-opacity=".9">C</text>
<text x="178.4" y="58.1" fill="#111" fill-opacity=".9">C</text>
<text x="178.4" y="62.7" fill="#111" fill-opacity=".9">C</text>
<text x="178.4" y="67.3" fill="#000" fill-opacity=".6">C</text>
<text x="178.4" y="71.9" fill="#000" fill-opacity=".6">C</text>
<text x="178.4" y="76.4" fill="#000" fill-opacity=".6">C</text>
<text x="178.4" y="81.0" fill="#000" fill-opacity=".6">C</text>
<text x="178.4" y="85.6" fill="#000" fill-opacity=".6">C</text>
<text x="178.4" y="90.2" fill="#000" fill-opacity=".6">C</text>
<text x="178.4" y="94.8" fill="#000" fill-opacity=".6">C</text>
<text x="178.4" y="99.4" fill="#111" fill-opacity=".9">C</text>
<text x="178.4" y="104.0" fill="#000" fill-opacity=".6">C</text>
<text x="178.4" y="108.5" fill="#000" fill-opacity=".6">C</text>
<text x="178.4" y="113.1" fill="#000" fill-opacity=".6">C</text>
<text x="178.4" y="117.7" fill="#000" fill-opacity=".6">C</text>
<text x="178.4" y="122.3" fill="#000" fill-opacity=".6">C</text>
<text x="178.4" y="145.2" fill="#000" fill-opacity=".6">C</text>
<text x="178.4" y="149.8" fill="#000" fill-opacity=".6">C</text>
<text x="178.4" y="154.4" fill="#000" fill-opacity=".6">C</text>
<text x="178.4" y="159.0" fill="#000" fill-opacity=".6">C</text>
<text x="178.4" y="163.6" fill="#000" fill-opacity=".6">C</text>
<text x="178.4" y="168.1" fill="#000" fill-opacity=".6">C</text>
<text x="178.4" y="172.7" fill="#000" fill-opacity=".6">C</text>
<text x="187.6" y="3.1" fill="#000" fill-opacity=".6">C</text>
<text x="187.6" y="7.7" fill="#000" fill-opacity=".6">C</text>
<text x="187.6" y="12.3" fill="#000" fill-opacity=".6">C</text>
<text x="187.6" y="16.8" fill="#000" fill-opacity=".6">C</text>
<text x="187.6" y="21.4" fill="#000" fill-opacity=".6">C</text>
<text x="187.6" y="26.0" fill="#000" fill-opacity=".6">C</text>
<text x="187.6" y="30.6" fill="#000" fill-opacity=".6">C</text>
<text x="187.6" y="35.2" fill="#000" fill-opacity=".6">C</text>
<text x="187.6" y="39.8" fill="#111" fill-opacity=".9">C</text>
<text x="187.6" y="44.3" fill="#111" fill-opacity=".9">C</text>
<text x="187.6" y="48.9" fill="#111" fill-opacity=".9">C</text>
<text x="187.6" y="53.5" fill="#111" fill-opacity=".9">C</text>
<text x="187.6" y="58.1" fill="#111" fill-opacity=".9">C</text>
<text x="187.6" y="62.7" fill="#111" fill-opacity=".9">C</text>
<text x="187.6" y="67.3" fill="#000" fill-opacity=".6">C</text>
<text x="187.6" y="71.9" fill="#000" fill-opacity=".6">C</text>
<text x="187.6" y="76.4" fill="#000" fill-opacity=".6">C</text>
<text x="187.6" y="81.0" fill="#000" fill-opacity=".6">C</text>
<text x="187.6" y="85.6" fill="#000" fill-opacity=".6">C</text>
<text x="187.6" y="90.2" fill="#000" fill-opacity=".6">C</text>
<text x="187.6" y="94.8" fill="#000" fill-opacity=".6">C</text>
<text x="187.6" y="99.4" fill="#111" fill-opacity=".9">C</text>
<text x="187.6" y="104.0" fill="#000" fill-opacity=".6">C</text>
<text x="187.6" y="108.5" fill="#000" fill-opacity=".6">C</text>
<text x="187.6" y="113.1" fill="#000" fill-opacity=".6">C</text>
<text x="187.6" y="117.7" fill="#000" fill-opacity=".6">C</text>
<text x="187.6" y="145.2" fill="#000" fill-opacity=".6">C</text>
<text x="187.6" y="149.8" fill="#000" fill-opacity=".6">C</text>
<text x="187.6" y="154.4" fill="#000" fill-opacity=".6">C</text>
<text x="187.6" y="159.0" fill="#000" fill-opacity=".6">C</text>
<text x="187.6" y="163.6" fill="#000" fill-opacity=".6">C</text>
<text x="187.6" y="168.1" fill="#000" fill-opacity=".6">C</text>
<text x="187.6" y="172.7" fill="#000" fill-opacity=".6">C</text>
<text x="196.8" y="3.1" fill="#000" fill-opacity=".6">A</text>
<text x="196.8" y="7.7" fill="#000" fill-opacity=".6">A</text>
<text x="196.8" y="12.3" fill="#000" fill-opacity=".6">A</text>
<text x="196.8" y="16.8" fill="#000" fill-opacity=".6">A</text>
<text x="196.8" y="21.4" fill="#000" fill-opacity=".6">A</text>
<text x="196.8" y="26.0" fill="#000" fill-opacity=".6">A</text>
<text x="196.8" y="30.6" fill="#000" fill-opacity=".6">A</text>
<text x="196.8" y="35.2" fill="#000" fill-opacity=".6">A</text>
<text x="196.8" y="39.8" fill="#111" fill-opacity=".9">A</text>
<text x="196.8" y="44.3" fill="#111" fill-opacity=".9">A</text>
<text x="196.8" y="48.9" fill="#111" fill-opacity=".9">A</text>
<text x="196.8" y="53.5" fill="#111" fill-opacity=".9">A</text>
<text x="196.8" y="58.1" fill="#111" fill-opacity=".9">A</text>
<text x="196.8" y="62.7" fill="#111" fill-opacity=".9">A</text>
<text x="196.8" y="67.3" fill="#000" fill-opacity=".6">A</text>
<text x="196.8" y="71.9" fill="#000" fill-opacity=".6">A</text>
<text x="196.8" y="76.4" fill="#000" fill-opacity=".6">A</text>
<text x="196.8" y="81.0" fill="#000" fill-opacity=".6">A</text>
<text x="196.8" y="85.6" fill="#000" fill-opacity=".6">A</text>
<text x="196.8" y="90.2" fill="#000" fill-opacity=".6">A</text>
<text x="196.8" y="94.8" fill="#000" fill-opacity=".6">A</text>
<text x="196.8" y="99.4" fill="#111" fill-opacity=".9">A</text>
<text x="196.8" y="104.0" fill="#000" fill-opacity=".6">A</text>
<text x="196.8" y="108.5" fill="#000" fill-opacity=".6">A</text>
<text x="196.8" y="113.1" fill="#000" fill-opacity=".6">A</text>
<text x="196.8" y="145.2" fill="#000" fill-opacity=".6">A</text>
<text x="196.8" y="149.8" fill="#000" fill-opacity=".6">A</text>
<text x="196.8" y="154.4" fill="#000" fill-opacity=".6">A</text>
<text x="196.8" y="159.0" fill="#000" fill-opacity=".6">A</text>
<text x="196.8" y="163.6" fill="#000" fill-opacity=".6">A</text>
<text x="196.8" y="168.1" fill="#000" fill-opacity=".6">A</text>
<text x="196.8" y="172.7" fill="#000" fill-opacity=".6">A</text>
<text x="204.8" y="3.1" fill="#000" fill-opacity=".6">C</text>
<text x="204.8" y="7.7" fill="#000" fill-opacity=".6">C</text>
<text x="204.8" y="12.3" fill="#000" fill-opacity=".6">C</text>
<text x="204.8" y="16.8" fill="#000" fill-opacity=".6">C</text>
<text x="204.8" y="21.4" fill="#000" fill-opacity=".6">C</text>
<text x="204.8" y="26.0" fill="#000" fill-opacity=".6">C</text>
<text x="204.8" y="30.6" fill="#000" fill-opacity=".6">C</text>
<text x="204.8" y="35.2" fill="#000" fill-opacity=".6">C</text>
<text x="204.8" y="39.8" fill="#111" fill-opacity=".9">C</text>
<text x="204.8" y="44.3" fill="#111" fill-opacity=".9">C</text>
<text x="204.8" y="48.9" fill="#111" fill-opacity=".9">C</text>
<text x="204.8" y="53.5" fill="#111" fill-opacity=".9">C</text>
<text x="204.8" y="58.1" fill="#111" fill-opacity=".9">C</text>
<text x="204.8" y="62.7" fill="#111" fill-opacity=".9">C</text>
<text x="204.8" y="67.3" fill="#000" fill-opacity=".6">C</text>
<text x="204.8" y="71.9" fill="#000" fill-opacity=".6">C</text>
<text x="204.8" y="76.4" fill="#000" fill-opacity=".6">C</text>
<text x="204.8" y="81.0" fill="#000" fill-opacity=".6">C</text>
<text x="204.8" y="85.6" fill="#000" fill-opacity=".6">C</text>
<text x="204.8" y="90.2" fill="#000" fill-opacity=".6">C</text>
<text x="204.8" y="94.8" fill="#000" fill-opacity=".6">C</text>
<text x="204.8" y="99.4" fill="#111" fill-opacity=".9">C</text>
<text x="204.8" y="104.0" fill="#000" fill-opacity=".6">C</text>
<text x="204.8" y="108.5" fill="#000" fill-opacity=".6">C</text>
<text x="204.8" y="145.2" fill="#000" fill-opacity=".6">C</text>
<text x="204.8" y="149.8" fill="#000" fill-opacity=".6">C</text>
<text x="204.8" y="154.4" fill="#000" fill-opacity=".6">C</text>
<text x="204.8" y="159.0" fill="#000" fill-opacity=".6">C</text>
<text x="204.8" y="163.6" fill="#000" fill-opacity=".6">C</text>
<text x="204.8" y="168.1" fill="#000" fill-opacity=".6">C</text>
<text x="204.8" y="172.7" fill="#000" fill-opacity=".6">C</text>
<text x="217.3" y="3.1" fill="#000" fill-opacity=".6">A</text>
<text x="217.3" y="7.7" fill="#000" fill-opacity=".6">A</text>
<text x="217.3" y="12.3" fill="#000" fill-opacity=".6">A</text>
<text x="217.3" y="16.8" fill="#000" fill-opacity=".6">A</text>
<text x="217.3" y="21.4" fill="#000" fill-opacity=".6">A</text>
<text x="217.3" y="26.0" fill="#000" fill-opacity=".6">A</text>
<text x="217.3" y="30.6" fill="#000" fill-opacity=".6">A</text>
<text x="217.3" y="35.2" fill="#000" fill-opacity=".6">A</text>
<text x="217.3" y="39.6" fill="#e03030" font-size="3.3" font-weight="normal">C</text>
<text x="217.3" y="44.1" fill="#e03030" font-size="3.3" font-weight="normal">C</text>
<text x="217.3" y="48.7" fill="#e03030" font-size="3.3" font-weight="normal">C</text>
<text x="217.3" y="53.3" fill="#e03030" font-size="3.3" font-weight="normal">C</text>
<text x="217.3" y="57.9" fill="#e03030" font-size="3.3" font-weight="normal">C</text>
<text x="217.3" y="62.5" fill="#e03030" font-size="3.3" font-weight="normal">C</text>
<text x="217.3" y="90.2" fill="#000" fill-opacity=".6">A</text>
<text x="217.3" y="94.8" fill="#000" fill-opacity=".6">A</text>
<text x="217.3" y="99.4" fill="#111" fill-opacity=".9">A</text>
<text x="217.3" y="113.1" fill="#111" fill-opacity=".9">A</text>
<text x="217.3" y="117.7" fill="#111" fill-opacity=".9">A</text>
<text x="217.3" y="122.3" fill="#111" fill-opacity=".9">A</text>
<text x="217.3" y="126.9" fill="#111" fill-opacity=".9">A</text>
<text x="217.3" y="131.5" fill="#111" fill-opacity=".9">A</text>
<text x="217.3" y="136.0" fill="#111" fill-opacity=".9">A</text>
<text x="217.3" y="140.6" fill="#000" fill-opacity=".6">A</text>
<text x="217.3" y="145.2" fill="#000" fill-opacity=".6">A</text>
<text x="217.3" y="149.8" fill="#000" fill-opacity=".6">A</text>
<text x="217.3" y="154.4" fill="#000" fill-opacity=".6">A</text>
<text x="217.3" y="159.0" fill="#000" fill-opacity=".6">A</text>
<text x="217.3" y="163.6" fill="#000" fill-opacity=".6">A</text>
<text x="217.3" y="168.1" fill="#000" fill-opacity=".6">A</text>
<text x="217.3" y="172.7" fill="#000" fill-opacity=".6">A</text>
<text x="225.3" y="3.1" fill="#000" fill-opacity=".6">A</text>
<text x="225.3" y="7.7" fill="#000" fill-opacity=".6">A</text>
<text x="225.3" y="12.3" fill="#000" fill-opacity=".6">A</text>
<text x="225.3" y="16.8" fill="#000" fill-opacity=".6">A</text>
<text x="225.3" y="21.4" fill="#000" fill-opacity=".6">A</text>
<text x="225.3" y="26.0" fill="#000" fill-opacity=".6">A</text>
<text x="225.3" y="30.6" fill="#000" fill-opacity=".6">A</text>
<text x="225.3" y="35.2" fill="#000" fill-opacity=".6">A</text>
<text x="225.3" y="39.6" fill="#e03030" font-size="3.3" font-weight="normal">C</text>
<text x="225.3" y="44.1" fill="#e03030" font-size="3.3" font-weight="normal">C</text>
<text x="225.3" y="48.7" fill="#e03030" font-size="3.3" font-weight="normal">C</text>
<text x="225.3" y="53.3" fill="#e03030" font-size="3.3" font-weight="normal">C</text>
<text x="225.3" y="57.9" fill="#e03030" font-size="3.3" font-weight="normal">C</text>
<text x="225.3" y="67.3" fill="#000" fill-opacity=".6">A</text>
<text x="225.3" y="90.2" fill="#000" fill-opacity=".6">A</text>
<text x="225.3" y="94.8" fill="#000" fill-opacity=".6">A</text>
<text x="225.3" y="99.4" fill="#111" fill-opacity=".9">A</text>
<text x="225.3" y="113.1" fill="#111" fill-opacity=".9">A</text>
<text x="225.3" y="117.7" fill="#111" fill-opacity=".9">A</text>
<text x="225.3" y="122.3" fill="#111" fill-opacity=".9">A</text>
<text x="225.3" y="126.9" fill="#111" fill-opacity=".9">A</text>
<text x="225.3" y="131.5" fill="#111" fill-opacity=".9">A</text>
<text x="225.3" y="136.0" fill="#111" fill-opacity=".9">A</text>
<text x="225.3" y="140.6" fill="#000" fill-opacity=".6">A</text>
<text x="225.3" y="145.2" fill="#000" fill-opacity=".6">A</text>
<text x="225.3" y="149.8" fill="#000" fill-opacity=".6">A</text>
<text x="225.3" y="154.4" fill="#000" fill-opacity=".6">A</text>
<text x="225.3" y="159.0" fill="#000" fill-opacity=".6">A</text>
<text x="225.3" y="163.6" fill="#000" fill-opacity=".6">A</text>
<text x="225.3" y="168.1" fill="#000" fill-opacity=".6">A</text>
<text x="225.3" y="172.7" fill="#000" fill-opacity=".6">A</text>
<text x="234.5" y="3.1" fill="#000" fill-opacity=".6">C</text>
<text x="234.5" y="7.7" fill="#000" fill-opacity=".6">C</text>
<text x="234.5" y="12.3" fill="#000" fill-opacity=".6">C</text>
<text x="234.5" y="16.8" fill="#000" fill-opacity=".6">C</text>
<text x="234.5" y="21.4" fill="#000" fill-opacity=".6">C</text>
<text x="234.5" y="26.0" fill="#000" fill-opacity=".6">C</text>
<text x="234.5" y="30.6" fill="#000" fill-opacity=".6">C</text>
<text x="234.5" y="35.2" fill="#000" fill-opacity=".6">C</text>
<text x="234.5" y="39.8" fill="#111" fill-opacity=".9">C</text>
<text x="234.5" y="44.3" fill="#111" fill-opacity=".9">C</text>
<text x="234.5" y="48.9" fill="#111" fill-opacity=".9">C</text>
<text x="234.5" y="53.5" fill="#111" fill-opacity=".9">C</text>
<text x="234.5" y="58.1" fill="#111" fill-opacity=".9">C</text>
<text x="234.5" y="62.7" fill="#000" fill-opacity=".6">C</text>
<text x="234.5" y="67.3" fill="#000" fill-opacity=".6">C</text>
<text x="234.5" y="90.2" fill="#000" fill-opacity=".6">C</text>
<text x="234.5" y="94.8" fill="#000" fill-opacity=".6">C</text>
<text x="234.5" y="99.4" fill="#111" fill-opacity=".9">C</text>
<text x="234.5" y="113.1" fill="#111" fill-opacity=".9">C</text>
<text x="234.5" y="117.7" fill="#111" fill-opacity=".9">C</text>
<text x="234.5" y="122.3" fill="#111" fill-opacity=".9">C</text>
<text x="234.5" y="126.9" fill="#111" fill-opacity=".9">C</text>
<text x="234.5" y="131.5" fill="#111" fill-opacity=".9">C</text>
<text x="234.5" y="136.0" fill="#111" fill-opacity=".9">C</text>
<text x="234.5" y="140.6" fill="#000" fill-opacity=".6">C</text>
<text x="234.5" y="145.2" fill="#000" fill-opacity=".6">C</text>
<text x="234.5" y="149.8" fill="#000" fill-opacity=".6">C</text>
<text x="234.5" y="154.4" fill="#000" fill-opacity=".6">C</text>
<text x="234.5" y="159.0" fill="#000" fill-opacity=".6">C</text>
<text x="234.5" y="163.6" fill="#000" fill-opacity=".6">C</text>
<text x="234.5" y="168.1" fill="#000" fill-opacity=".6">C</text>
<text x="234.5" y="172.7" fill="#000" fill-opacity=".6">C</text>
<text x="243.7" y="3.1" fill="#000" fill-opacity=".6">G</text>
<text x="243.7" y="7.7" fill="#000" fill-opacity=".6">G</text>
<text x="243.7" y="12.3" fill="#000" fill-opacity=".6">G</text>
<text x="243.7" y="16.8" fill="#000" fill-opacity=".6">G</text>
<text x="243.7" y="21.4" fill="#000" fill-opacity=".6">G</text>
<text x="243.7" y="26.0" fill="#000" fill-opacity=".6">G</text>
<text x="243.7" y="30.6" fill="#000" fill-opacity=".6">G</text>
<text x="243.7" y="35.2" fill="#000" fill-opacity=".6">G</text>
<text x="243.7" y="39.8" fill="#111" fill-opacity=".9">G</text>
<text x="243.7" y="44.3" fill="#111" fill-opacity=".9">G</text>
<text x="243.7" y="48.9" fill="#111" fill-opacity=".9">G</text>
<text x="243.7" y="53.5" fill="#111" fill-opacity=".9">G</text>
<text x="243.7" y="62.7" fill="#000" fill-opacity=".6">G</text>
<text x="243.7" y="67.3" fill="#000" fill-opacity=".6">G</text>
<text x="243.7" y="71.9" fill="#000" fill-opacity=".6">G</text>
<text x="243.7" y="90.2" fill="#000" fill-opacity=".6">G</text>
<text x="243.7" y="94.8" fill="#000" fill-opacity=".6">G</text>
<text x="243.7" y="99.4" fill="#111" fill-opacity=".9">G</text>
<text x="243.7" y="113.1" fill="#111" fill-opacity=".9">G</text>
<text x="243.7" y="117.7" fill="#111" fill-opacity=".9">G</text>
<text x="243.7" y="122.3" fill="#111" fill-opacity=".9">G</text>
<text x="243.7" y="126.9" fill="#111" fill-opacity=".9">G</text>
<text x="243.7" y="131.5" fill="#111" fill-opacity=".9">G</text>
<text x="243.7" y="136.0" fill="#111" fill-opacity=".9">G</text>
<text x="243.7" y="140.6" fill="#000" fill-opacity=".6">G</text>
<text x="243.7" y="145.2" fill="#000" fill-opacity=".6">G</text>
<text x="243.7" y="149.8" fill="#000" fill-opacity=".6">G</text>
<text x="243.7" y="154.4" fill="#000" fill-opacity=".6">G</text>
<text x="243.7" y="159.0" fill="#000" fill-opacity=".6">G</text>
<text x="243.7" y="163.6" fill="#000" fill-opacity=".6">G</text>
<text x="243.7" y="168.1" fill="#000" fill-opacity=".6">G</text>
<text x="243.7" y="172.7" fill="#000" fill-opacity=".6">G</text>
<text x="252.9" y="3.1" fill="#000" fill-opacity=".6">G</text>
<text x="252.9" y="7.7" fill="#000" fill-opacity=".6">G</text>
<text x="252.9" y="12.3" fill="#000" fill-opacity=".6">G</text>
<text x="252.9" y="16.8" fill="#000" fill-opacity=".6">G</text>
<text x="252.9" y="21.4" fill="#000" fill-opacity=".6">G</text>
<text x="252.9" y="26.0" fill="#000" fill-opacity=".6">G</text>
<text x="252.9" y="30.6" fill="#000" fill-opacity=".6">G</text>
<text x="252.9" y="35.2" fill="#000" fill-opacity=".6">G</text>
<text x="252.9" y="39.8" fill="#111" fill-opacity=".9">G</text>
<text x="252.9" y="44.3" fill="#111" fill-opacity=".9">G</text>
<text x="252.9" y="48.9" fill="#111" fill-opacity=".9">G</text>
<text x="252.9" y="58.1" fill="#000" fill-opacity=".6">G</text>
<text x="252.9" y="62.7" fill="#000" fill-opacity=".6">G</text>
<text x="252.9" y="67.3" fill="#000" fill-opacity=".6">G</text>
<text x="252.9" y="71.9" fill="#000" fill-opacity=".6">G</text>
<text x="252.9" y="90.2" fill="#000" fill-opacity=".6">G</text>
<text x="252.9" y="94.8" fill="#000" fill-opacity=".6">G</text>
<text x="252.9" y="99.4" fill="#111" fill-opacity=".9">G</text>
<text x="252.9" y="113.1" fill="#111" fill-opacity=".9">G</text>
<text x="252.9" y="117.7" fill="#111" fill-opacity=".9">G</text>
<text x="252.9" y="122.3" fill="#111" fill-opacity=".9">G</text>
<text x="252.9" y="126.9" fill="#111" fill-opacity=".9">G</text>
<text x="252.9" y="131.5" fill="#111" fill-opacity=".9">G</text>
<text x="252.9" y="136.0" fill="#111" fill-opacity=".9">G</text>
<text x="252.9" y="140.6" fill="#000" fill-opacity=".6">G</text>
<text x="252.9" y="145.2" fill="#000" fill-opacity=".6">G</text>
<text x="252.9" y="149.8" fill="#000" fill-opacity=".6">G</text>
<text x="252.9" y="154.4" fill="#000" fill-opacity=".6">G</text>
<text x="252.9" y="159.0" fill="#000" fill-opacity=".6">G</text>
<text x="252.9" y="163.6" fill="#000" fill-opacity=".6">G</text>
<text x="252.9" y="168.1" fill="#000" fill-opacity=".6">G</text>
<text x="252.9" y="172.7" fill="#000" fill-opacity=".6">G</text>
<text x="262.1" y="3.1" fill="#000" fill-opacity=".6">T</text>
<text x="262.1" y="7.7" fill="#000" fill-opacity=".6">T</text>
<text x="262.1" y="12.3" fill="#000" fill-opacity=".6">T</text>
<text x="262.1" y="16.8" fill="#000" fill-opacity=".6">T</text>
<text x="262.1" y="21.4" fill="#000" fill-opacity=".6">T</text>
<text x="262.1" y="26.0" fill="#000" fill-opacity=".6">T</text>
<text x="262.1" y="30.6" fill="#000" fill-opacity=".6">T</text>
<text x="262.1" y="35.2" fill="#000" fill-opacity=".6">T</text>
<text x="262.1" y="39.6" fill="#e03030" font-size="3.3" font-weight="normal">-</text>
<text x="262.1" y="44.1" fill="#e03030" font-size="3.3" font-weight="normal">-</text>
<text x="262.1" y="53.5" fill="#000" fill-opacity=".6">T</text>
<text x="262.1" y="58.1" fill="#000" fill-opacity=".6">T</text>
<text x="262.1" y="62.7" fill="#000" fill-opacity=".6">T</text>
<text x="262.1" y="67.3" fill="#000" fill-opacity=".6">T</text>
<text x="262.1" y="71.9" fill="#000" fill-opacity=".6">T</text>
<text x="262.1" y="90.2" fill="#000" fill-opacity=".6">T</text>
<text x="262.1" y="94.8" fill="#000" fill-opacity=".6">T</text>
<text x="262.1" y="99.4" fill="#111" fill-opacity=".9">T</text>
<text x="262.1" y="113.1" fill="#111" fill-opacity=".9">T</text>
<text x="262.1" y="117.7" fill="#111" fill-opacity=".9">T</text>
<text x="262.1" y="122.3" fill="#111" fill-opacity=".9">T</text>
<text x="262.1" y="126.9" fill="#111" fill-opacity=".9">T</text>
<text x="262.1" y="131.5" fill="#111" fill-opacity=".9">T</text>
<text x="262.1" y="136.0" fill="#111" fill-opacity=".9">T</text>
<text x="262.1" y="140.6" fill="#000" fill-opacity=".6">T</text>
<text x="262.1" y="145.2" fill="#000" fill-opacity=".6">T</text>
<text x="262.1" y="149.8" fill="#000" fill-opacity=".6">T</text>
<text x="262.1" y="154.4" fill="#000" fill-opacity=".6">T</text>
<text x="262.1" y="159.0" fill="#000" fill-opacity=".6">T</text>
<text x="262.1" y="163.6" fill="#000" fill-opacity=".6">T</text>
<text x="262.1" y="168.1" fill="#000" fill-opacity=".6">T</text>
<text x="262.1" y="172.7" fill="#000" fill-opacity=".6">T</text>
<text x="271.3" y="3.1" fill="#000" fill-opacity=".6">G</text>
<text x="271.3" y="7.7" fill="#000" fill-opacity=".6">G</text>
<text x="271.3" y="12.3" fill="#000" fill-opacity=".6">G</text>
<text x="271.3" y="16.8" fill="#000" fill-opacity=".6">G</text>
<text x="271.3" y="21.4" fill="#000" fill-opacity=".6">G</text>
<text x="271.3" y="26.0" fill="#000" fill-opacity=".6">G</text>
<text x="271.3" y="30.6" fill="#000" fill-opacity=".6">G</text>
<text x="271.3" y="35.2" fill="#000" fill-opacity=".6">G</text>
<text x="271.3" y="39.8" fill="#111" fill-opacity=".9">G</text>
<text x="271.3" y="44.3" fill="#111" fill-opacity=".9">G</text>
<text x="271.3" y="48.9" fill="#000" fill-opacity=".6">G</text>
<text x="271.3" y="53.5" fill="#000" fill-opacity=".6">G</text>
<text x="271.3" y="58.1" fill="#000" fill-opacity=".6">G</text>
<text x="271.3" y="62.7" fill="#000" fill-opacity=".6">G</text>
<text x="271.3" y="67.3" fill="#000" fill-opacity=".6">G</text>
<text x="271.3" y="71.9" fill="#000" fill-opacity=".6">G</text>
<text x="271.3" y="90.2" fill="#000" fill-opacity=".6">G</text>
<text x="271.3" y="94.8" fill="#000" fill-opacity=".6">G</text>
<text x="271.3" y="99.4" fill="#111" fill-opacity=".9">G</text>
<text x="271.3" y="113.1" fill="#111" fill-opacity=".9">G</text>
<text x="271.3" y="117.7" fill="#111" fill-opacity=".9">G</text>
<text x="271.3" y="122.3" fill="#111" fill-opacity=".9">G</text>
<text x="271.3" y="126.9" fill="#111" fill-opacity=".9">G</text>
<text x="271.3" y="131.5" fill="#111" fill-opacity=".9">G</text>
<text x="271.3" y="136.0" fill="#111" fill-opacity=".9">G</text>
<text x="271.3" y="140.6" fill="#000" fill-opacity=".6">G</text>
<text x="271.3" y="145.2" fill="#000" fill-opacity=".6">G</text>
<text x="271.3" y="149.8" fill="#000" fill-opacity=".6">G</text>
<text x="271.3" y="154.4" fill="#000" fill-opacity=".6">G</text>
<text x="271.3" y="159.0" fill="#000" fill-opacity=".6">G</text>
<text x="271.3" y="163.6" fill="#000" fill-opacity=".6">G</text>
<text x="271.3" y="168.1" fill="#000" fill-opacity=".6">G</text>
<text x="271.3" y="172.7" fill="#000" fill-opacity=".6">G</text>
<text x="280.5" y="3.1" fill="#000" fill-opacity=".6">C</text>
<text x="280.5" y="7.7" fill="#000" fill-opacity=".6">C</text>
<text x="280.5" y="12.3" fill="#000" fill-opacity=".6">C</text>
<text x="280.5" y="16.8" fill="#000" fill-opacity=".6">C</text>
<text x="280.5" y="21.4" fill="#000" fill-opacity=".6">C</text>
<text x="280.5" y="26.0" fill="#000" fill-opacity=".6">C</text>
<text x="280.5" y="30.6" fill="#000" fill-opacity=".6">C</text>
<text x="280.5" y="35.2" fill="#000" fill-opacity=".6">C</text>
<text x="280.5" y="39.8" fill="#111" fill-opacity=".9">C</text>
<text x="280.5" y="48.9" fill="#000" fill-opacity=".6">C</text>
<text x="280.5" y="53.5" fill="#000" fill-opacity=".6">C</text>
<text x="280.5" y="58.1" fill="#000" fill-opacity=".6">C</text>
<text x="280.5" y="62.7" fill="#000" fill-opacity=".6">C</text>
<text x="280.5" y="67.3" fill="#000" fill-opacity=".6">C</text>
<text x="280.5" y="71.9" fill="#000" fill-opacity=".6">C</text>
<text x="280.5" y="76.4" fill="#000" fill-opacity=".6">C</text>
<text x="280.5" y="90.2" fill="#000" fill-opacity=".6">C</text>
<text x="280.5" y="94.8" fill="#000" fill-opacity=".6">C</text>
<text x="280.5" y="99.4" fill="#111" fill-opacity=".9">C</text>
<text x="280.5" y="113.1" fill="#111" fill-opacity=".9">C</text>
<text x="280.5" y="117.7" fill="#111" fill-opacity=".9">C</text>
<text x="280.5" y="122.3" fill="#111" fill-opacity=".9">C</text>
<text x="280.5" y="126.9" fill="#111" fill-opacity=".9">C</text>
<text x="280.5" y="131.5" fill="#111" fill-opacity=".9">C</text>
<text x="280.5" y="136.0" fill="#111" fill-opacity=".9">C</text>
<text x="280.5" y="140.6" fill="#000" fill-opacity=".6">C</text>
<text x="280.5" y="145.2" fill="#000" fill-opacity=".6">C</text>
<text x="280.5" y="149.8" fill="#000" fill-opacity=".6">C</text>
<text x="280.5" y="154.4" fill="#000" fill-opacity=".6">C</text>
<text x="280.5" y="159.0" fill="#000" fill-opacity=".6">C</text>
<text x="280.5" y="163.6" fill="#000" fill-opacity=".6">C</text>
<text x="280.5" y="168.1" fill="#000" fill-opacity=".6">C</text>
<text x="280.5" y="172.7" fill="#000" fill-opacity=".6">C</text>
<text x="289.7" y="3.1" fill="#000" fill-opacity=".6">G</text>
<text x="289.7" y="7.7" fill="#000" fill-opacity=".6">G</text>
<text x="289.7" y="12.3" fill="#000" fill-opacity=".6">G</text>
<text x="289.7" y="16.8" fill="#000" fill-opacity=".6">G</text>
<text x="289.7" y="21.4" fill="#000" fill-opacity=".6">G</text>
<text x="289.7" y="26.0" fill="#000" fill-opacity=".6">G</text>
<text x="289.7" y="30.6" fill="#000" fill-opacity=".6">G</text>
<text x="289.7" y="35.2" fill="#000" fill-opacity=".6">G</text>
<text x="289.7" y="44.3" fill="#000" fill-opacity=".6">G</text>
<text x="289.7" y="48.9" fill="#000" fill-opacity=".6">G</text>
<text x="289.7" y="53.5" fill="#000" fill-opacity=".6">G</text>
<text x="289.7" y="58.1" fill="#000" fill-opacity=".6">G</text>
<text x="289.7" y="62.7" fill="#000" fill-opacity=".6">G</text>
<text x="289.7" y="67.3" fill="#000" fill-opacity=".6">G</text>
<text x="289.7" y="71.9" fill="#000" fill-opacity=".6">G</text>
<text x="289.7" y="76.4" fill="#000" fill-opacity=".6">G</text>
<text x="289.7" y="90.2" fill="#000" fill-opacity=".6">G</text>
<text x="289.7" y="94.8" fill="#000" fill-opacity=".6">G</text>
<text x="289.7" y="99.4" fill="#111" fill-opacity=".9">G</text>
<text x="289.7" y="113.1" fill="#111" fill-opacity=".9">G</text>
<text x="289.7" y="117.7" fill="#111" fill-opacity=".9">G</text>
<text x="289.7" y="122.3" fill="#111" fill-opacity=".9">G</text>
<text x="289.7" y="126.9" fill="#111" fill-opacity=".9">G</text>
<text x="289.7" y="131.5" fill="#111" fill-opacity=".9">G</text>
<text x="289.7" y="136.0" fill="#111" fill-opacity=".9">G</text>
<text x="289.7" y="140.6" fill="#000" fill-opacity=".6">G</text>
<text x="289.7" y="145.2" fill="#000" fill-opacity=".6">G</text>
<text x="289.7" y="149.8" fill="#000" fill-opacity=".6">G</text>
<text x="289.7" y="154.4" fill="#000" fill-opacity=".6">G</text>
<text x="289.7" y="159.0" fill="#000" fill-opacity=".6">G</text>
<text x="289.7" y="163.6" fill="#000" fill-opacity=".6">G</text>
<text x="289.7" y="168.1" fill="#000" fill-opacity=".6">G</text>
<text x="289.7" y="172.7" fill="#000" fill-opacity=".6">G</text>
<text x="298.9" y="3.1" fill="#000" fill-opacity=".6">G</text>
<text x="298.9" y="7.7" fill="#000" fill-opacity=".6">G</text>
<text x="298.9" y="12.3" fill="#000" fill-opacity=".6">G</text>
<text x="298.9" y="16.8" fill="#000" fill-opacity=".6">G</text>
<text x="298.9" y="21.4" fill="#000" fill-opacity=".6">G</text>
<text x="298.9" y="26.0" fill="#000" fill-opacity=".6">G</text>
<text x="298.9" y="30.6" fill="#000" fill-opacity=".6">G</text>
<text x="298.9" y="35.2" fill="#000" fill-opacity=".6">G</text>
<text x="298.9" y="39.8" fill="#000" fill-opacity=".6">G</text>
<text x="298.9" y="44.3" fill="#000" fill-opacity=".6">G</text>
<text x="298.9" y="48.9" fill="#000" fill-opacity=".6">G</text>
<text x="298.9" y="53.5" fill="#000" fill-opacity=".6">G</text>
<text x="298.9" y="58.1" fill="#000" fill-opacity=".6">G</text>
<text x="298.9" y="62.7" fill="#000" fill-opacity=".6">G</text>
<text x="298.9" y="67.3" fill="#000" fill-opacity=".6">G</text>
<text x="298.9" y="71.9" fill="#000" fill-opacity=".6">G</text>
<text x="298.9" y="76.4" fill="#000" fill-opacity=".6">G</text>
<text x="298.9" y="90.2" fill="#000" fill-opacity=".6">G</text>
<text x="298.9" y="94.8" fill="#000" fill-opacity=".6">G</text>
<text x="298.9" y="99.4" fill="#111" fill-opacity=".9">G</text>
<text x="298.9" y="113.1" fill="#111" fill-opacity=".9">G</text>
<text x="298.9" y="117.7" fill="#111" fill-opacity=".9">G</text>
<text x="298.9" y="122.3" fill="#111" fill-opacity=".9">G</text>
<text x="298.9" y="126.9" fill="#111" fill-opacity=".9">G</text>
<text x="298.9" y="131.5" fill="#111" fill-opacity=".9">G</text>
<text x="298.9" y="136.0" fill="#111" fill-opacity=".9">G</text>
<text x="298.9" y="140.6" fill="#000" fill-opacity=".6">G</text>
<text x="298.9" y="145.2" fill="#000" fill-opacity=".6">G</text>
<text x="298.9" y="149.8" fill="#000" fill-opacity=".6">G</text>
<text x="298.9" y="154.4" fill="#000" fill-opacity=".6">G</text>
<text x="298.9" y="159.0" fill="#000" fill-opacity=".6">G</text>
<text x="298.9" y="163.6" fill="#000" fill-opacity=".6">G</text>
<text x="298.9" y="168.1" fill="#000" fill-opacity=".6">G</text>
<text x="298.9" y="172.7" fill="#000" fill-opacity=".6">G</text>
<text x="308.1" y="3.1" fill="#000" fill-opacity=".6">G</text>
<text x="308.1" y="7.7" fill="#000" fill-opacity=".6">G</text>
<text x="308.1" y="12.3" fill="#000" fill-opacity=".6">G</text>
<text x="308.1" y="16.8" fill="#000" fill-opacity=".6">G</text>
<text x="308.1" y="21.4" fill="#000" fill-opacity=".6">G</text>
<text x="308.1" y="26.0" fill="#000" fill-opacity=".6">G</text>
<text x="308.1" y="30.6" fill="#000" fill-opacity=".6">G</text>
<text x="308.1" y="35.2" fill="#000" fill-opacity=".6">G</text>
<text x="308.1" y="39.8" fill="#000" fill-opacity=".6">G</text>
<text x="308.1" y="44.3" fill="#000" fill-opacity=".6">G</text>
<text x="308.1" y="48.9" fill="#000" fill-opacity=".6">G</text>
<text x="308.1" y="53.5" fill="#000" fill-opacity=".6">G</text>
<text x="308.1" y="58.1" fill="#000" fill-opacity=".6">G</text>
<text x="308.1" y="62.7" fill="#000" fill-opacity=".6">G</text>
<text x="308.1" y="67.3" fill="#000" fill-opacity=".6">G</text>
<text x="308.1" y="71.9" fill="#000" fill-opacity=".6">G</text>
<text x="308.1" y="76.4" fill="#000" fill-opacity=".6">G</text>
<text x="308.1" y="81.0" fill="#000" fill-opacity=".6">G</text>
<text x="308.1" y="90.2" fill="#000" fill-opacity=".6">G</text>
<text x="308.1" y="94.8" fill="#000" fill-opacity=".6">G</text>
<text x="308.1" y="99.4" fill="#111" fill-opacity=".9">G</text>
<text x="308.1" y="113.1" fill="#111" fill-opacity=".9">G</text>
<text x="308.1" y="117.7" fill="#111" fill-opacity=".9">G</text>
<text x="308.1" y="122.3" fill="#111" fill-opacity=".9">G</text>
<text x="308.1" y="126.9" fill="#111" fill-opacity=".9">G</text>
<text x="308.1" y="131.5" fill="#111" fill-opacity=".9">G</text>
<text x="308.1" y="136.0" fill="#111" fill-opacity=".9">G</text>
<text x="308.1" y="140.6" fill="#000" fill-opacity=".6">G</text>
<text x="308.1" y="145.2" fill="#000" fill-opacity=".6">G</text>
<text x="308.1" y="149.8" fill="#000" fill-opacity=".6">G</text>
<text x="308.1" y="154.4" fill="#000" fill-opacity=".6">G</text>
<text x="308.1" y="159.0" fill="#000" fill-opacity=".6">G</text>
<text x="308.1" y="163.6" fill="#000" fill-opacity=".6">G</text>
<text x="308.1" y="168.1" fill="#000" fill-opacity=".6">G</text>
<text x="308.1" y="172.7" fill="#000" fill-opacity=".6">G</text>
<text x="317.3" y="3.1" fill="#000" fill-opacity=".6">C</text>
<text x="317.3" y="7.7" fill="#000" fill-opacity=".6">C</text>
<text x="317.3" y="12.3" fill="#000" fill-opacity=".6">C</text>
<text x="317.3" y="16.8" fill="#000" fill-opacity=".6">C</text>
<text x="317.3" y="21.4" fill="#000" fill-opacity=".6">C</text>
<text x="317.3" y="26.0" fill="#000" fill-opacity=".6">C</text>
<text x="317.3" y="30.6" fill="#000" fill-opacity=".6">C</text>
<text x="317.3" y="35.2" fill="#000" fill-opacity=".6">C</text>
<text x="317.3" y="39.8" fill="#000" fill-opacity=".6">C</text>
<text x="317.3" y="44.3" fill="#000" fill-opacity=".6">C</text>
<text x="317.3" y="48.9" fill="#000" fill-opacity=".6">C</text>
<text x="317.3" y="53.5" fill="#000" fill-opacity=".6">C</text>
<text x="317.3" y="58.1" fill="#000" fill-opacity=".6">C</text>
<text x="317.3" y="62.7" fill="#000" fill-opacity=".6">C</text>
<text x="317.3" y="67.3" fill="#000" fill-opacity=".6">C</text>
<text x="317.3" y="71.9" fill="#000" fill-opacity=".6">C</text>
<text x="317.3" y="76.4" fill="#000" fill-opacity=".6">C</text>
<text x="317.3" y="81.0" fill="#000" fill-opacity=".6">C</text>
<text x="317.3" y="85.6" fill="#000" fill-opacity=".6">C</text>
<text x="317.3" y="90.2" fill="#000" fill-opacity=".6">C</text>
<text x="317.3" y="94.8" fill="#000" fill-opacity=".6">C</text>
<text x="317.3" y="99.4" fill="#111" fill-opacity=".9">C</text>
<text x="317.3" y="113.1" fill="#111" fill-opacity=".9">C</text>
<text x="317.3" y="117.7" fill="#111" fill-opacity=".9">C</text>
<text x="317.3" y="122.3" fill="#111" fill-opacity=".9">C</text>
<text x="317.3" y="126.9" fill="#111" fill-opacity=".9">C</text>
<text x="317.3" y="131.5" fill="#111" fill-opacity=".9">C</text>
<text x="317.3" y="136.0" fill="#111" fill-opacity=".9">C</text>
<text x="317.3" y="140.6" fill="#000" fill-opacity=".6">C</text>
<text x="317.3" y="145.2" fill="#000" fill-opacity=".6">C</text>
<text x="317.3" y="149.8" fill="#000" fill-opacity=".6">C</text>
<text x="317.3" y="154.4" fill="#000" fill-opacity=".6">C</text>
<text x="317.3" y="159.0" fill="#000" fill-opacity=".6">C</text>
<text x="317.3" y="163.6" fill="#000" fill-opacity=".6">C</text>
<text x="317.3" y="168.1" fill="#000" fill-opacity=".6">C</text>
<text x="317.3" y="172.7" fill="#000" fill-opacity=".6">C</text>
<text x="326.5" y="3.1" fill="#000" fill-opacity=".6">T</text>
<text x="326.5" y="7.7" fill="#000" fill-opacity=".6">T</text>
<text x="326.5" y="12.3" fill="#000" fill-opacity=".6">T</text>
<text x="326.5" y="16.8" fill="#000" fill-opacity=".6">T</text>
<text x="326.5" y="21.4" fill="#000" fill-opacity=".6">T</text>
<text x="326.5" y="26.0" fill="#000" fill-opacity=".6">T</text>
<text x="326.5" y="30.6" fill="#000" fill-opacity=".6">T</text>
<text x="326.5" y="35.2" fill="#000" fill-opacity=".6">T</text>
<text x="326.5" y="39.8" fill="#000" fill-opacity=".6">T</text>
<text x="326.5" y="44.3" fill="#000" fill-opacity=".6">T</text>
<text x="326.5" y="48.9" fill="#000" fill-opacity=".6">T</text>
<text x="326.5" y="53.5" fill="#000" fill-opacity=".6">T</text>
<text x="326.5" y="58.1" fill="#000" fill-opacity=".6">T</text>
<text x="326.5" y="62.7" fill="#000" fill-opacity=".6">T</text>
<text x="326.5" y="67.3" fill="#000" fill-opacity=".6">T</text>
<text x="326.5" y="71.9" fill="#000" fill-opacity=".6">T</text>
<text x="326.5" y="76.4" fill="#000" fill-opacity=".6">T</text>
<text x="326.5" y="81.0" fill="#000" fill-opacity=".6">T</text>
<text x="326.5" y="85.6" fill="#000" fill-opacity=".6">T</text>
<text x="326.5" y="90.2" fill="#000" fill-opacity=".6">T</text>
<text x="326.5" y="94.8" fill="#000" fill-opacity=".6">T</text>
<text x="326.5" y="99.4" fill="#111" fill-opacity=".9">T</text>
<text x="326.5" y="104.0" fill="#000" fill-opacity=".6">T</text>
<text x="326.5" y="113.1" fill="#111" fill-opacity=".9">T</text>
<text x="326.5" y="117.7" fill="#111" fill-opacity=".9">T</text>
<text x="326.5" y="122.3" fill="#111" fill-opacity=".9">T</text>
<text x="326.5" y="126.9" fill="#111" fill-opacity=".9">T</text>
<text x="326.5" y="131.5" fill="#111" fill-opacity=".9">T</text>
<text x="326.5" y="136.0" fill="#111" fill-opacity=".9">T</text>
<text x="326.5" y="140.6" fill="#000" fill-opacity=".6">T</text>
<text x="326.5" y="145.2" fill="#000" fill-opacity=".6">T</text>
<text x="326.5" y="149.8" fill="#000" fill-opacity=".6">T</text>
<text x="326.5" y="154.4" fill="#000" fill-opacity=".6">T</text>
<text x="326.5" y="159.0" fill="#000" fill-opacity=".6">T</text>
<text x="326.5" y="163.6" fill="#000" fill-opacity=".6">T</text>
<text x="326.5" y="168.1" fill="#000" fill-opacity=".6">T</text>
<text x="326.5" y="172.7" fill="#000" fill-opacity=".6">T</text>
<text x="335.7" y="3.1" fill="#000" fill-opacity=".6">G</text>
<text x="335.7" y="7.7" fill="#000" fill-opacity=".6">G</text>
<text x="335.7" y="12.3" fill="#000" fill-opacity=".6">G</text>
<text x="335.7" y="16.8" fill="#000" fill-opacity=".6">G</text>
<text x="335.7" y="21.4" fill="#000" fill-opacity=".6">G</text>
<text x="335.7" y="26.0" fill="#000" fill-opacity=".6">G</text>
<text x="335.7" y="30.6" fill="#000" fill-opacity=".6">G</text>
<text x="335.7" y="39.8" fill="#000" fill-opacity=".6">G</text>
<text x="335.7" y="44.3" fill="#000" fill-opacity=".6">G</text>
<text x="335.7" y="48.9" fill="#000" fill-opacity=".6">G</text>
<text x="335.7" y="53.5" fill="#000" fill-opacity=".6">G</text>
<text x="335.7" y="58.1" fill="#000" fill-opacity=".6">G</text>
<text x="335.7" y="62.7" fill="#000" fill-opacity=".6">G</text>
<text x="335.7" y="67.3" fill="#000" fill-opacity=".6">G</text>
<text x="335.7" y="71.9" fill="#000" fill-opacity=".6">G</text>
<text x="335.7" y="76.4" fill="#000" fill-opacity=".6">G</text>
<text x="335.7" y="81.0" fill="#000" fill-opacity=".6">G</text>
<text x="335.7" y="85.6" fill="#000" fill-opacity=".6">G</text>
<text x="335.7" y="90.2" fill="#000" fill-opacity=".6">G</text>
<text x="335.7" y="94.8" fill="#000" fill-opacity=".6">G</text>
<text x="335.7" y="99.4" fill="#111" fill-opacity=".9">G</text>
<text x="335.7" y="104.0" fill="#000" fill-opacity=".6">G</text>
<text x="335.7" y="108.5" fill="#000" fill-opacity=".6">G</text>
<text x="335.7" y="113.1" fill="#111" fill-opacity=".9">G</text>
<text x="335.7" y="117.7" fill="#111" fill-opacity=".9">G</text>
<text x="335.7" y="122.3" fill="#111" fill-opacity=".9">G</text>
<text x="335.7" y="126.9" fill="#111" fill-opacity=".9">G</text>
<text x="335.7" y="131.5" fill="#111" fill-opacity=".9">G</text>
<text x="335.7" y="136.0" fill="#111" fill-opacity=".9">G</text>
<text x="335.7" y="140.6" fill="#000" fill-opacity=".6">G</text>
<text x="335.7" y="145.2" fill="#000" fill-opacity=".6">G</text>
<text x="335.7" y="149.8" fill="#000" fill-opacity=".6">G</text>
<text x="335.7" y="154.4" fill="#000" fill-opacity=".6">G</text>
<text x="335.7" y="159.0" fill="#000" fill-opacity=".6">G</text>
<text x="335.7" y="163.6" fill="#000" fill-opacity=".6">G</text>
<text x="335.7" y="168.1" fill="#000" fill-opacity=".6">G</text>
<text x="335.7" y="172.7" fill="#000" fill-opacity=".6">G</text>
<text x="344.9" y="3.1" fill="#000" fill-opacity=".6">A</text>
<text x="344.9" y="7.7" fill="#000" fill-opacity=".6">A</text>
<text x="344.9" y="12.3" fill="#000" fill-opacity=".6">A</text>
<text x="344.9" y="16.8" fill="#000" fill-opacity=".6">A</text>
<text x="344.9" y="21.4" fill="#000" fill-opacity=".6">A</text>
<text x="344.9" y="26.0" fill="#000" fill-opacity=".6">A</text>
<text x="344.9" y="35.2" fill="#000" fill-opacity=".6">A</text>
<text x="344.9" y="39.8" fill="#000" fill-opacity=".6">A</text>
<text x="344.9" y="44.3" fill="#000" fill-opacity=".6">A</text>
<text x="344.9" y="48.9" fill="#000" fill-opacity=".6">A</text>
<text x="344.9" y="53.5" fill="#000" fill-opacity=".6">A</text>
<text x="344.9" y="58.1" fill="#000" fill-opacity=".6">A</text>
<text x="344.9" y="62.7" fill="#000" fill-opacity=".6">A</text>
<text x="344.9" y="67.3" fill="#000" fill-opacity=".6">A</text>
<text x="344.9" y="71.9" fill="#000" fill-opacity=".6">A</text>
<text x="344.9" y="76.4" fill="#000" fill-opacity=".6">A</text>
<text x="344.9" y="81.0" fill="#000" fill-opacity=".6">A</text>
<text x="344.9" y="85.6" fill="#000" fill-opacity=".6">A</text>
<text x="344.9" y="90.2" fill="#000" fill-opacity=".6">A</text>
<text x="344.9" y="94.8" fill="#000" fill-opacity=".6">A</text>
<text x="344.9" y="99.4" fill="#111" fill-opacity=".9">A</text>
<text x="344.9" y="104.0" fill="#000" fill-opacity=".6">A</text>
<text x="344.9" y="108.5" fill="#000" fill-opacity=".6">A</text>
<text x="344.9" y="113.1" fill="#111" fill-opacity=".9">A</text>
<text x="344.9" y="117.7" fill="#111" fill-opacity=".9">A</text>
<text x="344.9" y="122.3" fill="#111" fill-opacity=".9">A</text>
<text x="344.9" y="126.9" fill="#111" fill-opacity=".9">A</text>
<text x="344.9" y="131.5" fill="#111" fill-opacity=".9">A</text>
<text x="344.9" y="136.0" fill="#111" fill-opacity=".9">A</text>
<text x="344.9" y="140.6" fill="#000" fill-opacity=".6">A</text>
<text x="344.9" y="145.2" fill="#000" fill-opacity=".6">A</text>
<text x="344.9" y="149.8" fill="#000" fill-opacity=".6">A</text>
<text x="344.9" y="154.4" fill="#000" fill-opacity=".6">A</text>
<text x="344.9" y="159.0" fill="#000" fill-opacity=".6">A</text>
<text x="344.9" y="163.6" fill="#000" fill-opacity=".6">A</text>
<text x="344.9" y="168.1" fill="#000" fill-opacity=".6">A</text>
<text x="344.9" y="172.7" fill="#000" fill-opacity=".6">A</text>
<text x="354.1" y="3.1" fill="#000" fill-opacity=".6">C</text>
<text x="354.1" y="7.7" fill="#000" fill-opacity=".6">C</text>
<text x="354.1" y="12.3" fill="#000" fill-opacity=".6">C</text>
<text x="354.1" y="16.8" fill="#000" fill-opacity=".6">C</text>
<text x="354.1" y="21.4" fill="#000" fill-opacity=".6">C</text>
<text x="354.1" y="30.6" fill="#000" fill-opacity=".6">C</text>
<text x="354.1" y="35.2" fill="#000" fill-opacity=".6">C</text>
<text x="354.1" y="39.8" fill="#000" fill-opacity=".6">C</text>
<text x="354.1" y="44.3" fill="#000" fill-opacity=".6">C</text>
<text x="354.1" y="48.9" fill="#000" fill-opacity=".6">C</text>
<text x="354.1" y="53.5" fill="#000" fill-opacity=".6">C</text>
<text x="354.1" y="58.1" fill="#000" fill-opacity=".6">C</text>
<text x="354.1" y="62.7" fill="#000" fill-opacity=".6">C</text>
<text x="354.1" y="67.3" fill="#000" fill-opacity=".6">C</text>
<text x="354.1" y="71.9" fill="#000" fill-opacity=".6">C</text>
<text x="354.1" y="76.4" fill="#000" fill-opacity=".6">C</text>
<text x="354.1" y="81.0" fill="#000" fill-opacity=".6">C</text>
<text x="354.1" y="85.6" fill="#000" fill-opacity=".6">C</text>
<text x="354.1" y="90.2" fill="#000" fill-opacity=".6">C</text>
<text x="354.1" y="94.8" fill="#000" fill-opacity=".6">C</text>
<text x="354.1" y="99.4" fill="#111" fill-opacity=".9">C</text>
<text x="354.1" y="104.0" fill="#000" fill-opacity=".6">C</text>
<text x="354.1" y="108.5" fill="#000" fill-opacity=".6">C</text>
<text x="354.1" y="113.1" fill="#111" fill-opacity=".9">C</text>
<text x="354.1" y="117.7" fill="#111" fill-opacity=".9">C</text>
<text x="354.1" y="122.3" fill="#111" fill-opacity=".9">C</text>
<text x="354.1" y="126.9" fill="#111" fill-opacity=".9">C</text>
<text x="354.1" y="131.5" fill="#111" fill-opacity=".9">C</text>
<text x="354.1" y="136.0" fill="#111" fill-opacity=".9">C</text>
<text x="354.1" y="140.6" fill="#000" fill-opacity=".6">C</text>
<text x="354.1" y="145.2" fill="#000" fill-opacity=".6">C</text>
<text x="354.1" y="149.8" fill="#000" fill-opacity=".6">C</text>
<text x="354.1" y="154.4" fill="#000" fill-opacity=".6">C</text>
<text x="354.1" y="159.0" fill="#000" fill-opacity=".6">C</text>
<text x="354.1" y="163.6" fill="#000" fill-opacity=".6">C</text>
<text x="354.1" y="168.1" fill="#000" fill-opacity=".6">C</text>
<text x="354.1" y="172.7" fill="#000" fill-opacity=".6">C</text>
<text x="363.3" y="3.1" fill="#000" fill-opacity=".6">G</text>
<text x="363.3" y="7.7" fill="#000" fill-opacity=".6">G</text>
<text x="363.3" y="12.3" fill="#000" fill-opacity=".6">G</text>
<text x="363.3" y="16.8" fill="#000" fill-opacity=".6">G</text>
<text x="363.3" y="26.0" fill="#000" fill-opacity=".6">G</text>
<text x="363.3" y="30.6" fill="#000" fill-opacity=".6">G</text>
<text x="363.3" y="35.2" fill="#000" fill-opacity=".6">G</text>
<text x="363.3" y="39.8" fill="#000" fill-opacity=".6">G</text>
<text x="363.3" y="44.3" fill="#000" fill-opacity=".6">G</text>
<text x="363.3" y="48.9" fill="#000" fill-opacity=".6">G</text>
<text x="363.3" y="53.5" fill="#000" fill-opacity=".6">G</text>
<text x="363.3" y="58.1" fill="#000" fill-opacity=".6">G</text>
<text x="363.3" y="62.7" fill="#000" fill-opacity=".6">G</text>
<text x="363.3" y="67.3" fill="#000" fill-opacity=".6">G</text>
<text x="363.3" y="71.9" fill="#000" fill-opacity=".6">G</text>
<text x="363.3" y="76.4" fill="#000" fill-opacity=".6">G</text>
<text x="363.3" y="81.0" fill="#000" fill-opacity=".6">G</text>
<text x="363.3" y="85.6" fill="#000" fill-opacity=".6">G</text>
<text x="363.3" y="90.2" fill="#000" fill-opacity=".6">G</text>
<text x="363.3" y="94.8" fill="#000" fill-opacity=".6">G</text>
<text x="363.3" y="99.4" fill="#111" fill-opacity=".9">G</text>
<text x="363.3" y="104.0" fill="#000" fill-opacity=".6">G</text>
<text x="363.3" y="108.5" fill="#000" fill-opacity=".6">G</text>
<text x="363.3" y="113.1" fill="#111" fill-opacity=".9">G</text>
<text x="363.3" y="117.7" fill="#111" fill-opacity=".9">G</text>
<text x="363.3" y="122.3" fill="#111" fill-opacity=".9">G</text>
<text x="363.3" y="126.9" fill="#111" fill-opacity=".9">G</text>
<text x="363.3" y="131.5" fill="#111" fill-opacity=".9">G</text>
<text x="363.3" y="136.0" fill="#111" fill-opacity=".9">G</text>
<text x="363.3" y="140.6" fill="#000" fill-opacity=".6">G</text>
<text x="363.3" y="145.2" fill="#000" fill-opacity=".6">G</text>
<text x="363.3" y="149.8" fill="#000" fill-opacity=".6">G</text>
<text x="363.3" y="154.4" fill="#000" fill-opacity=".6">G</text>
<text x="363.3" y="159.0" fill="#000" fill-opacity=".6">G</text>
<text x="363.3" y="163.6" fill="#000" fill-opacity=".6">G</text>
<text x="363.3" y="168.1" fill="#000" fill-opacity=".6">G</text>
<text x="363.3" y="172.7" fill="#000" fill-opacity=".6">G</text>
<text x="372.5" y="3.1" fill="#000" fill-opacity=".6">C</text>
<text x="372.5" y="7.7" fill="#000" fill-opacity=".6">C</text>
<text x="372.5" y="12.3" fill="#000" fill-opacity=".6">C</text>
<text x="372.5" y="21.4" fill="#000" fill-opacity=".6">C</text>
<text x="372.5" y="26.0" fill="#000" fill-opacity=".6">C</text>
<text x="372.5" y="30.6" fill="#000" fill-opacity=".6">C</text>
<text x="372.5" y="35.2" fill="#000" fill-opacity=".6">C</text>
<text x="372.5" y="39.8" fill="#000" fill-opacity=".6">C</text>
<text x="372.5" y="44.3" fill="#000" fill-opacity=".6">C</text>
<text x="372.5" y="48.9" fill="#000" fill-opacity=".6">C</text>
<text x="372.5" y="53.5" fill="#000" fill-opacity=".6">C</text>
<text x="372.5" y="58.1" fill="#000" fill-opacity=".6">C</text>
<text x="372.5" y="62.7" fill="#000" fill-opacity=".6">C</text>
<text x="372.5" y="67.3" fill="#000" fill-opacity=".6">C</text>
<text x="372.5" y="71.9" fill="#000" fill-opacity=".6">C</text>
<text x="372.5" y="76.4" fill="#000" fill-opacity=".6">C</text>
<text x="372.5" y="81.0" fill="#000" fill-opacity=".6">C</text>
<text x="372.5" y="85.6" fill="#000" fill-opacity=".6">C</text>
<text x="372.5" y="90.2" fill="#000" fill-opacity=".6">C</text>
<text x="372.5" y="94.8" fill="#000" fill-opacity=".6">C</text>
<text x="372.5" y="99.4" fill="#111" fill-opacity=".9">C</text>
<text x="372.5" y="104.0" fill="#000" fill-opacity=".6">C</text>
<text x="372.5" y="108.5" fill="#000" fill-opacity=".6">C</text>
<text x="372.5" y="113.1" fill="#111" fill-opacity=".9">C</text>
<text x="372.5" y="117.7" fill="#111" fill-opacity=".9">C</text>
<text x="372.5" y="122.3" fill="#111" fill-opacity=".9">C</text>
<text x="372.5" y="126.9" fill="#111" fill-opacity=".9">C</text>
<text x="372.5" y="131.5" fill="#111" fill-opacity=".9">C</text>
<text x="372.5" y="136.0" fill="#111" fill-opacity=".9">C</text>
<text x="372.5" y="140.6" fill="#000" fill-opacity=".6">C</text>
<text x="372.5" y="145.2" fill="#000" fill-opacity=".6">C</text>
<text x="372.5" y="149.8" fill="#000" fill-opacity=".6">C</text>
<text x="372.5" y="154.4" fill="#000" fill-opacity=".6">C</text>
<text x="372.5" y="159.0" fill="#000" fill-opacity=".6">C</text>
<text x="372.5" y="163.6" fill="#000" fill-opacity=".6">C</text>
<text x="372.5" y="168.1" fill="#000" fill-opacity=".6">C</text>
<text x="372.5" y="172.7" fill="#000" fill-opacity=".6">C</text>
<text x="381.7" y="3.1" fill="#000" fill-opacity=".6">C</text>
<text x="381.7" y="7.7" fill="#000" fill-opacity=".6">C</text>
<text x="381.7" y="16.8" fill="#000" fill-opacity=".6">C</text>
<text x="381.7" y="21.4" fill="#000" fill-opacity=".6">C</text>
<text x="381.7" y="26.0" fill="#000" fill-opacity=".6">C</text>
<text x="381.7" y="30.6" fill="#000" fill-opacity=".6">C</text>
<text x="381.7" y="35.2" fill="#000" fill-opacity=".6">C</text>
<text x="381.7" y="39.8" fill="#000" fill-opacity=".6">C</text>
<text x="381.7" y="44.3" fill="#000" fill-opacity=".6">C</text>
<text x="381.7" y="48.9" fill="#000" fill-opacity=".6">C</text>
<text x="381.7" y="53.5" fill="#000" fill-opacity=".6">C</text>
<text x="381.7" y="58.1" fill="#000" fill-opacity=".6">C</text>
<text x="381.7" y="62.7" fill="#000" fill-opacity=".6">C</text>
<text x="381.7" y="67.3" fill="#000" fill-opacity=".6">C</text>
<text x="381.7" y="71.9" fill="#000" fill-opacity=".6">C</text>
<text x="381.7" y="76.4" fill="#000" fill-opacity=".6">C</text>
<text x="381.7" y="81.0" fill="#000" fill-opacity=".6">C</text>
<text x="381.7" y="85.6" fill="#000" fill-opacity=".6">C</text>
<text x="381.7" y="90.2" fill="#000" fill-opacity=".6">C</text>
<text x="381.7" y="94.8" fill="#000" fill-opacity=".6">C</text>
<text x="381.7" y="99.4" fill="#111" fill-opacity=".9">C</text>
<text x="381.7" y="104.0" fill="#000" fill-opacity=".6">C</text>
<text x="381.7" y="108.5" fill="#000" fill-opacity=".6">C</text>
<text x="381.7" y="113.1" fill="#111" fill-opacity=".9">C</text>
<text x="381.7" y="117.7" fill="#111" fill-opacity=".9">C</text>
<text x="381.7" y="122.3" fill="#111" fill-opacity=".9">C</text>
<text x="381.7" y="126.9" fill="#111" fill-opacity=".9">C</text>
<text x="381.7" y="131.5" fill="#111" fill-opacity=".9">C</text>
<text x="381.7" y="136.0" fill="#111" fill-opacity=".9">C</text>
<text x="381.7" y="140.6" fill="#000" fill-opacity=".6">C</text>
<text x="381.7" y="145.2" fill="#000" fill-opacity=".6">C</text>
<text x="381.7" y="149.8" fill="#000" fill-opacity=".6">C</text>
<text x="381.7" y="154.4" fill="#000" fill-opacity=".6">C</text>
<text x="381.7" y="159.0" fill="#000" fill-opacity=".6">C</text>
<text x="381.7" y="163.6" fill="#000" fill-opacity=".6">C</text>
<text x="381.7" y="168.1" fill="#000" fill-opacity=".6">C</text>
<text x="381.7" y="172.7" fill="#000" fill-opacity=".6">C</text>
<text x="390.9" y="3.1" fill="#000" fill-opacity=".6">T</text>
<text x="390.9" y="12.3" fill="#000" fill-opacity=".6">T</text>
<text x="390.9" y="16.8" fill="#000" fill-opacity=".6">T</text>
<text x="390.9" y="21.4" fill="#000" fill-opacity=".6">T</text>
<text x="390.9" y="26.0" fill="#000" fill-opacity=".6">T</text>
<text x="390.9" y="30.6" fill="#000" fill-opacity=".6">T</text>
<text x="390.9" y="35.2" fill="#000" fill-opacity=".6">T</text>
<text x="390.9" y="39.8" fill="#000" fill-opacity=".6">T</text>
<text x="390.9" y="44.3" fill="#000" fill-opacity=".6">T</text>
<text x="390.9" y="48.9" fill="#000" fill-opacity=".6">T</text>
<text x="390.9" y="53.5" fill="#000" fill-opacity=".6">T</text>
<text x="390.9" y="58.1" fill="#000" fill-opacity=".6">T</text>
<text x="390.9" y="62.7" fill="#000" fill-opacity=".6">T</text>
<text x="390.9" y="67.3" fill="#000" fill-opacity=".6">T</text>
<text x="390.9" y="71.9" fill="#000" fill-opacity=".6">T</text>
<text x="390.9" y="76.4" fill="#000" fill-opacity=".6">T</text>
<text x="390.9" y="81.0" fill="#000" fill-opacity=".6">T</text>
<text x="390.9" y="85.6" fill="#000" fill-opacity=".6">T</text>
<text x="390.9" y="90.2" fill="#000" fill-opacity=".6">T</text>
<text x="390.9" y="94.8" fill="#000" fill-opacity=".6">T</text>
<text x="390.9" y="99.4" fill="#111" fill-opacity=".9">T</text>
<text x="390.9" y="104.0" fill="#000" fill-opacity=".6">T</text>
<text x="390.9" y="108.5" fill="#000" fill-opacity=".6">T</text>
<text x="390.9" y="113.1" fill="#111" fill-opacity=".9">T</text>
<text x="390.9" y="117.7" fill="#111" fill-opacity=".9">T</text>
<text x="390.9" y="122.3" fill="#111" fill-opacity=".9">T</text>
<text x="390.9" y="126.9" fill="#111" fill-opacity=".9">T</text>
<text x="390.9" y="131.5" fill="#111" fill-opacity=".9">T</text>
<text x="390.9" y="136.0" fill="#111" fill-opacity=".9">T</text>
<text x="390.9" y="140.6" fill="#000" fill-opacity=".6">T</text>
<text x="390.9" y="145.2" fill="#000" fill-opacity=".6">T</text>
<text x="390.9" y="149.8" fill="#000" fill-opacity=".6">T</text>
<text x="390.9" y="154.4" fill="#000" fill-opacity=".6">T</text>
<text x="390.9" y="159.0" fill="#000" fill-opacity=".6">T</text>
<text x="390.9" y="163.6" fill="#000" fill-opacity=".6">T</text>
<text x="390.9" y="168.1" fill="#000" fill-opacity=".6">T</text>
<text x="390.9" y="172.7" fill="#000" fill-opacity=".6">T</text>
<text x="400.1" y="7.7" fill="#000" fill-opacity=".6">A</text>
<text x="400.1" y="12.3" fill="#000" fill-opacity=".6">A</text>
<text x="400.1" y="16.8" fill="#000" fill-opacity=".6">A</text>
<text x="400.1" y="21.4" fill="#000" fill-opacity=".6">A</text>
<text x="400.1" y="26.0" fill="#000" fill-opacity=".6">A</text>
<text x="400.1" y="30.6" fill="#000" fill-opacity=".6">A</text>
<text x="400.1" y="35.2" fill="#000" fill-opacity=".6">A</text>
<text x="400.1" y="39.8" fill="#000" fill-opacity=".6">A</text>
<text x="400.1" y="44.3" fill="#000" fill-opacity=".6">A</text>
<text x="400.1" y="48.9" fill="#000" fill-opacity=".6">A</text>
<text x="400.1" y="53.5" fill="#000" fill-opacity=".6">A</text>
<text x="400.1" y="58.1" fill="#000" fill-opacity=".6">A</text>
<text x="400.1" y="62.7" fill="#000" fill-opacity=".6">A</text>
<text x="400.1" y="67.3" fill="#000" fill-opacity=".6">A</text>
<text x="400.1" y="71.9" fill="#000" fill-opacity=".6">A</text>
<text x="400.1" y="76.4" fill="#000" fill-opacity=".6">A</text>
<text x="400.1" y="81.0" fill="#000" fill-opacity=".6">A</text>
<text x="400.1" y="85.6" fill="#000" fill-opacity=".6">A</text>
<text x="400.1" y="90.2" fill="#000" fill-opacity=".6">A</text>
<text x="400.1" y="94.8" fill="#000" fill-opacity=".6">A</text>
<text x="400.1" y="99.4" fill="#111" fill-opacity=".9">A</text>
<text x="400.1" y="104.0" fill="#000" fill-opacity=".6">A</text>
<text x="400.1" y="108.5" fill="#000" fill-opacity=".6">A</text>
<text x="400.1" y="113.1" fill="#111" fill-opacity=".9">A</text>
<text x="400.1" y="117.7" fill="#111" fill-opacity=".9">A</text>
<text x="400.1" y="122.3" fill="#111" fill-opacity=".9">A</text>
<text x="400.1" y="126.9" fill="#111" fill-opacity=".9">A</text>
<text x="400.1" y="131.5" fill="#111" fill-opacity=".9">A</text>
<text x="400.1" y="136.0" fill="#111" fill-opacity=".9">A</text>
<text x="400.1" y="140.6" fill="#000" fill-opacity=".6">A</text>
<text x="400.1" y="145.2" fill="#000" fill-opacity=".6">A</text>
<text x="400.1" y="149.8" fill="#000" fill-opacity=".6">A</text>
<text x="400.1" y="154.4" fill="#000" fill-opacity=".6">A</text>
<text x="400.1" y="159.0" fill="#000" fill-opacity=".6">A</text>
<text x="400.1" y="163.6" fill="#000" fill-opacity=".6">A</text>
<text x="400.1" y="168.1" fill="#000" fill-opacity=".6">A</text>
<text x="400.1" y="172.7" fill="#000" fill-opacity=".6">A</text>
<text x="409.3" y="3.1" fill="#000" fill-opacity=".6">C</text>
<text x="409.3" y="7.7" fill="#000" fill-opacity=".6">C</text>
<text x="409.3" y="12.3" fill="#000" fill-opacity=".6">C</text>
<text x="409.3" y="16.8" fill="#000" fill-opacity=".6">C</text>
<text x="409.3" y="21.4" fill="#000" fill-opacity=".6">C</text>
<text x="409.3" y="26.0" fill="#000" fill-opacity=".6">C</text>
<text x="409.3" y="30.6" fill="#000" fill-opacity=".6">C</text>
<text x="409.3" y="35.2" fill="#000" fill-opacity=".6">C</text>
<text x="409.3" y="39.8" fill="#000" fill-opacity=".6">C</text>
<text x="409.3" y="44.3" fill="#000" fill-opacity=".6">C</text>
<text x="409.3" y="48.9" fill="#000" fill-opacity=".6">C</text>
<text x="409.3" y="53.5" fill="#000" fill-opacity=".6">C</text>
<text x="409.3" y="58.1" fill="#000" fill-opacity=".6">C</text>
<text x="409.3" y="62.7" fill="#000" fill-opacity=".6">C</text>
<text x="409.3" y="67.3" fill="#000" fill-opacity=".6">C</text>
<text x="409.3" y="71.9" fill="#000" fill-opacity=".6">C</text>
<text x="409.3" y="76.4" fill="#000" fill-opacity=".6">C</text>
<text x="409.3" y="81.0" fill="#000" fill-opacity=".6">C</text>
<text x="409.3" y="85.6" fill="#000" fill-opacity=".6">C</text>
<text x="409.3" y="94.8" fill="#000" fill-opacity=".6">C</text>
<text x="409.3" y="99.4" fill="#111" fill-opacity=".9">C</text>
<text x="409.3" y="104.0" fill="#000" fill-opacity=".6">C</text>
<text x="409.3" y="108.5" fill="#000" fill-opacity=".6">C</text>
<text x="409.3" y="113.1" fill="#111" fill-opacity=".9">C</text>
<text x="409.3" y="117.7" fill="#111" fill-opacity=".9">C</text>
<text x="409.3" y="122.3" fill="#111" fill-opacity=".9">C</text>
<text x="409.3" y="126.9" fill="#111" fill-opacity=".9">C</text>
<text x="409.3" y="131.5" fill="#111" fill-opacity=".9">C</text>
<text x="409.3" y="136.0" fill="#111" fill-opacity=".9">C</text>
<text x="409.3" y="140.6" fill="#000" fill-opacity=".6">C</text>
<text x="409.3" y="145.2" fill="#000" fill-opacity=".6">C</text>
<text x="409.3" y="149.8" fill="#000" fill-opacity=".6">C</text>
<text x="409.3" y="154.4" fill="#000" fill-opacity=".6">C</text>
<text x="409.3" y="159.0" fill="#000" fill-opacity=".6">C</text>
<text x="409.3" y="163.6" fill="#000" fill-opacity=".6">C</text>
<text x="409.3" y="168.1" fill="#000" fill-opacity=".6">C</text>
<text x="409.3" y="172.7" fill="#000" fill-opacity=".6">C</text>
<text x="418.5" y="3.1" fill="#000" fill-opacity=".6">A</text>
<text x="418.5" y="7.7" fill="#000" fill-opacity=".6">A</text>
<text x="418.5" y="12.3" fill="#000" fill-opacity=".6">A</text>
<text x="418.5" y="16.8" fill="#000" fill-opacity=".6">A</text>
<text x="418.5" y="21.4" fill="#000" fill-opacity=".6">A</text>
<text x="418.5" y="26.0" fill="#000" fill-opacity=".6">A</text>
<text x="418.5" y="30.6" fill="#000" fill-opacity=".6">A</text>
<text x="418.5" y="35.2" fill="#000" fill-opacity=".6">A</text>
<text x="418.5" y="39.8" fill="#000" fill-opacity=".6">A</text>
<text x="418.5" y="44.3" fill="#000" fill-opacity=".6">A</text>
<text x="418.5" y="48.9" fill="#000" fill-opacity=".6">A</text>
<text x="418.5" y="53.5" fill="#000" fill-opacity=".6">A</text>
<text x="418.5" y="58.1" fill="#000" fill-opacity=".6">A</text>
<text x="418.5" y="62.7" fill="#000" fill-opacity=".6">A</text>
<text x="418.5" y="67.3" fill="#000" fill-opacity=".6">A</text>
<text x="418.5" y="71.9" fill="#000" fill-opacity=".6">A</text>
<text x="418.5" y="76.4" fill="#000" fill-opacity=".6">A</text>
<text x="418.5" y="81.0" fill="#000" fill-opacity=".6">A</text>
<text x="418.5" y="85.6" fill="#000" fill-opacity=".6">A</text>
<text x="418.5" y="90.2" fill="#000" fill-opacity=".6">A</text>
<text x="418.5" y="99.4" fill="#111" fill-opacity=".9">A</text>
<text x="418.5" y="104.0" fill="#000" fill-opacity=".6">A</text>
<text x="418.5" y="108.5" fill="#000" fill-opacity=".6">A</text>
<text x="418.5" y="113.1" fill="#111" fill-opacity=".9">A</text>
<text x="418.5" y="117.7" fill="#111" fill-opacity=".9">A</text>
<text x="418.5" y="122.3" fill="#111" fill-opacity=".9">A</text>
<text x="418.5" y="126.9" fill="#111" fill-opacity=".9">A</text>
<text x="418.5" y="131.5" fill="#111" fill-opacity=".9">A</text>
<text x="418.5" y="136.0" fill="#111" fill-opacity=".9">A</text>
<text x="418.5" y="140.6" fill="#000" fill-opacity=".6">A</text>
<text x="418.5" y="145.2" fill="#000" fill-opacity=".6">A</text>
<text x="418.5" y="149.8" fill="#000" fill-opacity=".6">A</text>
<text x="418.5" y="154.4" fill="#000" fill-opacity=".6">A</text>
<text x="418.5" y="159.0" fill="#000" fill-opacity=".6">A</text>
<text x="418.5" y="163.6" fill="#000" fill-opacity=".6">A</text>
<text x="418.5" y="168.1" fill="#000" fill-opacity=".6">A</text>
<text x="418.5" y="172.7" fill="#000" fill-opacity=".6">A</text>
</g>
<g fill="#4b6d86" fill-opacity=".88" stroke="#86a8be" stroke-opacity=".6" stroke-width=".5"><path d="M14.5 168 L5.5 177.5 L14.5 187 Z M24 168 L15 177.5 L24 187 Z"/><path d="M395 168 L404 177.5 L395 187 Z M403.5 168 L412.5 177.5 L403.5 187 Z"/></g>
</svg></div>
<div class="a" style="left:216.5px;top:409.5px;width:421px;height:9px;background:linear-gradient(#e6e6e6,#fdfdfd 40%,#fff);border-bottom:1px solid #cfcfcf;box-sizing:border-box"></div>
<div class="a" style="left:239.3px;top:410.6px;width:11.4px;height:7.6px;border-radius:4px;background:linear-gradient(#bcd6fa,#5c93e6 50%,#3f7ede 55%,#9cc3f6);box-shadow:0 0 0 .5px #2f5fb4"></div>
<div class="a" style="left:217px;top:410px;width:5px;height:8px;border-radius:4px 0 0 4px;border:1px solid #b4b4b4;border-right:none;box-sizing:border-box"></div>
<div class="a" style="left:617px;top:410px;width:20px;height:8.5px;border-left:1px solid #d4d4d4;border-radius:4px 0 0 4px;background:linear-gradient(#f4f4f4,#e4e4e4 60%,#efefef);box-sizing:border-box"></div>
<svg class="a" style="left:617px;top:410px" width="20" height="9" viewBox="0 0 20 9"><path d="M7.2 2.7 L4.2 4.3 L7.2 5.9 Z M14 2.7 L17.1 4.3 L14 5.9 Z" fill="#2a2a2a"/><path d="M10.3 .5 V8" stroke="#c8c8c8" stroke-width=".7"/></svg>
<div id="txt" style="position:absolute;left:0;top:0;width:640px;height:432px;will-change:transform;">
<span class="t" id="t0" style="left:240.50px;top:3px;font-size:8.20px;color:#222;letter-spacing:0.151px;">ecoli_out_sorted.bam - Tablet - 1.11.08.10</span>
<span class="t" id="t1" style="left:67.50px;top:17px;font-size:8.05px;color:#111;letter-spacing:0.072px;white-space:pre;">NC_000913_bb  |  consensus length: 5,074 (5,074)  |  reads: 442  |  features: 1</span>
<span class="t" id="t2" style="left:365.00px;top:17px;font-size:7.79px;color:#111;letter-spacing:0.080px;">Memory usage: 109.79 MB (20)</span>
<span class="t" id="t3" style="left:36.30px;top:31px;font-size:7.53px;color:#000;letter-spacing:0.103px;">Home</span>
<span class="t" id="t4" style="left:74.50px;top:31px;font-size:7.60px;color:#000;letter-spacing:0.086px;">Advanced</span>
<span class="t" id="t5" style="left:628.60px;top:32px;font-size:8.00px;color:#fff;font-weight:bold;">?</span>
<span class="t" id="t6" style="left:5.80px;top:93px;font-size:7.25px;color:#000;letter-spacing:0.058px;">D...</span>
<span class="t" id="t7" style="left:154.50px;top:93px;font-size:7.94px;color:#000;letter-spacing:0.074px;">Layout Style</span>
<span class="t" id="t8" style="left:400.50px;top:92px;font-size:8.30px;color:#000;letter-spacing:0.078px;">Adjust</span>
<span class="t" id="t9" style="left:495.80px;top:93px;font-size:7.95px;color:#000;letter-spacing:0.080px;">Navigate</span>
<span class="t" id="t10" style="left:535.50px;top:93px;font-size:7.71px;color:#000;letter-spacing:0.077px;">Overlays</span>
<span class="t" id="t11" style="left:34.70px;top:74px;font-size:8.09px;color:#111;letter-spacing:0.078px;">Nucleotide</span>
<span class="t" id="t12" style="left:92.70px;top:74px;font-size:8.07px;color:#111;letter-spacing:0.072px;">Direction</span>
<span class="t" id="t13" style="left:145.50px;top:74px;font-size:7.43px;color:#111;letter-spacing:0.081px;">Read Type</span>
<span class="t" id="t14" style="left:197.80px;top:74px;font-size:7.47px;color:#111;letter-spacing:0.083px;">Read Group</span>
<span class="t" id="t15" style="left:260.50px;top:74px;font-size:7.75px;color:#111;letter-spacing:0.073px;">Classic</span>
<span class="t" id="t16" style="left:268.20px;top:49px;font-size:10.80px;color:#1a1a1a;font-family:'Liberation Serif',serif;">T</span>
<span class="t" id="t17" style="left:272.20px;top:52px;font-size:11.20px;color:#b81c1c;font-family:'Liberation Serif',serif;">T</span>
<span class="t" id="t18" style="left:346.50px;top:47px;font-size:7.96px;color:#111;letter-spacing:0.092px;">Zoom:</span>
<span class="t" id="t19" style="left:346.50px;top:63px;font-size:8.22px;color:#111;letter-spacing:0.072px;">Variants:</span>
<span class="t" id="t20" style="left:10.30px;top:128px;font-size:8.40px;color:#111;letter-spacing:-0.092px;">Contigs: 1</span>
<span class="t" id="t21" style="left:146.30px;top:128px;font-size:8.40px;color:#111;letter-spacing:-0.108px;">442 total reads</span>
<span class="t" id="t22" style="left:9.70px;top:142px;font-size:6.90px;color:#111;letter-spacing:0.146px;">Contig</span>
<span class="t" id="t23" style="left:48.80px;top:142px;font-size:6.90px;color:#111;letter-spacing:-0.046px;">Length</span>
<span class="t" id="t24" style="left:88.00px;top:142px;font-size:6.90px;color:#111;letter-spacing:-0.324px;">Reads</span>
<span class="t" id="t25" style="left:126.80px;top:142px;font-size:6.90px;color:#111;letter-spacing:-0.113px;">Features</span>
<span class="t" id="t26" style="left:166.70px;top:142px;font-size:6.90px;color:#111;letter-spacing:-0.203px;">Mismatch %</span>
<span class="t" id="t27" style="left:9.00px;top:151px;font-size:7.62px;color:#fff;letter-spacing:0.078px;">NC_000...</span>
<span class="t" id="t28" style="left:64.50px;top:151px;font-size:7.63px;color:#fff;letter-spacing:0.078px;">5,074</span>
<span class="t" id="t29" style="left:110.50px;top:151px;font-size:7.63px;color:#fff;letter-spacing:0.087px;">442</span>
<span class="t" id="t30" style="left:159.20px;top:151px;font-size:7.63px;color:#fff;">1</span>
<span class="t" id="t31" style="left:197.70px;top:151px;font-size:7.63px;color:#f0b0c0;">0</span>
<span class="t" id="t32" style="left:10.30px;top:377px;font-size:8.40px;color:#111;letter-spacing:-0.212px;">Filter by:</span>
<span class="t" id="t33" style="left:55.30px;top:377px;font-size:8.40px;color:#111;letter-spacing:-0.336px;">Name</span>
<span class="t" id="t34" style="left:3.40px;top:422px;font-size:8.40px;color:#111;letter-spacing:-0.107px;">Tablet Tip:</span>
<span class="t" id="t35" style="left:620.70px;top:423px;font-size:8.00px;color:#111;">0</span>
<span class="t" id="t36" style="left:220.60px;top:144px;font-size:8.40px;color:#111;letter-spacing:-0.157px;">1 to 5,074 (5.1 Kb)</span>
<span class="t" id="t37" style="left:568.10px;top:144px;font-size:8.40px;color:#e62020;letter-spacing:-0.114px;">232 to 277 (46 bp)</span>
<span class="t" id="t38" style="left:218.20px;top:165px;font-size:3.90px;color:#444;letter-spacing:0.043px;">CIGAR-I</span>
<span class="t" id="t39" style="left:219.60px;top:202px;font-size:7.96px;color:#ee1c1c;letter-spacing:0.088px;">232 U232</span>
<span class="t" id="t40" style="left:406.30px;top:202px;font-size:7.65px;color:#ee1c1c;letter-spacing:0.085px;">255 U255 CV31</span>
<span class="t" id="t41" style="left:601.30px;top:202px;font-size:8.02px;color:#ee1c1c;letter-spacing:0.089px;">277 U277</span>
</div>
</body></html>
